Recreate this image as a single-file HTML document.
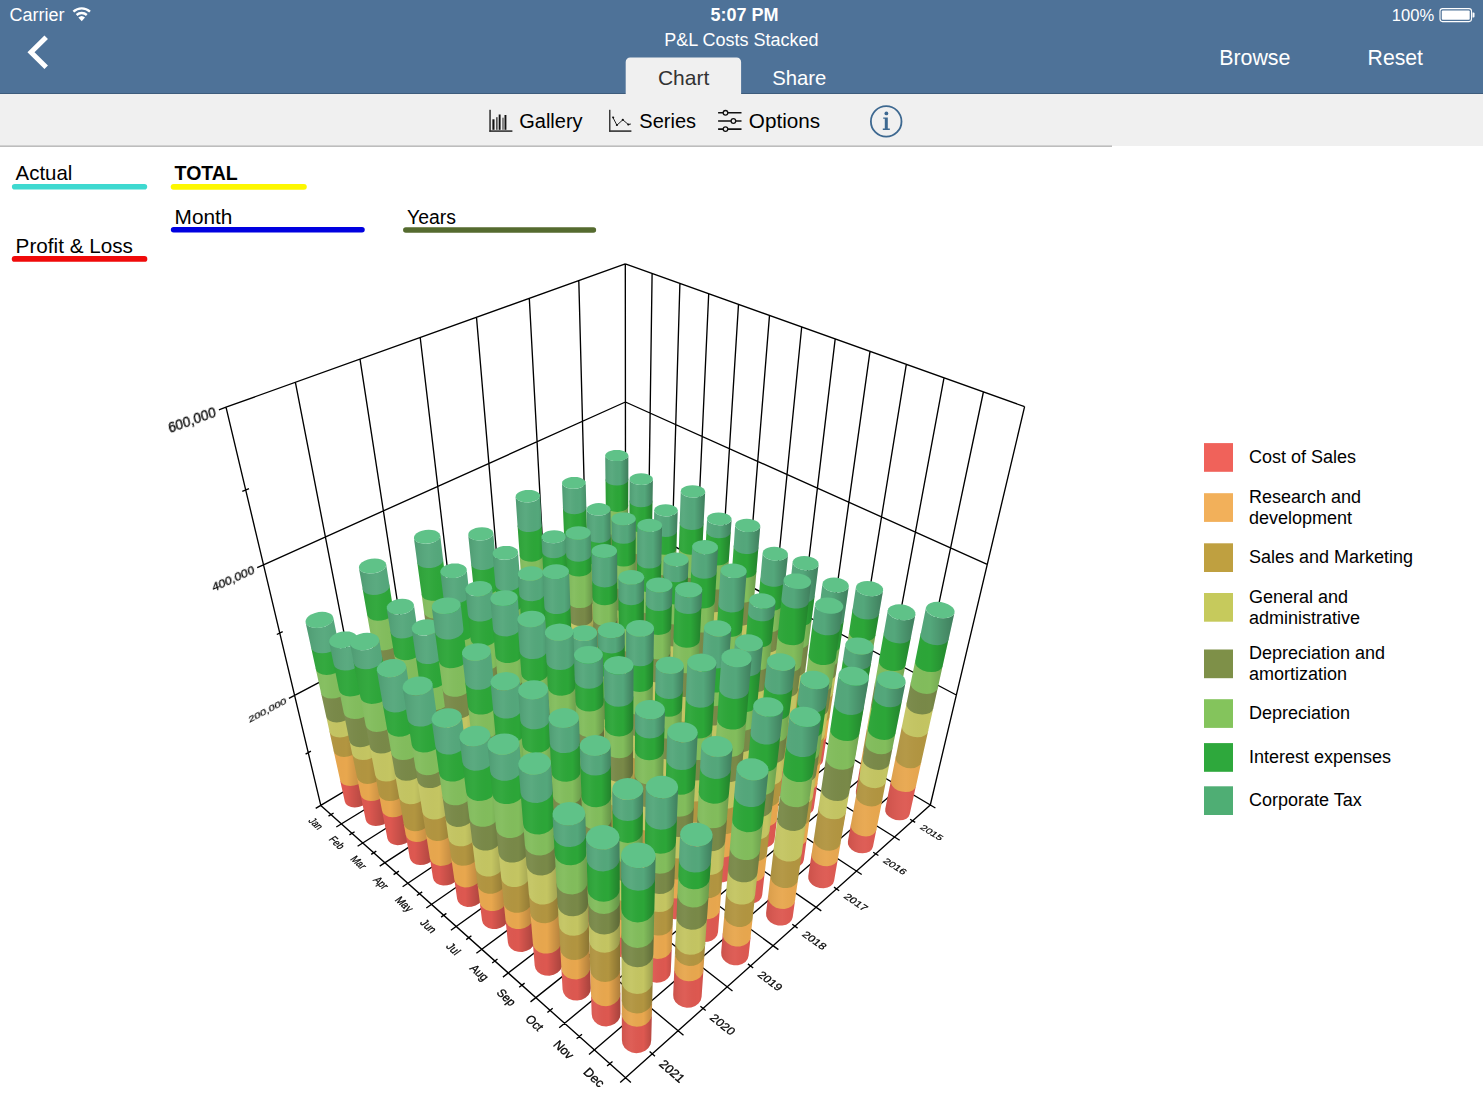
<!DOCTYPE html>
<html><head><meta charset="utf-8"><title>P&amp;L Costs Stacked</title>
<style>html,body{margin:0;padding:0;background:#fff;overflow:hidden}svg{display:block;font-family:"Liberation Sans",sans-serif}</style></head>
<body><svg width="1483" height="1112" viewBox="0 0 1483 1112">
<rect x="0" y="0" width="1483" height="94" fill="#4e7298"/>
<rect x="0" y="94" width="1483" height="52" fill="#f0f0f0"/>
<rect x="0" y="145.6" width="1112" height="1.1" fill="#a2a2a2"/><rect x="0" y="93" width="1483" height="1" fill="#3d5c7c"/>
<path d="M625.7 94V62a4.5 4.5 0 0 1 4.5-4.5h106.4a4.5 4.5 0 0 1 4.5 4.5V94z" fill="#f0f0f0"/>
<text x="9.5" y="20.9" font-size="18" fill="#fff">Carrier</text>
<g fill="none" stroke="#fff" stroke-width="2.4"><path d="M73.4 11.6a12.2 12.2 0 0 1 16.6 0"/><path d="M76.6 15a7.6 7.6 0 0 1 10.2 0"/></g><path d="M81.7 21.3l-3.3-3.7a4.8 4.8 0 0 1 6.6 0z" fill="#fff"/>
<text x="744.4" y="20.9" font-size="18" fill="#fff" text-anchor="middle" font-weight="bold">5:07 PM</text>
<text x="1391.8" y="20.6" font-size="16.6" fill="#fff">100%</text>
<rect x="1440" y="8.6" width="31.5" height="13" rx="2.5" fill="none" stroke="#fff" stroke-width="1.1"/><rect x="1441.8" y="10.4" width="27.9" height="9.4" rx="1" fill="#fff"/><path d="M1472.5 12.6h1a1 1 0 0 1 1 1v3a1 1 0 0 1-1 1h-1z" fill="#fff"/>
<text x="741.4" y="45.9" font-size="18" fill="#fff" text-anchor="middle">P&amp;L Costs Stacked</text>
<path d="M46.2 37.2L31 52.2l15.2 15" fill="none" stroke="#fff" stroke-width="5"/>
<text x="683.6" y="84.8" font-size="21" fill="#333" text-anchor="middle">Chart</text>
<text x="799.3" y="84.8" font-size="20.3" fill="#fff" text-anchor="middle">Share</text>
<text x="1254.8" y="64.5" font-size="21.4" fill="#fff" text-anchor="middle">Browse</text>
<text x="1395.3" y="64.5" font-size="21.2" fill="#fff" text-anchor="middle">Reset</text>
<g fill="#111"><rect x="489.4" y="109.8" width="1.3" height="22"/><rect x="489.4" y="130.3" width="23" height="1.6" fill="#333"/><rect x="492.4" y="119.3" width="2.1" height="10.5"/><rect x="496.1" y="117.2" width="1.5" height="12.6" fill="#444"/><rect x="498.7" y="114.5" width="1.9" height="15.3"/><rect x="502.4" y="117.7" width="1.2" height="12.1" fill="#444"/><rect x="504.5" y="115" width="1.9" height="14.8"/></g>
<text x="550.9" y="127.9" font-size="20" fill="#000" text-anchor="middle">Gallery</text>
<g><rect x="609.2" y="109.8" width="1.2" height="22" fill="#111"/><rect x="609.2" y="130.3" width="22.2" height="1.6" fill="#333"/><path d="M612.6 116.8l4.3 8.4 5.9-5.4 5.5 4.7 2.6-.5" fill="none" stroke="#222" stroke-width="1"/><circle cx="616.9" cy="125" r="1.1" fill="#111"/><circle cx="622.8" cy="119.8" r="1.1" fill="#111"/><circle cx="628.3" cy="124.5" r="1.1" fill="#111"/><circle cx="613.2" cy="117.6" r="1" fill="#111"/></g>
<text x="667.7" y="127.9" font-size="20" fill="#000" text-anchor="middle">Series</text>
<g stroke="#111" stroke-width="1.6" fill="none"><path d="M718.1 112.8h23.4M718.1 121h23.4M718.1 129.1h23.4"/></g><g fill="#f0f0f0" stroke="#111" stroke-width="1.3"><circle cx="725.5" cy="112.8" r="2.3"/><circle cx="733.4" cy="121" r="2.3"/><circle cx="725.5" cy="129.1" r="2.3"/></g>
<text x="784.5" y="127.6" font-size="20.7" fill="#000" text-anchor="middle">Options</text>
<circle cx="886.2" cy="121.4" r="15.3" fill="none" stroke="#3d6890" stroke-width="1.8"/><circle cx="886.4" cy="113.4" r="1.9" fill="#3d6890"/><path d="M883.2 117.4h4.6v11.2h2v1.4h-7v-1.4h2v-9.8h-1.6z" fill="#3d6890"/>
<text x="15.6" y="180" font-size="20.4" fill="#000">Actual</text>
<path d="M14.7 186.7H144.4" stroke="#3ed9d0" stroke-width="5.6" stroke-linecap="round"/>
<text x="174.6" y="180" font-size="19.5" fill="#000" font-weight="bold">TOTAL</text>
<path d="M173.6 186.8H303.9" stroke="#fdf700" stroke-width="5.8" stroke-linecap="round"/>
<text x="174.6" y="223.5" font-size="20.8" fill="#000">Month</text>
<path d="M173.6 229.8H362" stroke="#0000e0" stroke-width="5.5" stroke-linecap="round"/>
<text x="407" y="223.5" font-size="19.4" fill="#000">Years</text>
<path d="M405.8 230.1H593.4" stroke="#556b2f" stroke-width="5.5" stroke-linecap="round"/>
<text x="15.6" y="252.6" font-size="20.7" fill="#000">Profit &amp; Loss</text>
<path d="M14.7 258.9H144.4" stroke="#f00a0a" stroke-width="5.9" stroke-linecap="round"/>
<rect x="1204" y="443.1" width="29" height="28.7" fill="#f0625a"/>
<text x="1249" y="463.4" font-size="18" fill="#000">Cost of Sales</text>
<rect x="1204" y="493.2" width="29" height="28.7" fill="#f2b05a"/>
<text x="1249" y="502.9" font-size="18" fill="#000">Research and</text>
<text x="1249" y="523.7" font-size="18" fill="#000">development</text>
<rect x="1204" y="543.3" width="29" height="28.7" fill="#bfa040"/>
<text x="1249" y="563" font-size="18" fill="#000">Sales and Marketing</text>
<rect x="1204" y="593" width="29" height="28.7" fill="#c6ca5c"/>
<text x="1249" y="603" font-size="18" fill="#000">General and</text>
<text x="1249" y="623.7" font-size="18" fill="#000">administrative</text>
<rect x="1204" y="649.5" width="29" height="28.7" fill="#7e9048"/>
<text x="1249" y="659.4" font-size="18" fill="#000">Depreciation and</text>
<text x="1249" y="680.1" font-size="18" fill="#000">amortization</text>
<rect x="1204" y="699.2" width="29" height="28.7" fill="#84c45c"/>
<text x="1249" y="719.2" font-size="18" fill="#000">Depreciation</text>
<rect x="1204" y="743.1" width="29" height="28.7" fill="#2ea83c"/>
<text x="1249" y="762.6" font-size="18" fill="#000">Interest expenses</text>
<rect x="1204" y="786.3" width="29" height="28.7" fill="#4fae74"/>
<text x="1249" y="806" font-size="18" fill="#000">Corporate Tax</text>
<path d="M625.6 623.7L625.3 263.8M588.4 645.8L578.8 280.6M549.4 669.1L529.3 298.3M508.4 693.5L476.5 317.3M465.2 719.3L420.2 337.5M419.7 746.4L360 359.1M371.6 775.1L295.4 382.3M320.8 805.4L226 407.2M625.5 520.6L294.6 695.4M625.4 402L263.5 564.8M625.3 263.8L226 407.2M625.6 623.7L625.3 263.8M647 636.5L652.1 273.4M669.1 649.6L679.9 283.4M691.8 663.1L708.7 293.7M715.1 677L738.5 304.4M739.2 691.3L769.5 315.4M764 706.1L801.7 327M789.6 721.3L835.2 338.9M816 737L870 351.4M843.2 753.2L906.3 364.4M871.3 769.9L944 377.9M900.3 787.1L983.4 392M930.3 805L1024.6 406.7M625.5 520.6L956.3 695M625.4 402L987.2 564.3M625.3 263.8L1024.6 406.7M625.6 623.7L315.7 808.4M647 636.5L336.3 827M669.1 649.6L357.6 846.2M691.8 663.1L379.7 866.1M715.1 677L402.6 886.7M739.2 691.3L426.3 908M764 706.1L450.9 930.2M789.6 721.3L476.4 953.2M816 737L502.9 977.1M843.2 753.2L530.5 1001.9M871.3 769.9L559.2 1027.7M900.3 787.1L589 1054.6M930.3 805L620.2 1082.6M625.6 623.7L935.4 808M588.4 645.8L899.7 840.3M549.4 669.1L861.7 874.5M508.4 693.5L821.3 910.9M465.2 719.3L778.4 949.6M419.7 746.4L732.5 991M371.6 775.1L683.5 1035.2M320.8 805.4L630.9 1082.6M333.6 813L328.5 816.1M354.6 831.7L349.4 834.9M376.3 851.1L371.2 854.4M398.9 871.1L393.6 874.6M422.2 891.9L416.9 895.5M446.4 913.4L441.1 917.1M471.4 935.8L466.2 939.6M497.5 959L492.2 963M524.6 983.1L519.2 987.3M552.7 1008.2L547.4 1012.5M582 1034.3L576.6 1038.8M612.5 1061.4L607.1 1066.1M910.1 819.2L915.2 822.4M873.2 852.2L878.4 855.5M834 887.1L839.2 890.7M792.3 924.3L797.6 928.1M747.9 963.9L753.2 968M700.4 1006.3L705.7 1010.6M649.6 1051.6L655 1056.2M320.8 805.4L315.7 808.4M294.6 695.4L288.9 698.4M263.5 564.8L257.2 567.7M226 407.2L218.9 409.8M310.9 751.1L305.6 754.2M282.7 631.6L276.8 634.5M249 488.6L242.3 491.3" stroke="#000" stroke-width="1.35" fill="none"/>
<g fill="#000" stroke="#000" stroke-width="0.25" style="opacity:.99">
<text transform="matrix(0.6168 0.5629 -0.9326 0.5638 316.2 823.5)" font-size="10" text-anchor="middle" y="3.6">Jan</text>
<text transform="matrix(0.6383 0.5825 -0.9379 0.5835 337.1 842.5)" font-size="10" text-anchor="middle" y="3.6">Feb</text>
<text transform="matrix(0.6610 0.6032 -0.9430 0.6042 358.8 862.3)" font-size="10" text-anchor="middle" y="3.6">Mar</text>
<text transform="matrix(0.6849 0.6250 -0.9479 0.6261 381.2 882.8)" font-size="10" text-anchor="middle" y="3.6">Apr</text>
<text transform="matrix(0.7102 0.6481 -0.9524 0.6491 404.5 904)" font-size="10" text-anchor="middle" y="3.6">May</text>
<text transform="matrix(0.7368 0.6724 -0.9567 0.6734 428.6 926)" font-size="10" text-anchor="middle" y="3.6">Jun</text>
<text transform="matrix(0.7650 0.6981 -0.9606 0.6992 453.6 948.8)" font-size="10" text-anchor="middle" y="3.6">Jul</text>
<text transform="matrix(0.7949 0.7253 -0.9641 0.7264 479.6 972.5)" font-size="10" text-anchor="middle" y="3.6">Aug</text>
<text transform="matrix(0.8265 0.7542 -0.9672 0.7553 506.6 997.2)" font-size="10" text-anchor="middle" y="3.6">Sep</text>
<text transform="matrix(0.8600 0.7848 -0.9697 0.7859 534.7 1022.8)" font-size="10" text-anchor="middle" y="3.6">Oct</text>
<text transform="matrix(0.8957 0.8173 -0.9716 0.8185 563.9 1049.5)" font-size="10" text-anchor="middle" y="3.6">Nov</text>
<text transform="matrix(0.9336 0.8519 -0.9728 0.8531 594.4 1077.3)" font-size="10" text-anchor="middle" y="3.6">Dec</text>
<text transform="matrix(0.9285 0.5659 -0.6255 0.5668 921.5 826.2)" font-size="10" text-anchor="start" y="3.6">2015</text>
<text transform="matrix(0.9370 0.6005 -0.6638 0.6015 884.7 859.5)" font-size="10" text-anchor="start" y="3.6">2016</text>
<text transform="matrix(0.9449 0.6384 -0.7057 0.6395 845.6 895)" font-size="10" text-anchor="start" y="3.6">2017</text>
<text transform="matrix(0.9518 0.6801 -0.7516 0.6811 804 932.7)" font-size="10" text-anchor="start" y="3.6">2018</text>
<text transform="matrix(0.9576 0.7259 -0.8022 0.7270 759.6 972.9)" font-size="10" text-anchor="start" y="3.6">2019</text>
<text transform="matrix(0.9620 0.7765 -0.8581 0.7776 712.2 1015.8)" font-size="10" text-anchor="start" y="3.6">2020</text>
<text transform="matrix(0.9646 0.8326 -0.9201 0.8338 661.5 1061.8)" font-size="10" text-anchor="start" y="3.6">2021</text>
<text transform="matrix(1.0368 -0.5477 0.2241 0.9143 286.1 699.9)" font-size="10" text-anchor="end" y="3.6">200,000</text>
<text transform="matrix(1.1540 -0.5193 0.2683 1.0946 254 569.1)" font-size="10" text-anchor="end" y="3.6">400,000</text>
<text transform="matrix(1.3001 -0.4668 0.3270 1.3340 215.3 411.1)" font-size="10" text-anchor="end" y="3.6">600,000</text>
</g>
<defs>
<linearGradient id="sh" x1="0" x2="1"><stop offset="0" stop-color="#000" stop-opacity=".08"/><stop offset=".3" stop-color="#fff" stop-opacity=".04"/><stop offset=".65" stop-color="#000" stop-opacity="0"/><stop offset="1" stop-color="#000" stop-opacity=".25"/></linearGradient>
</defs>
<path d="M628.1 641.1L627.6 643L626.2 644.7L623.9 646.1L621.1 647.1L617.9 647.4L614.7 647.1L611.8 646.2L609.6 644.8L608.1 643.1L607.6 641.2L607.3 617.3L607.8 619.2L609.3 621L611.6 622.3L614.5 623.2L617.7 623.5L621 623.2L623.9 622.3L626.2 620.9L627.6 619.1L628.1 617.2Z" fill="#dd5850"/><path d="M628.1 618.4L627.6 620.3L626.2 622.1L623.9 623.5L621 624.4L617.8 624.7L614.5 624.4L611.6 623.5L609.3 622.2L607.8 620.4L607.3 618.5L607 596.4L607.5 598.3L609 600L611.4 601.3L614.3 602.2L617.6 602.5L620.9 602.2L623.9 601.3L626.2 599.9L627.7 598.2L628.1 596.3Z" fill="#e8a74e"/><path d="M628.1 597.5L627.7 599.4L626.2 601.1L623.9 602.5L620.9 603.4L617.6 603.7L614.3 603.4L611.4 602.6L609 601.2L607.5 599.5L607 597.6L606.7 573.6L607.2 575.4L608.8 577.1L611.1 578.5L614.1 579.3L617.5 579.6L620.8 579.3L623.8 578.4L626.2 577L627.7 575.3L628.2 573.5Z" fill="#b29540"/><path d="M628.2 574.7L627.7 576.6L626.2 578.3L623.8 579.7L620.8 580.5L617.5 580.9L614.2 580.6L611.2 579.7L608.8 578.4L607.3 576.7L606.7 574.8L606.4 550.4L606.9 552.3L608.5 553.9L610.9 555.3L614 556.1L617.3 556.4L620.7 556.1L623.8 555.2L626.2 553.8L627.7 552.2L628.2 550.3Z" fill="#c4c562"/><path d="M628.2 551.6L627.7 553.5L626.2 555.2L623.8 556.5L620.7 557.4L617.4 557.7L614 557.4L610.9 556.6L608.5 555.3L607 553.6L606.4 551.7L606.1 528.3L606.7 530.1L608.2 531.8L610.7 533.1L613.8 533.9L617.2 534.2L620.6 533.9L623.7 533L626.2 531.7L627.7 530L628.2 528.2Z" fill="#798948"/><path d="M628.2 529.5L627.7 531.4L626.2 533L623.7 534.3L620.7 535.2L617.2 535.5L613.8 535.2L610.7 534.4L608.2 533.1L606.7 531.5L606.2 529.7L605.8 504.7L606.4 506.5L607.9 508.1L610.4 509.4L613.6 510.2L617.1 510.5L620.6 510.2L623.7 509.3L626.2 508L627.7 506.4L628.2 504.6Z" fill="#82bd5c"/><path d="M628.2 506L627.7 507.8L626.2 509.4L623.7 510.7L620.6 511.6L617.1 511.9L613.6 511.6L610.5 510.8L608 509.5L606.4 507.9L605.8 506.1L605.5 478.4L606 480.1L607.6 481.7L610.2 483L613.4 483.8L616.9 484.1L620.5 483.7L623.6 482.9L626.2 481.6L627.8 480L628.3 478.3Z" fill="#2ca638"/><path d="M628.3 479.7L627.8 481.5L626.2 483.1L623.6 484.4L620.5 485.2L616.9 485.5L613.4 485.2L610.2 484.4L607.7 483.2L606 481.6L605.5 479.8L605.2 455.5L605.7 457.3L607.4 458.8L609.9 460.1L613.2 460.9L616.8 461.1L620.4 460.8L623.6 460L626.2 458.8L627.8 457.2L628.3 455.4Z" fill="#54a77b"/><path d="M628.1 641.1L627.6 643L626.2 644.7L623.9 646.1L621.1 647.1L617.9 647.4L614.7 647.1L611.8 646.2L609.6 644.8L608.1 643.1L607.6 641.2L605.2 455.5L605.7 457.3L607.4 458.8L609.9 460.1L613.2 460.9L616.8 461.1L620.4 460.8L623.6 460L626.2 458.8L627.8 457.2L628.3 455.4Z" fill="url(#sh)"/><path d="M624.9 459.5L622.5 460.4L619.7 460.9L616.7 461.1L613.7 460.9L610.9 460.4L608.5 459.5L606.7 458.3L605.5 456.9L605.2 455.5L605.6 454L606.8 452.7L608.7 451.6L611.1 450.7L613.8 450.1L616.8 449.9L619.8 450.1L622.5 450.7L624.9 451.5L626.8 452.7L627.9 454L628.3 455.5L627.9 456.9L626.8 458.3Z" fill="#5fc288"/>
<path d="M650 654.5L649.5 656.4L648 658.2L645.7 659.6L642.8 660.5L639.5 660.8L636.3 660.5L633.4 659.5L631.1 658.1L629.7 656.3L629.2 654.3L629.3 631.5L629.7 633.5L631.2 635.3L633.5 636.7L636.5 637.7L639.8 638L643 637.7L646 636.8L648.4 635.4L649.9 633.7L650.4 631.7Z" fill="#dd5850"/><path d="M650.4 632.9L649.8 634.9L648.3 636.6L646 638L643 638.9L639.7 639.2L636.5 638.9L633.5 637.9L631.2 636.5L629.7 634.7L629.3 632.7L629.3 611.6L629.8 613.6L631.3 615.3L633.6 616.8L636.6 617.7L639.9 618L643.3 617.8L646.3 616.9L648.7 615.5L650.2 613.7L650.7 611.8Z" fill="#e8a74e"/><path d="M650.7 613L650.2 615L648.6 616.7L646.3 618.1L643.3 619L639.9 619.3L636.6 618.9L633.6 618L631.3 616.6L629.8 614.8L629.3 612.9L629.3 589.9L629.8 591.9L631.3 593.6L633.7 595L636.8 596L640.1 596.3L643.5 596L646.6 595.1L649 593.8L650.5 592L651.1 590.1Z" fill="#b29540"/><path d="M651 591.4L650.5 593.3L649 595.1L646.6 596.4L643.5 597.3L640.1 597.6L636.8 597.2L633.7 596.3L631.3 594.9L629.8 593.2L629.3 591.2L629.4 568L629.9 569.9L631.4 571.6L633.8 573L636.9 573.9L640.3 574.3L643.8 574L646.9 573.1L649.3 571.8L650.9 570.1L651.4 568.2Z" fill="#c4c562"/><path d="M651.4 569.5L650.9 571.4L649.3 573.1L646.8 574.4L643.8 575.3L640.3 575.6L636.9 575.3L633.8 574.3L631.4 572.9L629.9 571.2L629.4 569.3L629.4 547L629.9 548.9L631.5 550.6L633.9 552L637.1 552.9L640.5 553.2L644 552.9L647.1 552.1L649.6 550.7L651.2 549L651.8 547.2Z" fill="#798948"/><path d="M651.7 548.5L651.2 550.4L649.6 552.1L647.1 553.4L644 554.3L640.5 554.6L637 554.2L633.9 553.3L631.5 551.9L629.9 550.2L629.4 548.3L629.5 524.7L630 526.5L631.6 528.2L634 529.6L637.2 530.5L640.7 530.8L644.3 530.5L647.4 529.7L650 528.4L651.6 526.7L652.1 524.8Z" fill="#82bd5c"/><path d="M652.1 526.2L651.6 528.1L649.9 529.8L647.4 531.1L644.3 531.9L640.7 532.2L637.2 531.9L634 531L631.6 529.6L630 527.9L629.5 526.1L629.5 499.8L630 501.6L631.6 503.3L634.2 504.6L637.4 505.5L641 505.8L644.6 505.6L647.8 504.7L650.3 503.4L652 501.8L652.5 499.9Z" fill="#2ca638"/><path d="M652.5 501.4L652 503.2L650.3 504.9L647.8 506.2L644.5 507L641 507.3L637.4 506.9L634.2 506.1L631.6 504.7L630 503L629.5 501.2L629.6 479L630.1 480.8L631.7 482.5L634.3 483.8L637.5 484.7L641.2 485L644.8 484.7L648.1 483.9L650.7 482.6L652.3 481L652.9 479.2Z" fill="#54a77b"/><path d="M650 654.5L649.5 656.4L648 658.2L645.7 659.6L642.8 660.5L639.5 660.8L636.3 660.5L633.4 659.5L631.1 658.1L629.7 656.3L629.2 654.3L629.6 479L630.1 480.8L631.7 482.5L634.3 483.8L637.5 484.7L641.2 485L644.8 484.7L648.1 483.9L650.7 482.6L652.3 481L652.9 479.2Z" fill="url(#sh)"/><path d="M649.6 483.2L647.2 484.2L644.4 484.8L641.3 485L638.3 484.8L635.4 484.2L633 483.3L631.1 482L630 480.6L629.6 479.1L629.9 477.6L631.1 476.2L632.9 475L635.3 474.1L638.1 473.5L641.1 473.3L644.1 473.5L646.9 474.1L649.3 475L651.2 476.2L652.4 477.6L652.9 479.1L652.5 480.6L651.4 482Z" fill="#5fc288"/>
<path d="M590.3 663.8L589.9 665.8L588.4 667.7L586.2 669.2L583.3 670.3L580 670.7L576.7 670.5L573.7 669.6L571.4 668.3L569.8 666.5L569.3 664.5L568.3 641.3L568.9 643.3L570.5 645.1L572.9 646.5L575.9 647.3L579.2 647.5L582.5 647.1L585.5 646.1L587.8 644.5L589.3 642.7L589.7 640.7Z" fill="#dd5850"/><path d="M589.7 641.9L589.3 643.9L587.8 645.8L585.5 647.3L582.6 648.3L579.3 648.7L575.9 648.5L572.9 647.7L570.5 646.3L569 644.5L568.4 642.5L567.5 621L568.1 623L569.7 624.8L572.1 626.1L575.2 627L578.6 627.2L581.9 626.7L584.9 625.7L587.3 624.2L588.7 622.4L589.2 620.4Z" fill="#e8a74e"/><path d="M589.2 621.6L588.8 623.6L587.3 625.5L585 627L582 628L578.6 628.4L575.2 628.2L572.2 627.4L569.7 626L568.2 624.3L567.6 622.3L566.6 599L567.2 600.9L568.8 602.6L571.3 604L574.4 604.8L577.8 605L581.2 604.6L584.3 603.6L586.7 602.1L588.2 600.3L588.6 598.3Z" fill="#b29540"/><path d="M588.6 599.6L588.2 601.6L586.7 603.4L584.3 604.9L581.3 605.9L577.9 606.3L574.5 606.1L571.4 605.3L568.9 603.9L567.3 602.2L566.7 600.2L565.7 576.6L566.3 578.5L568 580.2L570.5 581.5L573.6 582.4L577.1 582.6L580.6 582.2L583.7 581.2L586.1 579.7L587.6 577.9L588 575.9Z" fill="#c4c562"/><path d="M588.1 577.2L587.6 579.2L586.1 581L583.7 582.5L580.6 583.5L577.1 583.9L573.7 583.7L570.5 582.9L568 581.5L566.4 579.8L565.8 577.9L564.9 555.2L565.5 557.1L567.1 558.8L569.7 560.1L572.9 560.9L576.4 561.1L579.9 560.7L583 559.7L585.5 558.2L587 556.5L587.5 554.5Z" fill="#798948"/><path d="M587.5 555.9L587.1 557.8L585.5 559.6L583.1 561.1L580 562L576.4 562.5L572.9 562.3L569.7 561.4L567.2 560.1L565.5 558.4L564.9 556.5L564 532.4L564.6 534.2L566.2 535.9L568.8 537.2L572.1 538L575.7 538.2L579.2 537.8L582.4 536.9L584.9 535.4L586.5 533.6L586.9 531.7Z" fill="#82bd5c"/><path d="M587 533.1L586.5 535L584.9 536.8L582.4 538.3L579.3 539.2L575.7 539.6L572.1 539.4L568.9 538.6L566.3 537.3L564.6 535.7L564 533.8L562.9 506.9L563.6 508.8L565.3 510.4L567.9 511.7L571.2 512.5L574.8 512.7L578.4 512.3L581.7 511.3L584.2 509.9L585.8 508.2L586.3 506.3Z" fill="#2ca638"/><path d="M586.3 507.8L585.8 509.6L584.2 511.4L581.7 512.8L578.5 513.8L574.9 514.2L571.2 514L567.9 513.2L565.3 511.9L563.6 510.2L563 508.4L562 483.2L562.6 485L564.3 486.6L567 487.9L570.3 488.6L574 488.8L577.7 488.4L581 487.5L583.6 486.1L585.2 484.4L585.7 482.5Z" fill="#54a77b"/><path d="M590.3 663.8L589.9 665.8L588.4 667.7L586.2 669.2L583.3 670.3L580 670.7L576.7 670.5L573.7 669.6L571.4 668.3L569.8 666.5L569.3 664.5L562 483.2L562.6 485L564.3 486.6L567 487.9L570.3 488.6L574 488.8L577.7 488.4L581 487.5L583.6 486.1L585.2 484.4L585.7 482.5Z" fill="url(#sh)"/><path d="M582 487.1L579.4 488L576.5 488.6L573.4 488.8L570.4 488.6L567.5 488L565.1 487.1L563.3 485.8L562.3 484.4L562 482.9L562.5 481.3L563.8 479.9L565.8 478.7L568.3 477.7L571.2 477.1L574.2 476.9L577.3 477.1L580.1 477.7L582.4 478.7L584.2 479.9L585.4 481.3L585.7 482.8L585.2 484.4L583.9 485.8Z" fill="#5fc288"/>
<path d="M672.5 668.3L672 670.3L670.5 672.1L668.1 673.5L665.1 674.4L661.8 674.7L658.6 674.2L655.6 673.2L653.3 671.7L651.9 669.8L651.5 667.8L651.8 646.4L652.3 648.4L653.7 650.3L656.1 651.8L659 652.8L662.4 653.2L665.7 653L668.7 652.1L671.1 650.7L672.7 648.9L673.2 646.9Z" fill="#dd5850"/><path d="M673.2 648.1L672.6 650.1L671.1 651.9L668.7 653.3L665.7 654.2L662.3 654.4L659 654L656 653L653.7 651.5L652.3 649.6L651.8 647.6L652.2 627.8L652.6 629.8L654.1 631.6L656.5 633.1L659.5 634.1L662.8 634.5L666.2 634.3L669.3 633.4L671.7 632.1L673.3 630.3L673.8 628.3Z" fill="#e8a74e"/><path d="M673.8 629.5L673.2 631.5L671.7 633.3L669.2 634.7L666.2 635.5L662.8 635.8L659.4 635.4L656.4 634.4L654.1 632.9L652.6 631L652.1 629L652.5 607.6L653 609.6L654.5 611.4L656.9 612.9L659.9 613.9L663.3 614.3L666.8 614L669.9 613.2L672.3 611.8L673.9 610L674.5 608Z" fill="#b29540"/><path d="M674.5 609.3L673.9 611.3L672.3 613.1L669.8 614.5L666.7 615.3L663.3 615.6L659.9 615.2L656.8 614.2L654.5 612.7L653 610.8L652.5 608.8L652.9 587.1L653.3 589.1L654.9 590.9L657.3 592.4L660.4 593.4L663.9 593.7L667.3 593.5L670.5 592.7L673 591.3L674.6 589.5L675.2 587.6Z" fill="#c4c562"/><path d="M675.1 588.9L674.6 590.9L672.9 592.6L670.4 594L667.3 594.8L663.8 595.1L660.4 594.7L657.3 593.7L654.8 592.2L653.3 590.4L652.9 588.4L653.2 567.6L653.7 569.5L655.2 571.3L657.7 572.8L660.8 573.8L664.3 574.2L667.9 573.9L671.1 573.1L673.6 571.7L675.2 570L675.8 568.1Z" fill="#798948"/><path d="M675.8 569.4L675.2 571.4L673.5 573.1L671 574.4L667.8 575.3L664.3 575.5L660.8 575.1L657.7 574.2L655.2 572.7L653.7 570.9L653.2 568.9L653.6 546.9L654.1 548.8L655.6 550.6L658.1 552L661.3 553L664.9 553.4L668.4 553.1L671.7 552.3L674.2 551L675.9 549.3L676.5 547.3Z" fill="#82bd5c"/><path d="M676.4 548.7L675.8 550.6L674.2 552.4L671.6 553.7L668.4 554.5L664.8 554.8L661.3 554.4L658.1 553.4L655.6 552L654 550.2L653.6 548.2L653.9 529.1L654.4 531L656 532.8L658.5 534.2L661.7 535.1L665.3 535.5L668.9 535.3L672.2 534.5L674.8 533.2L676.5 531.5L677 529.6Z" fill="#2ca638"/><path d="M677 531L676.4 532.9L674.7 534.6L672.1 535.9L668.9 536.7L665.3 536.9L661.7 536.6L658.5 535.6L655.9 534.2L654.4 532.4L653.9 530.5L654.2 510L654.7 511.9L656.3 513.7L658.9 515.1L662.1 516L665.8 516.4L669.4 516.2L672.7 515.4L675.4 514.1L677.1 512.4L677.7 510.5Z" fill="#54a77b"/><path d="M672.5 668.3L672 670.3L670.5 672.1L668.1 673.5L665.1 674.4L661.8 674.7L658.6 674.2L655.6 673.2L653.3 671.7L651.9 669.8L651.5 667.8L654.2 510L654.7 511.9L656.3 513.7L658.9 515.1L662.1 516L665.8 516.4L669.4 516.2L672.7 515.4L675.4 514.1L677.1 512.4L677.7 510.5Z" fill="url(#sh)"/><path d="M674.5 514.6L672.1 515.6L669.3 516.2L666.3 516.4L663.2 516.2L660.3 515.6L657.8 514.6L655.9 513.4L654.7 511.9L654.2 510.3L654.6 508.7L655.7 507.3L657.5 506L659.9 505L662.6 504.4L665.6 504.2L668.7 504.4L671.5 505L674 506L675.9 507.2L677.2 508.7L677.7 510.3L677.4 511.9L676.3 513.3Z" fill="#5fc288"/>
<path d="M612.2 677.9L611.7 680L610.2 681.9L607.9 683.4L605 684.5L601.6 684.8L598.3 684.6L595.3 683.7L592.9 682.2L591.4 680.3L590.9 678.3L590.3 657L590.9 659.1L592.4 660.9L594.8 662.4L597.9 663.3L601.3 663.5L604.6 663.2L607.6 662.1L610 660.6L611.5 658.7L612 656.6Z" fill="#dd5850"/><path d="M612 657.8L611.5 659.9L610 661.8L607.7 663.4L604.6 664.4L601.3 664.8L597.9 664.5L594.9 663.6L592.5 662.1L590.9 660.3L590.4 658.2L589.9 638.5L590.4 640.6L592 642.4L594.4 643.8L597.5 644.7L600.9 645L604.3 644.6L607.4 643.6L609.8 642.1L611.3 640.2L611.8 638.1Z" fill="#e8a74e"/><path d="M611.8 639.4L611.3 641.4L609.8 643.3L607.4 644.9L604.4 645.9L601 646.2L597.5 646L594.5 645.1L592 643.6L590.4 641.8L589.9 639.8L589.4 618.4L589.9 620.5L591.5 622.3L594 623.7L597.1 624.6L600.6 624.9L604 624.5L607.1 623.5L609.6 622L611.1 620.1L611.6 618.1Z" fill="#b29540"/><path d="M611.6 619.3L611.1 621.4L609.6 623.3L607.1 624.8L604.1 625.8L600.6 626.2L597.1 625.9L594 625L591.5 623.6L589.9 621.7L589.4 619.7L588.8 598.1L589.4 600.1L591 601.9L593.5 603.4L596.7 604.2L600.2 604.5L603.7 604.1L606.9 603.1L609.3 601.6L610.9 599.8L611.4 597.8Z" fill="#c4c562"/><path d="M611.4 599.1L610.9 601.1L609.3 603L606.9 604.5L603.7 605.4L600.2 605.8L596.7 605.6L593.6 604.7L591.1 603.3L589.4 601.5L588.9 599.4L588.4 578.7L588.9 580.7L590.6 582.5L593.1 583.9L596.3 584.8L599.9 585.1L603.4 584.7L606.6 583.7L609.1 582.2L610.7 580.4L611.2 578.4Z" fill="#798948"/><path d="M611.2 579.7L610.7 581.7L609.1 583.6L606.6 585.1L603.4 586L599.9 586.4L596.3 586.2L593.1 585.3L590.6 583.9L589 582.1L588.4 580.1L587.8 558.2L588.4 560.1L590.1 561.9L592.7 563.3L595.9 564.1L599.5 564.4L603.1 564L606.3 563.1L608.9 561.6L610.5 559.8L611 557.8Z" fill="#82bd5c"/><path d="M611 559.2L610.5 561.2L608.9 563L606.3 564.5L603.1 565.4L599.5 565.8L595.9 565.5L592.7 564.7L590.1 563.3L588.4 561.5L587.9 559.5L587.3 535.2L587.8 537.2L589.5 538.9L592.1 540.3L595.4 541.2L599.1 541.4L602.8 541L606 540.1L608.6 538.6L610.2 536.9L610.7 534.9Z" fill="#2ca638"/><path d="M610.7 536.3L610.2 538.3L608.6 540.1L606 541.5L602.8 542.5L599.1 542.9L595.5 542.6L592.2 541.7L589.6 540.4L587.9 538.6L587.3 536.7L586.6 509.5L587.2 511.4L588.9 513.1L591.6 514.4L594.9 515.3L598.6 515.5L602.4 515.2L605.7 514.2L608.3 512.8L609.9 511L610.5 509.1Z" fill="#54a77b"/><path d="M612.2 677.9L611.7 680L610.2 681.9L607.9 683.4L605 684.5L601.6 684.8L598.3 684.6L595.3 683.7L592.9 682.2L591.4 680.3L590.9 678.3L586.6 509.5L587.2 511.4L588.9 513.1L591.6 514.4L594.9 515.3L598.6 515.5L602.4 515.2L605.7 514.2L608.3 512.8L609.9 511L610.5 509.1Z" fill="url(#sh)"/><path d="M606.9 513.7L604.4 514.7L601.4 515.3L598.3 515.5L595.2 515.3L592.3 514.7L589.9 513.7L588.1 512.4L586.9 510.9L586.6 509.3L587.1 507.7L588.4 506.2L590.3 504.9L592.8 504L595.7 503.3L598.8 503.1L601.8 503.3L604.6 503.9L607.1 504.9L608.9 506.2L610.1 507.7L610.5 509.3L610 510.9L608.8 512.4Z" fill="#5fc288"/>
<path d="M695.8 682.5L695.2 684.6L693.6 686.4L691.2 687.8L688.1 688.7L684.8 688.9L681.5 688.4L678.5 687.3L676.2 685.7L674.8 683.8L674.4 681.6L675.2 658L675.6 660.1L677 662.1L679.4 663.7L682.4 664.7L685.8 665.2L689.2 665L692.2 664.2L694.7 662.8L696.3 660.9L696.9 658.9Z" fill="#dd5850"/><path d="M696.9 660.1L696.3 662.2L694.7 664L692.2 665.4L689.1 666.2L685.7 666.4L682.3 666L679.3 664.9L677 663.3L675.5 661.3L675.1 659.2L675.9 637.3L676.3 639.4L677.8 641.3L680.1 642.9L683.2 644L686.6 644.4L690.1 644.2L693.2 643.4L695.7 642L697.3 640.2L698 638.2Z" fill="#e8a74e"/><path d="M697.9 639.4L697.3 641.5L695.7 643.3L693.1 644.7L690 645.5L686.6 645.7L683.2 645.2L680.1 644.2L677.7 642.6L676.3 640.6L675.8 638.6L676.6 614.7L677.1 616.8L678.6 618.7L681 620.3L684.1 621.3L687.6 621.8L691.1 621.6L694.3 620.8L696.8 619.4L698.5 617.6L699.1 615.6Z" fill="#b29540"/><path d="M699 616.9L698.4 618.9L696.7 620.7L694.2 622.1L691 622.9L687.5 623.1L684 622.6L680.9 621.5L678.5 620L677 618.1L676.6 616L677.4 591.8L677.9 593.8L679.4 595.7L681.8 597.3L685 598.3L688.5 598.8L692.1 598.6L695.3 597.8L697.9 596.4L699.6 594.6L700.2 592.6Z" fill="#c4c562"/><path d="M700.1 594L699.5 596L697.8 597.7L695.3 599.1L692 599.9L688.5 600.1L684.9 599.7L681.8 598.6L679.3 597L677.8 595.2L677.4 593.1L678.2 569.8L678.6 571.9L680.2 573.7L682.7 575.3L685.9 576.3L689.4 576.8L693.1 576.6L696.3 575.8L698.9 574.4L700.7 572.7L701.3 570.7Z" fill="#798948"/><path d="M701.2 572L700.6 574L698.9 575.8L696.3 577.1L693 577.9L689.4 578.1L685.8 577.7L682.6 576.6L680.1 575.1L678.6 573.2L678.1 571.2L679 546.5L679.4 548.5L681 550.3L683.5 551.8L686.8 552.9L690.4 553.3L694.1 553.1L697.4 552.3L700.1 551L701.8 549.2L702.4 547.3Z" fill="#82bd5c"/><path d="M702.4 548.7L701.7 550.7L700 552.4L697.3 553.7L694 554.5L690.4 554.7L686.7 554.3L683.5 553.2L680.9 551.7L679.4 549.9L678.9 547.9L679.8 521.8L680.3 523.7L681.9 525.6L684.4 527.1L687.7 528.1L691.4 528.5L695.2 528.3L698.6 527.5L701.3 526.2L703 524.5L703.6 522.6Z" fill="#2ca638"/><path d="M703.6 524.1L702.9 526L701.2 527.7L698.5 529L695.1 529.8L691.4 530L687.7 529.5L684.4 528.5L681.8 527L680.2 525.2L679.7 523.2L680.8 491L681.3 492.9L683 494.7L685.6 496.2L689 497.2L692.7 497.6L696.5 497.4L700 496.6L702.7 495.3L704.5 493.7L705.2 491.8Z" fill="#54a77b"/><path d="M695.8 682.5L695.2 684.6L693.6 686.4L691.2 687.8L688.1 688.7L684.8 688.9L681.5 688.4L678.5 687.3L676.2 685.7L674.8 683.8L674.4 681.6L680.8 491L681.3 492.9L683 494.7L685.6 496.2L689 497.2L692.7 497.6L696.5 497.4L700 496.6L702.7 495.3L704.5 493.7L705.2 491.8Z" fill="url(#sh)"/><path d="M702 495.8L699.6 496.8L696.7 497.4L693.5 497.6L690.4 497.4L687.4 496.8L684.7 495.8L682.7 494.5L681.4 493L680.8 491.4L681.1 489.8L682.2 488.3L684.1 487L686.5 486.1L689.4 485.5L692.5 485.2L695.6 485.4L698.6 486.1L701.2 487L703.2 488.3L704.6 489.8L705.1 491.4L704.9 493L703.8 494.5Z" fill="#5fc288"/>
<path d="M550.5 687.7L550.2 689.8L548.8 691.8L546.5 693.5L543.5 694.7L540.2 695.2L536.8 695.1L533.7 694.3L531.3 692.9L529.6 691.1L529 689L527.3 665.5L528 667.5L529.6 669.3L532.2 670.7L535.3 671.5L538.7 671.6L542.1 671.1L545.1 669.9L547.5 668.3L548.9 666.3L549.3 664.1Z" fill="#dd5850"/><path d="M549.3 665.4L548.9 667.5L547.5 669.5L545.2 671.2L542.2 672.3L538.8 672.9L535.4 672.7L532.2 671.9L529.7 670.6L528.1 668.8L527.4 666.7L525.9 644.8L526.6 646.9L528.2 648.7L530.8 650L534 650.8L537.4 651L540.9 650.4L543.9 649.3L546.3 647.6L547.7 645.6L548.1 643.5Z" fill="#e8a74e"/><path d="M548.2 644.8L547.8 646.9L546.4 648.9L544 650.5L541 651.7L537.5 652.2L534 652.1L530.9 651.3L528.3 649.9L526.6 648.1L526 646.1L524.3 622.3L525 624.4L526.7 626.2L529.3 627.5L532.5 628.3L536 628.4L539.5 627.9L542.6 626.7L545 625.1L546.5 623.1L546.9 621Z" fill="#b29540"/><path d="M547 622.3L546.6 624.4L545.1 626.4L542.7 628L539.6 629.2L536.1 629.7L532.6 629.6L529.4 628.8L526.8 627.5L525.1 625.7L524.4 623.6L522.7 599.5L523.4 601.5L525.1 603.3L527.8 604.6L531 605.4L534.6 605.5L538.2 605L541.3 603.9L543.8 602.2L545.3 600.3L545.7 598.2Z" fill="#c4c562"/><path d="M545.8 599.6L545.3 601.6L543.9 603.6L541.4 605.2L538.3 606.3L534.7 606.9L531.1 606.7L527.9 606L525.2 604.6L523.5 602.9L522.8 600.9L521.2 577.7L521.9 579.7L523.6 581.4L526.3 582.7L529.6 583.5L533.3 583.6L536.9 583.1L540.1 582L542.6 580.4L544.1 578.4L544.5 576.4Z" fill="#798948"/><path d="M544.6 577.8L544.2 579.8L542.6 581.7L540.2 583.3L537 584.5L533.4 585L529.7 584.9L526.4 584.1L523.7 582.8L522 581L521.3 579L519.6 554.4L520.3 556.3L522.1 558.1L524.8 559.4L528.1 560.1L531.8 560.2L535.5 559.7L538.7 558.6L541.3 557L542.8 555.1L543.2 553.1Z" fill="#82bd5c"/><path d="M543.3 554.5L542.9 556.6L541.3 558.5L538.8 560.1L535.6 561.2L531.9 561.7L528.2 561.6L524.9 560.8L522.1 559.5L520.4 557.8L519.7 555.8L517.5 524.8L518.2 526.7L520 528.4L522.8 529.7L526.2 530.4L530 530.5L533.7 530L537 528.9L539.6 527.4L541.2 525.5L541.6 523.5Z" fill="#2ca638"/><path d="M541.7 525L541.3 527L539.7 528.9L537.1 530.4L533.8 531.5L530.1 532L526.3 531.9L522.9 531.2L520.1 529.9L518.3 528.2L517.6 526.2L515.6 496.7L516.3 498.6L518.1 500.3L520.9 501.6L524.4 502.3L528.2 502.4L532 501.9L535.4 500.9L538 499.3L539.7 497.5L540.1 495.5Z" fill="#54a77b"/><path d="M550.5 687.7L550.2 689.8L548.8 691.8L546.5 693.5L543.5 694.7L540.2 695.2L536.8 695.1L533.7 694.3L531.3 692.9L529.6 691.1L529 689L515.6 496.7L516.3 498.6L518.1 500.3L520.9 501.6L524.4 502.3L528.2 502.4L532 501.9L535.4 500.9L538 499.3L539.7 497.5L540.1 495.5Z" fill="url(#sh)"/><path d="M536 500.6L533.3 501.6L530.3 502.2L527.1 502.5L523.9 502.2L521 501.6L518.6 500.6L516.8 499.3L515.8 497.8L515.6 496.1L516.3 494.5L517.7 493L519.8 491.7L522.5 490.8L525.5 490.1L528.6 489.9L531.8 490.1L534.6 490.7L537 491.7L538.8 493L539.9 494.5L540.1 496.1L539.5 497.8L538.1 499.3Z" fill="#5fc288"/>
<path d="M634.7 692.4L634.2 694.6L632.7 696.5L630.3 698.1L627.3 699.1L623.9 699.4L620.6 699.1L617.5 698.1L615.1 696.5L613.6 694.6L613.1 692.4L612.9 669L613.4 671.2L615 673.1L617.4 674.6L620.5 675.6L623.9 675.9L627.3 675.6L630.4 674.6L632.8 673.1L634.4 671.1L634.9 669Z" fill="#dd5850"/><path d="M634.9 670.2L634.4 672.4L632.8 674.3L630.4 675.8L627.3 676.8L623.9 677.2L620.5 676.8L617.4 675.9L615 674.3L613.4 672.4L612.9 670.3L612.7 648.5L613.2 650.6L614.8 652.6L617.3 654.1L620.4 655.1L623.9 655.4L627.3 655L630.4 654.1L632.9 652.5L634.5 650.6L635 648.5Z" fill="#e8a74e"/><path d="M635 649.8L634.5 651.9L632.9 653.8L630.4 655.3L627.3 656.3L623.9 656.7L620.4 656.3L617.3 655.3L614.8 653.8L613.2 651.9L612.7 649.8L612.5 626.2L613 628.3L614.6 630.1L617.1 631.7L620.3 632.6L623.8 633L627.3 632.6L630.5 631.6L633 630.1L634.6 628.2L635.1 626.1Z" fill="#b29540"/><path d="M635.1 627.4L634.6 629.5L633 631.4L630.5 632.9L627.3 633.9L623.8 634.3L620.3 633.9L617.1 633L614.6 631.4L613 629.6L612.5 627.5L612.3 603.4L612.8 605.5L614.4 607.4L617 608.9L620.2 609.8L623.8 610.2L627.3 609.8L630.6 608.9L633.1 607.4L634.7 605.5L635.3 603.4Z" fill="#c4c562"/><path d="M635.3 604.7L634.7 606.8L633.1 608.7L630.6 610.2L627.3 611.2L623.8 611.5L620.2 611.2L617 610.2L614.4 608.7L612.8 606.9L612.3 604.8L612 581.7L612.6 583.8L614.2 585.6L616.8 587.1L620.1 588L623.7 588.4L627.4 588L630.6 587.1L633.2 585.6L634.8 583.7L635.4 581.7Z" fill="#798948"/><path d="M635.4 583L634.8 585.1L633.2 587L630.6 588.5L627.4 589.4L623.7 589.8L620.1 589.4L616.8 588.5L614.3 587L612.6 585.1L612.1 583.1L611.8 558.6L612.4 560.6L614.1 562.4L616.7 563.9L620 564.8L623.7 565.2L627.4 564.8L630.7 563.9L633.3 562.4L635 560.6L635.5 558.5Z" fill="#82bd5c"/><path d="M635.5 560L635 562L633.3 563.8L630.7 565.3L627.4 566.3L623.7 566.6L620 566.3L616.7 565.3L614.1 563.9L612.4 562L611.8 560L611.6 535.9L612.2 537.9L613.9 539.7L616.5 541.1L619.9 542.1L623.6 542.4L627.4 542L630.8 541.1L633.4 539.7L635.1 537.8L635.7 535.8Z" fill="#2ca638"/><path d="M635.7 537.3L635.1 539.3L633.4 541.1L630.8 542.6L627.4 543.5L623.6 543.8L619.9 543.5L616.5 542.6L613.9 541.2L612.2 539.3L611.6 537.3L611.4 518.8L612 520.8L613.7 522.6L616.4 524L619.8 524.9L623.6 525.2L627.4 524.9L630.8 524L633.5 522.5L635.2 520.7L635.8 518.8Z" fill="#54a77b"/><path d="M634.7 692.4L634.2 694.6L632.7 696.5L630.3 698.1L627.3 699.1L623.9 699.4L620.6 699.1L617.5 698.1L615.1 696.5L613.6 694.6L613.1 692.4L611.4 518.8L612 520.8L613.7 522.6L616.4 524L619.8 524.9L623.6 525.2L627.4 524.9L630.8 524L633.5 522.5L635.2 520.7L635.8 518.8Z" fill="url(#sh)"/><path d="M632.2 523.3L629.7 524.3L626.8 525L623.6 525.2L620.4 525L617.5 524.4L614.9 523.3L613 522L611.8 520.4L611.4 518.8L611.9 517.1L613.1 515.6L615.1 514.3L617.6 513.3L620.5 512.6L623.6 512.4L626.7 512.6L629.7 513.3L632.2 514.3L634.1 515.6L635.3 517.1L635.8 518.8L635.4 520.4L634.2 522Z" fill="#5fc288"/>
<path d="M719.7 697.2L719 699.3L717.4 701.2L714.9 702.6L711.8 703.4L708.4 703.6L705 703L702 701.8L699.7 700.1L698.3 698.1L697.9 695.9L699.2 671.7L699.6 673.8L701 675.9L703.4 677.6L706.4 678.7L709.8 679.3L713.3 679.1L716.4 678.3L719 676.9L720.7 675.1L721.3 673Z" fill="#dd5850"/><path d="M721.2 674.2L720.6 676.3L718.9 678.1L716.4 679.5L713.2 680.4L709.8 680.5L706.3 680L703.3 678.8L701 677.1L699.5 675.1L699.1 672.9L700.3 650.4L700.7 652.5L702.1 654.5L704.5 656.2L707.6 657.4L711.1 657.9L714.6 657.8L717.8 656.9L720.4 655.6L722.1 653.7L722.7 651.6Z" fill="#e8a74e"/><path d="M722.7 652.9L722 655L720.3 656.8L717.7 658.2L714.5 659L711 659.2L707.5 658.6L704.5 657.5L702.1 655.8L700.6 653.8L700.2 651.6L701.5 627.1L701.9 629.3L703.4 631.2L705.8 632.9L708.9 634.1L712.5 634.6L716 634.4L719.3 633.6L721.9 632.3L723.6 630.5L724.3 628.4Z" fill="#b29540"/><path d="M724.2 629.7L723.5 631.8L721.8 633.6L719.2 635L716 635.8L712.4 635.9L708.9 635.4L705.7 634.2L703.3 632.6L701.8 630.6L701.4 628.4L702.7 603.5L703.1 605.6L704.6 607.6L707.1 609.2L710.3 610.4L713.9 610.9L717.5 610.7L720.8 610L723.5 608.6L725.2 606.8L725.9 604.7Z" fill="#c4c562"/><path d="M725.8 606.1L725.1 608.1L723.4 609.9L720.7 611.3L717.4 612.1L713.8 612.2L710.2 611.7L707 610.6L704.5 608.9L703 607L702.6 604.8L703.8 580.9L704.3 582.9L705.8 584.9L708.3 586.5L711.6 587.6L715.2 588.2L718.9 588L722.3 587.2L725 585.9L726.7 584.1L727.4 582.1Z" fill="#798948"/><path d="M727.3 583.5L726.6 585.5L724.9 587.3L722.2 588.6L718.8 589.4L715.1 589.6L711.5 589L708.3 587.9L705.7 586.3L704.2 584.3L703.8 582.3L705.1 556.7L705.5 558.8L707.1 560.7L709.7 562.3L712.9 563.4L716.6 563.9L720.4 563.8L723.8 563L726.5 561.7L728.3 559.9L729 557.9Z" fill="#82bd5c"/><path d="M728.9 559.3L728.2 561.4L726.4 563.1L723.7 564.4L720.3 565.2L716.6 565.4L712.9 564.8L709.6 563.7L707 562.1L705.5 560.2L705 558.1L706.5 529.7L706.9 531.7L708.5 533.6L711.1 535.2L714.5 536.3L718.3 536.8L722.1 536.7L725.5 535.9L728.3 534.6L730.1 532.8L730.8 530.9Z" fill="#2ca638"/><path d="M730.7 532.4L730 534.3L728.2 536.1L725.4 537.4L722 538.1L718.2 538.3L714.4 537.8L711 536.7L708.4 535.1L706.8 533.2L706.4 531.2L707.1 518.3L707.5 520.3L709.1 522.2L711.8 523.7L715.1 524.8L718.9 525.3L722.8 525.2L726.3 524.4L729.1 523.1L730.9 521.4L731.6 519.4Z" fill="#54a77b"/><path d="M719.7 697.2L719 699.3L717.4 701.2L714.9 702.6L711.8 703.4L708.4 703.6L705 703L702 701.8L699.7 700.1L698.3 698.1L697.9 695.9L707.1 518.3L707.5 520.3L709.1 522.2L711.8 523.7L715.1 524.8L718.9 525.3L722.8 525.2L726.3 524.4L729.1 523.1L730.9 521.4L731.6 519.4Z" fill="url(#sh)"/><path d="M728.6 523.4L726.1 524.5L723.2 525.1L720.1 525.3L716.9 525.1L713.8 524.5L711.1 523.4L709 522.1L707.7 520.5L707.1 518.9L707.3 517.2L708.4 515.6L710.2 514.3L712.6 513.3L715.4 512.7L718.6 512.5L721.7 512.7L724.7 513.3L727.4 514.3L729.5 515.6L730.9 517.2L731.6 518.8L731.4 520.5L730.3 522.1Z" fill="#5fc288"/>
<path d="M572.4 702.5L572 704.7L570.5 706.7L568.2 708.4L565.2 709.6L561.8 710.1L558.4 709.9L555.3 709L552.8 707.6L551.1 705.7L550.5 703.5L548.9 674.5L549.6 676.6L551.2 678.5L553.8 680L556.9 680.8L560.4 681L563.9 680.5L567 679.4L569.4 677.7L570.8 675.7L571.3 673.5Z" fill="#dd5850"/><path d="M571.3 674.7L570.9 676.9L569.4 678.9L567 680.6L563.9 681.8L560.5 682.3L557 682.1L553.8 681.2L551.3 679.8L549.6 677.9L549 675.7L548 657L548.6 659.2L550.3 661.1L552.9 662.5L556.1 663.4L559.6 663.5L563.1 663L566.2 661.9L568.7 660.2L570.2 658.2L570.6 656Z" fill="#e8a74e"/><path d="M570.6 657.3L570.2 659.5L568.7 661.5L566.3 663.2L563.2 664.3L559.7 664.8L556.1 664.6L552.9 663.8L550.4 662.3L548.7 660.4L548 658.3L546.8 636L547.5 638.1L549.2 640L551.8 641.4L555 642.3L558.6 642.4L562.2 641.9L565.3 640.8L567.8 639.1L569.3 637.1L569.8 635Z" fill="#b29540"/><path d="M569.8 636.3L569.4 638.4L567.9 640.5L565.4 642.1L562.2 643.2L558.7 643.7L555.1 643.6L551.8 642.7L549.2 641.3L547.5 639.4L546.9 637.3L545.6 613L546.2 615.1L547.9 617L550.6 618.4L553.9 619.2L557.5 619.4L561.2 618.9L564.4 617.8L566.9 616.2L568.4 614.2L568.9 612Z" fill="#c4c562"/><path d="M568.9 613.4L568.5 615.5L566.9 617.5L564.4 619.2L561.2 620.3L557.6 620.8L554 620.6L550.7 619.8L548 618.3L546.3 616.5L545.6 614.4L544.6 596L545.3 598.1L547 599.9L549.7 601.3L553.1 602.1L556.7 602.3L560.4 601.8L563.6 600.7L566.2 599.1L567.8 597.1L568.2 595Z" fill="#798948"/><path d="M568.3 596.4L567.8 598.5L566.2 600.5L563.7 602.1L560.5 603.2L556.8 603.7L553.1 603.5L549.8 602.7L547.1 601.3L545.4 599.5L544.7 597.4L543.4 574.5L544.1 576.6L545.9 578.4L548.6 579.8L552 580.6L555.7 580.8L559.4 580.3L562.7 579.2L565.3 577.6L566.9 575.6L567.4 573.5Z" fill="#82bd5c"/><path d="M567.4 574.9L567 577L565.4 579L562.8 580.6L559.5 581.7L555.8 582.2L552.1 582L548.7 581.2L546 579.8L544.2 578L543.5 575.9L542.1 550.5L542.8 552.6L544.6 554.4L547.4 555.7L550.8 556.5L554.6 556.7L558.4 556.2L561.7 555.2L564.3 553.6L566 551.6L566.4 549.6Z" fill="#2ca638"/><path d="M566.5 551L566 553.1L564.4 555L561.8 556.6L558.4 557.7L554.7 558.2L550.9 558L547.4 557.2L544.7 555.8L542.9 554L542.2 552L541.4 537.2L542.1 539.2L543.9 541L546.7 542.3L550.1 543.1L554 543.3L557.8 542.8L561.2 541.8L563.8 540.2L565.4 538.3L565.9 536.2Z" fill="#54a77b"/><path d="M572.4 702.5L572 704.7L570.5 706.7L568.2 708.4L565.2 709.6L561.8 710.1L558.4 709.9L555.3 709L552.8 707.6L551.1 705.7L550.5 703.5L541.4 537.2L542.1 539.2L543.9 541L546.7 542.3L550.1 543.1L554 543.3L557.8 542.8L561.2 541.8L563.8 540.2L565.4 538.3L565.9 536.2Z" fill="url(#sh)"/><path d="M562 541.4L559.3 542.4L556.3 543.1L553.1 543.3L549.9 543.1L547 542.4L544.5 541.4L542.7 540L541.7 538.4L541.4 536.7L542 535L543.4 533.4L545.5 532.1L548.1 531L551.1 530.4L554.2 530.2L557.4 530.4L560.2 531L562.7 532.1L564.5 533.4L565.6 535L565.9 536.7L565.4 538.4L564 540Z" fill="#5fc288"/>
<path d="M658 707.4L657.4 709.6L655.9 711.6L653.4 713.1L650.3 714.1L646.9 714.4L643.5 714L640.4 712.9L638 711.3L636.5 709.3L636 707.1L636.2 685.3L636.7 687.5L638.2 689.5L640.6 691.2L643.8 692.2L647.2 692.6L650.7 692.3L653.8 691.4L656.3 689.8L657.9 687.8L658.5 685.6Z" fill="#dd5850"/><path d="M658.4 686.9L657.9 689.1L656.3 691L653.8 692.6L650.7 693.6L647.2 693.9L643.7 693.5L640.6 692.4L638.2 690.8L636.7 688.8L636.2 686.5L636.3 666.4L636.8 668.6L638.4 670.6L640.8 672.2L644 673.2L647.5 673.6L651 673.3L654.2 672.4L656.7 670.8L658.3 668.9L658.9 666.7Z" fill="#e8a74e"/><path d="M658.9 668L658.3 670.1L656.7 672.1L654.2 673.6L651 674.6L647.5 674.9L644 674.5L640.8 673.4L638.3 671.8L636.8 669.8L636.3 667.6L636.4 645.8L636.9 647.9L638.5 649.9L641 651.5L644.2 652.6L647.8 653L651.4 652.7L654.6 651.7L657.2 650.2L658.8 648.2L659.4 646.1Z" fill="#b29540"/><path d="M659.3 647.4L658.8 649.5L657.1 651.5L654.6 653L651.4 654L647.8 654.3L644.2 653.9L641 652.8L638.5 651.2L636.9 649.2L636.4 647.1L636.6 624.9L637.1 627L638.7 629L641.3 630.6L644.5 631.6L648.1 632L651.7 631.7L655 630.8L657.6 629.3L659.3 627.3L659.9 625.2Z" fill="#c4c562"/><path d="M659.8 626.5L659.2 628.7L657.6 630.6L655 632.1L651.7 633.1L648.1 633.4L644.5 633L641.2 631.9L638.7 630.4L637.1 628.4L636.6 626.2L636.7 605L637.2 607.1L638.9 609.1L641.5 610.6L644.7 611.7L648.4 612.1L652.1 611.8L655.4 610.8L658 609.3L659.7 607.4L660.3 605.3Z" fill="#798948"/><path d="M660.3 606.7L659.7 608.8L658 610.7L655.4 612.2L652.1 613.2L648.4 613.4L644.7 613.1L641.4 612L638.9 610.4L637.2 608.5L636.7 606.4L636.9 583.8L637.4 585.9L639.1 587.8L641.7 589.4L645 590.4L648.7 590.8L652.5 590.5L655.8 589.6L658.5 588.1L660.2 586.2L660.8 584.1Z" fill="#82bd5c"/><path d="M660.8 585.5L660.2 587.6L658.5 589.5L655.8 591L652.4 591.9L648.7 592.2L645 591.8L641.7 590.8L639 589.2L637.4 587.3L636.9 585.2L637 560.2L637.6 562.2L639.2 564.2L641.9 565.7L645.3 566.7L649.1 567.1L652.9 566.8L656.3 565.9L659 564.4L660.7 562.5L661.3 560.5Z" fill="#2ca638"/><path d="M661.3 561.9L660.7 564L659 565.9L656.3 567.3L652.8 568.3L649.1 568.5L645.3 568.2L641.9 567.2L639.2 565.6L637.6 563.7L637 561.6L637.3 525.2L637.8 527.3L639.5 529.1L642.3 530.6L645.7 531.6L649.6 532L653.5 531.7L657 530.8L659.7 529.4L661.5 527.5L662.1 525.5Z" fill="#54a77b"/><path d="M658 707.4L657.4 709.6L655.9 711.6L653.4 713.1L650.3 714.1L646.9 714.4L643.5 714L640.4 712.9L638 711.3L636.5 709.3L636 707.1L637.3 525.2L637.8 527.3L639.5 529.1L642.3 530.6L645.7 531.6L649.6 532L653.5 531.7L657 530.8L659.7 529.4L661.5 527.5L662.1 525.5Z" fill="url(#sh)"/><path d="M658.7 530L656.1 531.1L653.1 531.8L649.9 532L646.7 531.8L643.6 531.1L641 530.1L639 528.7L637.7 527.1L637.3 525.4L637.7 523.7L638.9 522.1L640.8 520.7L643.4 519.7L646.3 519L649.5 518.8L652.7 519L655.7 519.7L658.3 520.7L660.3 522.1L661.6 523.6L662.1 525.4L661.8 527.1L660.6 528.7Z" fill="#5fc288"/>
<path d="M744.3 712.3L743.6 714.5L741.9 716.4L739.4 717.8L736.2 718.6L732.7 718.7L729.3 718.1L726.3 716.8L724 715L722.6 712.9L722.3 710.6L724 686L724.3 688.2L725.7 690.3L728.1 692.1L731.2 693.4L734.6 694L738.2 693.9L741.4 693.1L744 691.7L745.7 689.9L746.4 687.7Z" fill="#dd5850"/><path d="M746.3 688.9L745.6 691.1L743.9 693L741.3 694.4L738.1 695.1L734.5 695.2L731.1 694.6L728 693.3L725.7 691.6L724.2 689.5L723.9 687.2L725.5 664.3L725.8 666.5L727.3 668.6L729.7 670.4L732.8 671.6L736.3 672.3L739.9 672.2L743.2 671.4L745.8 670L747.6 668.1L748.3 666Z" fill="#e8a74e"/><path d="M748.2 667.3L747.5 669.4L745.7 671.3L743.1 672.7L739.8 673.4L736.2 673.5L732.7 672.9L729.6 671.7L727.2 669.9L725.7 667.8L725.4 665.6L727.1 640.6L727.5 642.8L729 644.9L731.4 646.6L734.6 647.9L738.2 648.5L741.8 648.4L745.1 647.6L747.8 646.3L749.6 644.4L750.3 642.3Z" fill="#b29540"/><path d="M750.2 643.6L749.5 645.7L747.7 647.6L745 649L741.7 649.7L738.1 649.8L734.5 649.2L731.3 648L728.9 646.2L727.4 644.1L727 641.9L728.8 616.5L729.2 618.7L730.7 620.7L733.2 622.5L736.4 623.7L740 624.3L743.7 624.2L747.1 623.5L749.9 622.1L751.7 620.3L752.4 618.2Z" fill="#c4c562"/><path d="M752.3 619.5L751.6 621.6L749.8 623.5L747 624.8L743.6 625.6L739.9 625.7L736.3 625.1L733.1 623.8L730.6 622.1L729.1 620L728.7 617.9L730.4 593.4L730.8 595.6L732.3 597.6L734.9 599.3L738.1 600.5L741.8 601.1L745.6 601L749 600.3L751.8 598.9L753.7 597.1L754.4 595.1Z" fill="#798948"/><path d="M754.3 596.5L753.5 598.5L751.7 600.4L748.9 601.7L745.5 602.5L741.7 602.5L738 601.9L734.8 600.7L732.2 599L730.7 597L730.3 594.8L732.1 568.7L732.5 570.9L734.1 572.9L736.7 574.6L740 575.8L743.8 576.4L747.6 576.3L751.1 575.5L753.9 574.2L755.8 572.4L756.5 570.4Z" fill="#82bd5c"/><path d="M756.4 571.8L755.6 573.9L753.8 575.7L751 577L747.5 577.7L743.6 577.8L739.9 577.2L736.5 576L734 574.3L732.4 572.3L732 570.2L733.8 545L734.2 547.1L735.8 549.1L738.4 550.8L741.8 552L745.6 552.6L749.5 552.5L753 551.7L755.9 550.4L757.8 548.7L758.5 546.6Z" fill="#2ca638"/><path d="M758.4 548.1L757.7 550.2L755.8 551.9L752.9 553.2L749.4 554L745.5 554.1L741.7 553.5L738.3 552.3L735.7 550.6L734.1 548.6L733.7 546.5L735.2 524.6L735.6 526.7L737.2 528.7L739.9 530.3L743.3 531.5L747.2 532.1L751.1 532L754.7 531.3L757.6 530L759.5 528.2L760.3 526.2Z" fill="#54a77b"/><path d="M744.3 712.3L743.6 714.5L741.9 716.4L739.4 717.8L736.2 718.6L732.7 718.7L729.3 718.1L726.3 716.8L724 715L722.6 712.9L722.3 710.6L735.2 524.6L735.6 526.7L737.2 528.7L739.9 530.3L743.3 531.5L747.2 532.1L751.1 532L754.7 531.3L757.6 530L759.5 528.2L760.3 526.2Z" fill="url(#sh)"/><path d="M757.3 530.1L754.9 531.2L752 531.9L748.7 532.1L745.4 531.9L742.3 531.2L739.5 530.1L737.3 528.8L735.9 527.1L735.2 525.4L735.4 523.7L736.4 522.1L738.2 520.7L740.6 519.7L743.5 519L746.7 518.8L750 519L753.1 519.7L755.8 520.7L758 522.1L759.5 523.7L760.2 525.4L760.1 527.1L759.1 528.7Z" fill="#5fc288"/>
<path d="M508.7 712.7L508.4 715L507 717.2L504.7 719L501.7 720.3L498.3 721L494.8 721L491.6 720.2L489 718.9L487.3 717L486.6 714.8L484.3 692.4L485 694.6L486.8 696.5L489.4 697.8L492.7 698.5L496.2 698.6L499.7 697.9L502.7 696.6L505.1 694.8L506.5 692.6L506.8 690.4Z" fill="#dd5850"/><path d="M506.9 691.6L506.6 693.8L505.2 696L502.8 697.8L499.8 699.1L496.3 699.8L492.8 699.8L489.5 699L486.9 697.7L485.1 695.8L484.4 693.7L482.3 672.9L483 675L484.8 676.8L487.5 678.2L490.8 678.9L494.4 678.9L497.9 678.3L501 677L503.4 675.2L504.8 673L505.1 670.8Z" fill="#e8a74e"/><path d="M505.2 672.1L504.9 674.3L503.5 676.4L501.1 678.2L498 679.5L494.5 680.2L490.9 680.2L487.6 679.5L484.9 678.1L483.2 676.3L482.4 674.1L480.1 651.6L480.9 653.7L482.7 655.5L485.4 656.8L488.7 657.6L492.4 657.6L495.9 656.9L499.1 655.6L501.5 653.8L502.9 651.7L503.3 649.5Z" fill="#b29540"/><path d="M503.4 650.8L503.1 653L501.6 655.1L499.2 656.9L496.1 658.2L492.5 658.9L488.9 658.9L485.5 658.1L482.8 656.8L481 655L480.2 652.9L477.9 629.9L478.7 632L480.5 633.8L483.3 635.2L486.6 635.9L490.3 635.9L494 635.2L497.2 634L499.6 632.2L501.1 630.1L501.4 627.9Z" fill="#c4c562"/><path d="M501.6 629.2L501.2 631.4L499.7 633.5L497.3 635.3L494.1 636.6L490.5 637.3L486.8 637.2L483.4 636.5L480.6 635.2L478.8 633.4L478 631.3L475.8 609.3L476.6 611.3L478.4 613.1L481.2 614.5L484.7 615.2L488.4 615.2L492.1 614.5L495.3 613.3L497.8 611.5L499.3 609.4L499.7 607.2Z" fill="#798948"/><path d="M499.8 608.6L499.4 610.8L497.9 612.9L495.4 614.6L492.2 615.9L488.5 616.6L484.8 616.6L481.4 615.8L478.6 614.5L476.7 612.7L475.9 610.6L473.6 587.3L474.3 589.3L476.2 591.1L479 592.4L482.5 593.1L486.3 593.1L490.1 592.5L493.4 591.2L495.9 589.5L497.4 587.4L497.8 585.3Z" fill="#82bd5c"/><path d="M497.9 586.7L497.5 588.8L496 590.9L493.5 592.6L490.2 593.9L486.5 594.6L482.7 594.5L479.2 593.8L476.4 592.5L474.5 590.7L473.7 588.7L471.1 562.7L471.8 564.8L473.7 566.5L476.6 567.8L480.2 568.5L484 568.5L487.8 567.9L491.2 566.6L493.8 564.9L495.3 562.9L495.7 560.7Z" fill="#2ca638"/><path d="M495.8 562.2L495.4 564.3L493.9 566.4L491.3 568.1L488 569.3L484.2 570L480.3 570L476.8 569.3L473.9 568L472 566.2L471.2 564.2L468.2 534.8L469 536.9L470.9 538.6L473.9 539.8L477.5 540.5L481.4 540.6L485.3 539.9L488.7 538.7L491.3 537L492.9 535L493.3 532.9Z" fill="#54a77b"/><path d="M508.7 712.7L508.4 715L507 717.2L504.7 719L501.7 720.3L498.3 721L494.8 721L491.6 720.2L489 718.9L487.3 717L486.6 714.8L468.2 534.8L469 536.9L470.9 538.6L473.9 539.8L477.5 540.5L481.4 540.6L485.3 539.9L488.7 538.7L491.3 537L492.9 535L493.3 532.9Z" fill="url(#sh)"/><path d="M488.8 538.6L486 539.7L482.9 540.4L479.6 540.6L476.4 540.4L473.4 539.7L471 538.6L469.3 537.2L468.4 535.6L468.3 533.9L469 532.1L470.6 530.5L472.8 529.2L475.6 528.1L478.7 527.4L482 527.2L485.1 527.4L488 528.1L490.4 529.2L492.2 530.5L493.1 532.1L493.3 533.9L492.6 535.6L491 537.2Z" fill="#5fc288"/>
<path d="M594.9 717.8L594.5 720L593 722.1L590.6 723.8L587.5 725L584.1 725.5L580.6 725.2L577.5 724.3L574.9 722.7L573.3 720.7L572.7 718.5L571.7 692.3L572.3 694.5L574 696.5L576.5 698L579.7 699L583.2 699.2L586.8 698.7L589.9 697.6L592.3 695.9L593.9 693.8L594.3 691.6Z" fill="#dd5850"/><path d="M594.4 692.8L593.9 695.1L592.4 697.1L589.9 698.8L586.8 700L583.3 700.4L579.8 700.2L576.6 699.3L574 697.7L572.4 695.7L571.8 693.5L570.8 669.1L571.4 671.3L573.1 673.2L575.7 674.8L578.9 675.7L582.5 676L586.1 675.5L589.3 674.4L591.8 672.7L593.3 670.6L593.8 668.4Z" fill="#e8a74e"/><path d="M593.8 669.7L593.4 671.9L591.8 674L589.3 675.6L586.1 676.8L582.6 677.2L579 677L575.7 676.1L573.1 674.5L571.4 672.6L570.8 670.4L569.8 643.7L570.4 645.9L572.1 647.8L574.8 649.3L578.1 650.3L581.7 650.5L585.4 650.1L588.6 648.9L591.2 647.3L592.7 645.2L593.2 643Z" fill="#b29540"/><path d="M593.2 644.3L592.8 646.6L591.2 648.6L588.6 650.3L585.4 651.4L581.8 651.8L578.1 651.6L574.8 650.7L572.2 649.2L570.5 647.2L569.9 645L568.8 617.8L569.4 620L571.1 621.9L573.8 623.4L577.2 624.3L580.9 624.6L584.6 624.1L587.9 623L590.5 621.3L592.1 619.3L592.6 617.1Z" fill="#c4c562"/><path d="M592.6 618.5L592.2 620.7L590.5 622.7L588 624.4L584.7 625.5L581 625.9L577.2 625.7L573.9 624.8L571.2 623.3L569.5 621.4L568.8 619.2L568.1 600L568.7 602.2L570.5 604.1L573.2 605.6L576.6 606.5L580.4 606.7L584.1 606.3L587.5 605.2L590.1 603.5L591.7 601.5L592.2 599.3Z" fill="#798948"/><path d="M592.2 600.7L591.7 602.9L590.1 604.9L587.5 606.6L584.2 607.7L580.4 608.1L576.6 607.9L573.2 607L570.5 605.5L568.8 603.6L568.1 601.4L566.8 568.4L567.5 570.5L569.3 572.4L572 573.9L575.5 574.8L579.4 575L583.2 574.6L586.6 573.5L589.3 571.9L591 569.9L591.5 567.8Z" fill="#82bd5c"/><path d="M591.5 569.2L591 571.4L589.3 573.3L586.7 575L583.2 576L579.4 576.5L575.6 576.3L572.1 575.4L569.3 573.9L567.5 572L566.9 569.9L566.3 553.6L566.9 555.7L568.7 557.6L571.5 559L575 559.9L578.9 560.2L582.8 559.7L586.2 558.6L588.9 557L590.6 555.1L591.1 553Z" fill="#2ca638"/><path d="M591.2 554.5L590.7 556.6L589 558.5L586.3 560.1L582.8 561.2L579 561.7L575.1 561.4L571.6 560.5L568.8 559.1L567 557.2L566.3 555.1L565.5 533.2L566.1 535.3L567.9 537.2L570.8 538.6L574.3 539.5L578.3 539.7L582.2 539.3L585.7 538.2L588.4 536.6L590.1 534.7L590.7 532.6Z" fill="#54a77b"/><path d="M594.9 717.8L594.5 720L593 722.1L590.6 723.8L587.5 725L584.1 725.5L580.6 725.2L577.5 724.3L574.9 722.7L573.3 720.7L572.7 718.5L565.5 533.2L566.1 535.3L567.9 537.2L570.8 538.6L574.3 539.5L578.3 539.7L582.2 539.3L585.7 538.2L588.4 536.6L590.1 534.7L590.7 532.6Z" fill="url(#sh)"/><path d="M586.8 537.7L584.1 538.8L581 539.5L577.7 539.7L574.4 539.5L571.4 538.8L568.8 537.7L566.9 536.3L565.8 534.7L565.5 532.9L566 531.2L567.4 529.6L569.5 528.2L572.2 527.1L575.2 526.4L578.5 526.2L581.7 526.4L584.7 527.1L587.2 528.2L589.1 529.5L590.3 531.2L590.7 532.9L590.2 534.7L588.8 536.3Z" fill="#5fc288"/>
<path d="M681.9 722.8L681.4 725.1L679.7 727.1L677.2 728.7L674 729.6L670.5 729.9L667.1 729.4L664 728.2L661.6 726.5L660.1 724.4L659.6 722.1L660.3 696.4L660.7 698.7L662.3 700.8L664.7 702.5L667.9 703.7L671.4 704.2L674.9 703.9L678.1 703L680.7 701.4L682.4 699.4L683 697.2Z" fill="#dd5850"/><path d="M682.9 698.4L682.3 700.7L680.7 702.7L678.1 704.2L674.9 705.2L671.3 705.4L667.8 704.9L664.7 703.8L662.2 702.1L660.7 699.9L660.2 697.7L660.8 675.3L661.2 677.6L662.8 679.7L665.3 681.4L668.5 682.5L672.1 683L675.7 682.8L678.9 681.8L681.5 680.3L683.2 678.3L683.8 676.1Z" fill="#e8a74e"/><path d="M683.8 677.4L683.2 679.6L681.5 681.6L678.9 683.1L675.6 684.1L672 684.3L668.5 683.8L665.3 682.7L662.8 681L661.2 678.9L660.7 676.6L661.2 657.4L661.7 659.7L663.3 661.8L665.8 663.4L669 664.6L672.7 665.1L676.3 664.8L679.6 663.9L682.2 662.3L684 660.4L684.6 658.2Z" fill="#b29540"/><path d="M684.5 659.5L683.9 661.7L682.2 663.7L679.6 665.2L676.3 666.1L672.6 666.4L669 665.9L665.8 664.8L663.2 663.1L661.7 661L661.2 658.7L661.7 637.5L662.2 639.7L663.8 641.7L666.3 643.4L669.6 644.5L673.3 645L677 644.8L680.4 643.8L683 642.3L684.8 640.4L685.4 638.2Z" fill="#c4c562"/><path d="M685.3 639.5L684.7 641.7L683 643.7L680.3 645.2L677 646.1L673.3 646.4L669.6 645.9L666.3 644.8L663.7 643.1L662.1 641L661.7 638.8L662.2 615.7L662.7 617.9L664.3 619.9L666.9 621.6L670.3 622.7L674 623.2L677.8 622.9L681.2 622L683.9 620.5L685.6 618.6L686.3 616.4Z" fill="#798948"/><path d="M686.2 617.8L685.6 620L683.8 621.9L681.1 623.4L677.7 624.3L674 624.6L670.2 624.1L666.9 623L664.3 621.3L662.7 619.3L662.2 617.1L662.7 595.7L663.2 597.9L664.9 599.9L667.5 601.6L670.9 602.7L674.7 603.2L678.5 602.9L681.9 602L684.7 600.5L686.4 598.6L687.1 596.4Z" fill="#82bd5c"/><path d="M687 597.9L686.4 600L684.6 602L681.9 603.4L678.4 604.4L674.6 604.6L670.8 604.1L667.5 603L664.8 601.4L663.2 599.4L662.7 597.2L663.3 573.4L663.8 575.6L665.4 577.6L668.1 579.2L671.5 580.3L675.4 580.8L679.2 580.6L682.7 579.7L685.5 578.2L687.3 576.3L688 574.1Z" fill="#2ca638"/><path d="M687.9 575.6L687.3 577.7L685.5 579.7L682.7 581.1L679.2 582L675.3 582.3L671.5 581.8L668.1 580.7L665.4 579.1L663.7 577.1L663.2 574.9L663.6 559.1L664.1 561.2L665.8 563.2L668.5 564.8L672 565.9L675.9 566.4L679.8 566.1L683.3 565.2L686.1 563.8L687.9 561.9L688.6 559.8Z" fill="#54a77b"/><path d="M681.9 722.8L681.4 725.1L679.7 727.1L677.2 728.7L674 729.6L670.5 729.9L667.1 729.4L664 728.2L661.6 726.5L660.1 724.4L659.6 722.1L663.6 559.1L664.1 561.2L665.8 563.2L668.5 564.8L672 565.9L675.9 566.4L679.8 566.1L683.3 565.2L686.1 563.8L687.9 561.9L688.6 559.8Z" fill="url(#sh)"/><path d="M685.3 564.3L682.7 565.4L679.7 566.1L676.5 566.4L673.2 566.1L670.2 565.4L667.5 564.3L665.4 562.9L664.1 561.2L663.6 559.4L663.9 557.6L665.1 556L667 554.6L669.5 553.5L672.5 552.8L675.7 552.6L678.9 552.8L681.9 553.5L684.6 554.6L686.6 556L688 557.6L688.6 559.4L688.3 561.2L687.1 562.9Z" fill="#5fc288"/>
<path d="M769.8 728L769 730.2L767.2 732.1L764.6 733.5L761.3 734.2L757.8 734.3L754.3 733.5L751.3 732.2L749 730.3L747.6 728.1L747.3 725.7L749.3 703.8L749.6 706.1L751 708.3L753.3 710.2L756.4 711.5L759.9 712.3L763.5 712.2L766.8 711.5L769.5 710.1L771.3 708.2L772.1 706Z" fill="#dd5850"/><path d="M771.9 707.2L771.2 709.5L769.4 711.4L766.7 712.7L763.4 713.5L759.8 713.5L756.3 712.8L753.2 711.4L750.9 709.5L749.5 707.3L749.2 705L751 684.7L751.3 687L752.7 689.2L755.1 691L758.2 692.4L761.8 693.1L765.4 693.1L768.8 692.3L771.5 690.9L773.3 689.1L774.1 686.9Z" fill="#e8a74e"/><path d="M773.9 688.1L773.2 690.3L771.4 692.2L768.6 693.6L765.3 694.3L761.7 694.3L758.1 693.6L755 692.3L752.6 690.4L751.2 688.2L750.8 685.9L752.8 663.9L753.1 666.1L754.6 668.3L757 670.2L760.2 671.5L763.8 672.2L767.5 672.2L770.9 671.5L773.7 670.1L775.5 668.2L776.3 666Z" fill="#b29540"/><path d="M776.1 667.3L775.4 669.5L773.5 671.4L770.8 672.8L767.4 673.5L763.7 673.5L760.1 672.8L756.9 671.5L754.5 669.6L753 667.4L752.7 665.2L754.7 642.8L755 645L756.5 647.2L759 649L762.2 650.4L765.9 651L769.6 651L773.1 650.3L775.8 648.9L777.7 647.1L778.5 644.9Z" fill="#c4c562"/><path d="M778.4 646.3L777.6 648.4L775.7 650.3L772.9 651.7L769.5 652.4L765.7 652.4L762.1 651.7L758.8 650.4L756.4 648.5L754.9 646.4L754.6 644.1L756.5 622.6L756.8 624.8L758.3 627L760.8 628.8L764.1 630.1L767.8 630.8L771.6 630.8L775.1 630.1L777.9 628.7L779.8 626.9L780.6 624.7Z" fill="#798948"/><path d="M780.5 626.1L779.7 628.3L777.8 630.1L775 631.5L771.5 632.2L767.7 632.2L764 631.5L760.7 630.2L758.2 628.4L756.7 626.2L756.3 624L758.4 601.1L758.7 603.3L760.3 605.5L762.8 607.3L766.1 608.6L769.9 609.3L773.8 609.3L777.3 608.5L780.2 607.2L782.1 605.4L782.9 603.2Z" fill="#82bd5c"/><path d="M782.7 604.7L781.9 606.8L780 608.6L777.2 610L773.6 610.7L769.8 610.7L766 610L762.7 608.7L760.1 606.9L758.6 604.8L758.2 602.5L760.5 577.2L760.9 579.4L762.4 581.5L765 583.3L768.4 584.6L772.2 585.2L776.2 585.2L779.8 584.5L782.7 583.2L784.6 581.4L785.4 579.3Z" fill="#2ca638"/><path d="M785.3 580.8L784.5 582.9L782.5 584.7L779.6 586L776 586.7L772.1 586.7L768.3 586L764.9 584.7L762.3 583L760.7 580.9L760.4 578.7L762.7 552.7L763 554.8L764.6 556.9L767.3 558.7L770.7 559.9L774.6 560.6L778.6 560.6L782.3 559.9L785.2 558.6L787.2 556.8L788 554.7Z" fill="#54a77b"/><path d="M769.8 728L769 730.2L767.2 732.1L764.6 733.5L761.3 734.2L757.8 734.3L754.3 733.5L751.3 732.2L749 730.3L747.6 728.1L747.3 725.7L762.7 552.7L763 554.8L764.6 556.9L767.3 558.7L770.7 559.9L774.6 560.6L778.6 560.6L782.3 559.9L785.2 558.6L787.2 556.8L788 554.7Z" fill="url(#sh)"/><path d="M785.2 558.6L782.8 559.7L779.8 560.5L776.6 560.7L773.2 560.5L770 559.8L767.2 558.6L765 557.2L763.4 555.5L762.7 553.7L762.8 551.9L763.8 550.3L765.6 548.8L768 547.7L770.9 547.1L774.1 546.8L777.4 547.1L780.5 547.7L783.3 548.8L785.6 550.2L787.2 551.9L787.9 553.7L787.9 555.5L786.9 557.2Z" fill="#5fc288"/>
<path d="M530.5 728.3L530.1 730.7L528.7 732.9L526.4 734.7L523.3 736.1L519.9 736.7L516.3 736.6L513.1 735.8L510.5 734.4L508.7 732.4L508 730.2L506 706.7L506.7 708.9L508.5 710.8L511.1 712.3L514.4 713.1L518 713.2L521.5 712.5L524.6 711.2L527 709.3L528.5 707.2L528.8 704.8Z" fill="#dd5850"/><path d="M528.9 706.1L528.6 708.4L527.1 710.6L524.7 712.4L521.6 713.8L518.1 714.4L514.5 714.3L511.2 713.5L508.6 712.1L506.8 710.1L506.1 707.9L504.3 687.6L505 689.9L506.8 691.8L509.5 693.2L512.9 694L516.5 694.1L520.1 693.5L523.2 692.2L525.7 690.3L527.1 688.1L527.5 685.8Z" fill="#e8a74e"/><path d="M527.6 687.1L527.2 689.4L525.8 691.6L523.3 693.4L520.2 694.7L516.6 695.4L513 695.3L509.6 694.5L506.9 693.1L505.1 691.1L504.4 688.9L502.5 666.3L503.2 668.6L505 670.5L507.7 671.9L511.1 672.7L514.8 672.8L518.4 672.1L521.7 670.8L524.1 669L525.6 666.8L526 664.6Z" fill="#b29540"/><path d="M526.1 665.9L525.7 668.2L524.2 670.3L521.8 672.1L518.5 673.4L514.9 674.1L511.2 674L507.8 673.2L505.1 671.8L503.3 669.9L502.6 667.7L501.2 652.2L502 654.4L503.8 656.3L506.5 657.7L510 658.5L513.7 658.6L517.4 657.9L520.6 656.7L523.1 654.8L524.6 652.7L525 650.4Z" fill="#c4c562"/><path d="M525.1 651.7L524.7 654L523.2 656.2L520.7 658L517.5 659.3L513.8 659.9L510.1 659.8L506.7 659.1L503.9 657.6L502.1 655.7L501.3 653.5L499 626.3L499.7 628.5L501.6 630.4L504.4 631.8L507.8 632.6L511.6 632.6L515.4 632L518.7 630.7L521.2 628.9L522.8 626.8L523.2 624.5Z" fill="#798948"/><path d="M523.3 625.9L522.9 628.2L521.3 630.3L518.8 632.1L515.5 633.4L511.8 634L508 634L504.5 633.2L501.7 631.8L499.8 629.9L499.1 627.7L497.1 604.9L497.8 607L499.7 608.9L502.6 610.3L506.1 611.1L510 611.2L513.7 610.5L517.1 609.3L519.7 607.5L521.3 605.4L521.7 603.1Z" fill="#82bd5c"/><path d="M521.8 604.6L521.4 606.8L519.8 608.9L517.2 610.7L513.9 612L510.1 612.6L506.2 612.5L502.7 611.7L499.9 610.3L498 608.5L497.2 606.3L495.2 583.5L496 585.7L497.9 587.5L500.8 588.9L504.4 589.7L508.3 589.7L512.1 589.1L515.5 587.9L518.1 586.1L519.7 584L520.2 581.8Z" fill="#2ca638"/><path d="M520.3 583.3L519.8 585.5L518.3 587.6L515.6 589.3L512.2 590.6L508.4 591.2L504.5 591.1L500.9 590.4L498 589L496.1 587.1L495.4 585L492.6 553.7L493.4 555.8L495.3 557.6L498.3 558.9L501.9 559.7L505.9 559.8L509.8 559.2L513.3 557.9L516 556.2L517.6 554.1L518 552Z" fill="#54a77b"/><path d="M530.5 728.3L530.1 730.7L528.7 732.9L526.4 734.7L523.3 736.1L519.9 736.7L516.3 736.6L513.1 735.8L510.5 734.4L508.7 732.4L508 730.2L492.6 553.7L493.4 555.8L495.3 557.6L498.3 558.9L501.9 559.7L505.9 559.8L509.8 559.2L513.3 557.9L516 556.2L517.6 554.1L518 552Z" fill="url(#sh)"/><path d="M513.7 557.7L510.9 558.9L507.7 559.6L504.3 559.8L501.1 559.6L498.1 558.9L495.6 557.8L493.8 556.3L492.8 554.6L492.7 552.8L493.4 551L494.9 549.3L497.1 547.9L499.9 546.8L503.1 546.1L506.3 545.9L509.6 546.1L512.5 546.8L515 547.9L516.8 549.3L517.8 551L518 552.8L517.4 554.6L515.9 556.3Z" fill="#5fc288"/>
<path d="M618.2 733.5L617.7 735.9L616.1 738L613.7 739.7L610.5 740.9L607 741.3L603.5 741L600.3 739.9L597.8 738.3L596.2 736.2L595.6 733.9L595.1 709.4L595.6 711.7L597.3 713.8L599.9 715.4L603.1 716.4L606.7 716.8L610.2 716.3L613.4 715.2L615.9 713.5L617.5 711.4L618 709.1Z" fill="#dd5850"/><path d="M618 710.3L617.5 712.6L615.9 714.7L613.4 716.5L610.2 717.6L606.7 718L603.1 717.7L599.9 716.7L597.3 715L595.7 712.9L595.1 710.6L594.6 687.8L595.2 690.1L596.8 692.2L599.4 693.8L602.7 694.9L606.3 695.2L610 694.7L613.2 693.6L615.8 691.9L617.4 689.8L617.9 687.5Z" fill="#e8a74e"/><path d="M617.9 688.8L617.4 691.1L615.8 693.2L613.2 694.9L610 696L606.4 696.5L602.7 696.1L599.5 695.1L596.9 693.5L595.2 691.4L594.6 689.1L594 664.3L594.6 666.6L596.3 668.6L599 670.3L602.3 671.3L606 671.6L609.7 671.2L613 670.1L615.6 668.4L617.2 666.3L617.8 664Z" fill="#b29540"/><path d="M617.8 665.3L617.2 667.6L615.6 669.7L613 671.4L609.7 672.5L606 672.9L602.3 672.6L599 671.6L596.4 670L594.7 667.9L594.1 665.6L593.5 640.4L594.1 642.6L595.8 644.7L598.5 646.3L601.9 647.3L605.7 647.6L609.4 647.2L612.8 646.1L615.4 644.4L617.1 642.3L617.6 640Z" fill="#c4c562"/><path d="M617.6 641.4L617.1 643.7L615.4 645.8L612.8 647.4L609.4 648.5L605.7 648.9L601.9 648.6L598.5 647.6L595.8 646L594.1 644L593.5 641.7L593 617.4L593.6 619.6L595.3 621.7L598.1 623.2L601.5 624.2L605.3 624.5L609.1 624.1L612.5 623L615.2 621.4L616.9 619.3L617.5 617.1Z" fill="#798948"/><path d="M617.5 618.5L616.9 620.7L615.2 622.8L612.6 624.5L609.1 625.5L605.3 626L601.5 625.6L598.1 624.7L595.4 623.1L593.6 621.1L593 618.8L592.5 596.7L593.1 598.9L594.9 600.9L597.7 602.4L601.2 603.4L605 603.7L608.9 603.3L612.3 602.2L615.1 600.6L616.8 598.6L617.3 596.3Z" fill="#82bd5c"/><path d="M617.3 597.8L616.8 600L615.1 602L612.4 603.7L608.9 604.8L605 605.2L601.2 604.9L597.7 603.9L594.9 602.3L593.1 600.3L592.5 598.1L592.1 578.9L592.7 581.1L594.5 583.1L597.3 584.6L600.8 585.6L604.8 585.9L608.7 585.5L612.2 584.4L614.9 582.8L616.7 580.8L617.2 578.6Z" fill="#2ca638"/><path d="M617.2 580.1L616.7 582.3L614.9 584.3L612.2 585.9L608.7 587L604.8 587.4L600.9 587.1L597.3 586.1L594.5 584.5L592.8 582.6L592.1 580.4L591.5 551.1L592.1 553.2L593.9 555.2L596.8 556.7L600.4 557.7L604.4 558L608.3 557.6L611.9 556.5L614.7 554.9L616.5 552.9L617.1 550.7Z" fill="#54a77b"/><path d="M618.2 733.5L617.7 735.9L616.1 738L613.7 739.7L610.5 740.9L607 741.3L603.5 741L600.3 739.9L597.8 738.3L596.2 736.2L595.6 733.9L591.5 551.1L592.1 553.2L593.9 555.2L596.8 556.7L600.4 557.7L604.4 558L608.3 557.6L611.9 556.5L614.7 554.9L616.5 552.9L617.1 550.7Z" fill="url(#sh)"/><path d="M613.2 555.9L610.6 557L607.4 557.7L604.1 558L600.8 557.7L597.7 557L595 555.9L593 554.4L591.8 552.7L591.5 550.9L592 549.1L593.3 547.4L595.4 546L598.1 544.9L601.2 544.2L604.4 544L607.7 544.2L610.8 544.9L613.4 546L615.4 547.4L616.6 549.1L617.1 550.9L616.6 552.7L615.3 554.4Z" fill="#5fc288"/>
<path d="M706.7 738.8L706 741.1L704.3 743.2L701.7 744.7L698.5 745.6L694.9 745.8L691.4 745.3L688.3 744L685.9 742.2L684.4 740L684 737.6L685 713.5L685.5 715.9L687 718.1L689.4 719.9L692.6 721.1L696.2 721.7L699.8 721.5L703.1 720.6L705.7 719.1L707.4 717L708.1 714.7Z" fill="#dd5850"/><path d="M708 716L707.4 718.3L705.6 720.3L703 721.8L699.7 722.8L696.1 723L692.5 722.4L689.4 721.1L686.9 719.3L685.4 717.1L685 714.8L685.9 692.4L686.4 694.7L687.9 696.9L690.4 698.7L693.6 699.9L697.3 700.5L700.9 700.3L704.3 699.4L706.9 697.8L708.7 695.8L709.4 693.5Z" fill="#e8a74e"/><path d="M709.3 694.8L708.6 697.1L706.9 699.1L704.2 700.7L700.8 701.6L697.2 701.8L693.6 701.2L690.3 700L687.8 698.2L686.3 696L685.9 693.6L686.9 669.3L687.4 671.6L688.9 673.7L691.5 675.5L694.7 676.8L698.4 677.3L702.2 677.1L705.5 676.2L708.3 674.7L710.1 672.7L710.7 670.4Z" fill="#b29540"/><path d="M710.6 671.8L710 674L708.2 676L705.5 677.6L702.1 678.5L698.4 678.7L694.7 678.1L691.4 676.9L688.9 675.1L687.3 672.9L686.9 670.6L687.9 645.8L688.4 648.1L690 650.2L692.5 652L695.9 653.2L699.6 653.8L703.4 653.6L706.9 652.7L709.6 651.2L711.4 649.2L712.1 646.9Z" fill="#c4c562"/><path d="M712 648.3L711.4 650.6L709.6 652.5L706.8 654.1L703.3 655L699.6 655.1L695.8 654.6L692.5 653.4L689.9 651.6L688.3 649.4L687.9 647.1L688.9 623.2L689.3 625.5L691 627.7L693.6 629.4L697 630.6L700.8 631.2L704.6 631L708.1 630.1L710.9 628.6L712.8 626.6L713.5 624.4Z" fill="#798948"/><path d="M713.4 625.8L712.7 628L710.9 630L708.1 631.5L704.6 632.4L700.7 632.6L696.9 632L693.5 630.8L690.9 629.1L689.3 626.9L688.8 624.7L689.9 599.2L690.4 601.4L692 603.5L694.7 605.3L698.1 606.5L702 607L705.9 606.8L709.5 606L712.3 604.5L714.2 602.5L714.9 600.3Z" fill="#82bd5c"/><path d="M714.8 601.8L714.1 604L712.2 605.9L709.4 607.4L705.8 608.3L701.9 608.5L698.1 607.9L694.6 606.7L692 605L690.3 602.9L689.8 600.6L691.2 569.6L691.6 571.8L693.3 573.9L696.1 575.6L699.6 576.8L703.5 577.3L707.5 577.1L711.1 576.3L714 574.8L715.9 572.9L716.7 570.7Z" fill="#2ca638"/><path d="M716.6 572.2L715.9 574.4L714 576.3L711.1 577.8L707.4 578.6L703.5 578.8L699.5 578.3L696 577.1L693.3 575.4L691.6 573.3L691.1 571.1L692.1 546.5L692.6 548.7L694.3 550.8L697.1 552.5L700.7 553.7L704.7 554.2L708.8 554L712.4 553.2L715.4 551.7L717.3 549.8L718 547.7Z" fill="#54a77b"/><path d="M706.7 738.8L706 741.1L704.3 743.2L701.7 744.7L698.5 745.6L694.9 745.8L691.4 745.3L688.3 744L685.9 742.2L684.4 740L684 737.6L692.1 546.5L692.6 548.7L694.3 550.8L697.1 552.5L700.7 553.7L704.7 554.2L708.8 554L712.4 553.2L715.4 551.7L717.3 549.8L718 547.7Z" fill="url(#sh)"/><path d="M714.7 552.1L712.2 553.2L709.1 554L705.8 554.2L702.4 554L699.2 553.3L696.4 552.1L694.2 550.6L692.7 548.9L692.1 547.1L692.4 545.3L693.6 543.6L695.5 542.2L698.1 541L701.1 540.4L704.4 540.1L707.7 540.3L710.9 541L713.7 542.1L715.9 543.6L717.4 545.3L718 547.1L717.8 548.9L716.7 550.6Z" fill="#5fc288"/>
<path d="M464.6 739.1L464.4 741.5L463.1 743.8L460.8 745.8L457.7 747.3L454.2 748.2L450.6 748.3L447.3 747.6L444.6 746.3L442.7 744.4L441.9 742.1L438.1 715L439 717.2L440.9 719.1L443.7 720.4L447.1 721.1L450.7 721L454.3 720.1L457.4 718.6L459.7 716.6L461.1 714.3L461.4 712Z" fill="#dd5850"/><path d="M461.5 713.2L461.3 715.6L459.9 717.9L457.6 719.9L454.4 721.4L450.9 722.2L447.2 722.3L443.8 721.7L441 720.3L439.1 718.4L438.3 716.2L434.8 690.8L435.7 693L437.6 694.9L440.4 696.2L443.9 696.9L447.6 696.8L451.2 695.9L454.4 694.5L456.8 692.5L458.2 690.2L458.5 687.9Z" fill="#e8a74e"/><path d="M458.6 689.2L458.4 691.5L457 693.8L454.6 695.8L451.4 697.2L447.8 698.1L444.1 698.2L440.6 697.5L437.8 696.2L435.8 694.3L435 692.1L431.2 664.3L432 666.5L434 668.4L436.9 669.7L440.4 670.3L444.2 670.2L447.9 669.4L451.1 668L453.6 666L455 663.7L455.3 661.4Z" fill="#b29540"/><path d="M455.5 662.8L455.2 665.1L453.8 667.3L451.3 669.3L448.1 670.8L444.4 671.6L440.6 671.7L437.1 671.1L434.2 669.7L432.2 667.9L431.4 665.7L427.5 637.3L428.3 639.5L430.3 641.3L433.3 642.6L436.8 643.2L440.7 643.1L444.5 642.3L447.8 640.9L450.3 638.9L451.8 636.7L452.1 634.4Z" fill="#c4c562"/><path d="M452.2 635.8L451.9 638.1L450.5 640.3L448 642.3L444.7 643.7L440.9 644.5L437 644.6L433.5 644L430.5 642.7L428.5 640.9L427.7 638.7L423.9 611.2L424.8 613.4L426.8 615.2L429.8 616.5L433.4 617.1L437.4 617L441.2 616.2L444.6 614.8L447.1 612.9L448.6 610.6L448.9 608.4Z" fill="#798948"/><path d="M449.1 609.8L448.8 612.1L447.3 614.3L444.8 616.2L441.4 617.7L437.5 618.5L433.6 618.6L430 617.9L427 616.6L425 614.8L424.1 612.7L421.5 593.5L422.3 595.6L424.4 597.4L427.4 598.7L431.1 599.3L435.1 599.2L439 598.4L442.4 597L445 595.1L446.5 592.9L446.8 590.6Z" fill="#82bd5c"/><path d="M447 592.1L446.7 594.3L445.2 596.5L442.6 598.4L439.2 599.9L435.3 600.7L431.3 600.8L427.6 600.1L424.6 598.9L422.5 597.1L421.7 594.9L417 560.8L417.9 562.9L420 564.7L423 566L426.8 566.6L430.9 566.5L434.9 565.7L438.3 564.3L441 562.4L442.6 560.3L442.9 558Z" fill="#2ca638"/><path d="M443.1 559.6L442.8 561.8L441.2 564L438.5 565.8L435 567.2L431.1 568L427 568.1L423.2 567.5L420.2 566.3L418.1 564.5L417.2 562.4L413.9 538.1L414.8 540.2L416.9 541.9L420 543.1L423.8 543.7L427.9 543.7L432 542.9L435.5 541.5L438.2 539.6L439.8 537.5L440.2 535.3Z" fill="#54a77b"/><path d="M464.6 739.1L464.4 741.5L463.1 743.8L460.8 745.8L457.7 747.3L454.2 748.2L450.6 748.3L447.3 747.6L444.6 746.3L442.7 744.4L441.9 742.1L413.9 538.1L414.8 540.2L416.9 541.9L420 543.1L423.8 543.7L427.9 543.7L432 542.9L435.5 541.5L438.2 539.6L439.8 537.5L440.2 535.3Z" fill="url(#sh)"/><path d="M435.1 541.7L432.1 542.8L428.8 543.5L425.3 543.8L422 543.5L419 542.8L416.5 541.7L414.8 540.2L414 538.5L414 536.7L414.9 534.9L416.6 533.2L419.1 531.8L422 530.7L425.3 530L428.7 529.7L432 530L435 530.6L437.4 531.8L439.2 533.2L440.1 534.9L440.1 536.7L439.2 538.5L437.5 540.2Z" fill="#5fc288"/>
<path d="M796 744.1L795.2 746.4L793.3 748.3L790.6 749.7L787.3 750.4L783.7 750.3L780.2 749.5L777.1 748L774.8 746L773.4 743.7L773.2 741.3L775.9 716.6L776.1 719L777.5 721.3L779.9 723.3L783 724.7L786.6 725.5L790.2 725.6L793.6 724.9L796.4 723.5L798.3 721.6L799.1 719.3Z" fill="#dd5850"/><path d="M798.9 720.6L798.1 722.9L796.2 724.8L793.5 726.1L790.1 726.8L786.4 726.8L782.9 726L779.7 724.5L777.4 722.5L776 720.2L775.7 717.9L777.6 701.1L777.8 703.4L779.2 705.7L781.6 707.7L784.8 709.1L788.4 709.9L792.1 710L795.5 709.3L798.3 707.9L800.2 706L801.1 703.8Z" fill="#e8a74e"/><path d="M800.9 705.1L800.1 707.3L798.2 709.2L795.4 710.6L792 711.3L788.3 711.2L784.6 710.4L781.5 709L779.1 707L777.7 704.7L777.4 702.3L779.9 679.2L780.2 681.5L781.7 683.8L784.1 685.8L787.3 687.2L791 688L794.7 688.1L798.2 687.4L801.1 686L803 684.1L803.8 681.9Z" fill="#b29540"/><path d="M803.6 683.2L802.8 685.4L800.9 687.3L798.1 688.7L794.6 689.4L790.8 689.3L787.2 688.5L783.9 687.1L781.5 685.1L780.1 682.9L779.8 680.5L781.4 666.2L781.6 668.5L783.1 670.8L785.6 672.7L788.8 674.2L792.5 674.9L796.3 675L799.8 674.3L802.7 673L804.6 671.1L805.5 668.9Z" fill="#c4c562"/><path d="M805.3 670.2L804.5 672.4L802.5 674.3L799.7 675.7L796.1 676.3L792.4 676.3L788.7 675.5L785.4 674L782.9 672.1L781.5 669.8L781.2 667.5L784.4 638.4L784.7 640.7L786.2 642.9L788.7 644.9L792 646.3L795.8 647.1L799.7 647.1L803.2 646.5L806.1 645.1L808.1 643.3L809 641.1Z" fill="#798948"/><path d="M808.8 642.5L807.9 644.7L806 646.5L803.1 647.9L799.5 648.5L795.6 648.5L791.8 647.7L788.5 646.3L786 644.3L784.5 642.1L784.2 639.8L786.8 615.9L787.1 618.2L788.7 620.4L791.2 622.3L794.6 623.7L798.4 624.5L802.4 624.5L806 623.9L809 622.5L811 620.7L811.8 618.5Z" fill="#82bd5c"/><path d="M811.6 619.9L810.8 622.1L808.8 624L805.8 625.3L802.2 626L798.3 625.9L794.4 625.1L791.1 623.7L788.5 621.8L787 619.6L786.7 617.3L789.4 592.5L789.7 594.8L791.2 597L793.9 598.9L797.3 600.3L801.2 601L805.2 601.1L808.9 600.4L811.9 599.1L813.9 597.3L814.8 595.1Z" fill="#2ca638"/><path d="M814.6 596.6L813.7 598.8L811.7 600.6L808.7 601.9L805 602.6L801 602.5L797.1 601.7L793.7 600.3L791.1 598.4L789.5 596.3L789.2 594L792.7 561.8L793.1 564.1L794.6 566.2L797.3 568.1L800.8 569.5L804.8 570.2L808.9 570.3L812.6 569.6L815.7 568.3L817.8 566.5L818.6 564.4Z" fill="#54a77b"/><path d="M796 744.1L795.2 746.4L793.3 748.3L790.6 749.7L787.3 750.4L783.7 750.3L780.2 749.5L777.1 748L774.8 746L773.4 743.7L773.2 741.3L792.7 561.8L793.1 564.1L794.6 566.2L797.3 568.1L800.8 569.5L804.8 570.2L808.9 570.3L812.6 569.6L815.7 568.3L817.8 566.5L818.6 564.4Z" fill="url(#sh)"/><path d="M815.9 568.2L813.5 569.4L810.5 570.1L807.2 570.3L803.8 570.1L800.5 569.4L797.6 568.2L795.2 566.7L793.6 565L792.8 563.1L792.8 561.3L793.8 559.6L795.5 558.1L797.9 557L800.9 556.3L804.1 556L807.5 556.2L810.7 557L813.6 558.1L816 559.5L817.7 561.3L818.5 563.1L818.5 565L817.6 566.7Z" fill="#5fc288"/>
<path d="M553 744.4L552.6 746.8L551.1 749.1L548.7 751L545.6 752.3L542.1 752.9L538.5 752.8L535.2 751.9L532.6 750.3L530.8 748.3L530.2 745.9L528.6 723.5L529.2 725.8L531 727.8L533.7 729.4L537 730.3L540.6 730.4L544.2 729.8L547.4 728.5L549.9 726.6L551.4 724.4L551.7 722Z" fill="#dd5850"/><path d="M551.8 723.2L551.4 725.6L549.9 727.9L547.5 729.7L544.3 731L540.7 731.7L537.1 731.5L533.8 730.6L531.1 729.1L529.3 727.1L528.6 724.7L527.1 703.8L527.8 706.2L529.6 708.2L532.3 709.7L535.7 710.6L539.4 710.7L543 710.1L546.3 708.8L548.8 707L550.3 704.7L550.7 702.3Z" fill="#e8a74e"/><path d="M550.7 703.6L550.3 706L548.8 708.2L546.3 710.1L543.1 711.4L539.5 712L535.8 711.9L532.4 711L529.7 709.5L527.9 707.4L527.2 705.1L525.6 682.5L526.3 684.8L528.1 686.8L530.9 688.3L534.3 689.2L538 689.3L541.7 688.7L545 687.4L547.6 685.5L549.1 683.3L549.5 681Z" fill="#b29540"/><path d="M549.6 682.3L549.2 684.6L547.6 686.9L545.1 688.7L541.8 690L538.1 690.6L534.4 690.5L531 689.6L528.2 688.1L526.4 686.1L525.7 683.8L524 660.7L524.8 663L526.6 665L529.4 666.5L532.9 667.4L536.7 667.5L540.4 666.9L543.7 665.6L546.3 663.8L547.9 661.6L548.3 659.2Z" fill="#c4c562"/><path d="M548.4 660.6L548 663L546.4 665.2L543.8 667L540.5 668.3L536.8 668.9L533 668.7L529.5 667.9L526.7 666.4L524.9 664.4L524.1 662.1L522.6 640L523.3 642.2L525.1 644.2L528 645.7L531.5 646.6L535.3 646.7L539.2 646.1L542.5 644.8L545.2 643L546.8 640.8L547.2 638.5Z" fill="#798948"/><path d="M547.3 639.9L546.8 642.2L545.2 644.4L542.6 646.2L539.2 647.5L535.4 648.1L531.6 648L528.1 647.1L525.2 645.6L523.4 643.6L522.7 641.4L521 617.8L521.7 620.1L523.6 622L526.5 623.5L530 624.4L533.9 624.5L537.8 623.9L541.3 622.7L543.9 620.9L545.5 618.7L546 616.4Z" fill="#82bd5c"/><path d="M546.1 617.8L545.6 620.1L544 622.3L541.3 624.1L537.9 625.4L534 626L530.1 625.8L526.6 625L523.7 623.5L521.8 621.5L521.1 619.3L519.2 593.1L519.9 595.3L521.8 597.3L524.8 598.7L528.4 599.6L532.4 599.7L536.3 599.1L539.8 597.9L542.5 596.1L544.2 594L544.6 591.7Z" fill="#2ca638"/><path d="M544.7 593.2L544.3 595.5L542.6 597.6L539.9 599.4L536.4 600.6L532.5 601.2L528.5 601.1L524.9 600.2L522 598.8L520 596.8L519.3 594.6L517.8 574.2L518.6 576.4L520.5 578.3L523.5 579.8L527.1 580.6L531.2 580.7L535.2 580.2L538.7 578.9L541.5 577.2L543.1 575L543.6 572.8Z" fill="#54a77b"/><path d="M553 744.4L552.6 746.8L551.1 749.1L548.7 751L545.6 752.3L542.1 752.9L538.5 752.8L535.2 751.9L532.6 750.3L530.8 748.3L530.2 745.9L517.8 574.2L518.6 576.4L520.5 578.3L523.5 579.8L527.1 580.6L531.2 580.7L535.2 580.2L538.7 578.9L541.5 577.2L543.1 575L543.6 572.8Z" fill="url(#sh)"/><path d="M539.3 578.6L536.5 579.8L533.3 580.5L529.9 580.8L526.6 580.5L523.5 579.8L521 578.6L519.1 577.1L518.1 575.4L517.9 573.5L518.5 571.6L520 569.9L522.3 568.4L525 567.3L528.2 566.6L531.5 566.3L534.8 566.6L537.8 567.3L540.3 568.4L542.2 569.9L543.3 571.6L543.6 573.5L543 575.4L541.5 577.1Z" fill="#5fc288"/>
<path d="M642.2 749.8L641.6 752.2L640 754.4L637.5 756.1L634.2 757.2L630.7 757.6L627.1 757.2L623.9 756.1L621.4 754.3L619.8 752.2L619.3 749.7L619.1 727.2L619.7 729.6L621.3 731.8L623.9 733.5L627.1 734.6L630.8 735L634.4 734.6L637.6 733.5L640.2 731.8L641.9 729.7L642.4 727.3Z" fill="#dd5850"/><path d="M642.4 728.5L641.9 730.9L640.2 733.1L637.6 734.8L634.4 735.9L630.7 736.3L627.1 735.9L623.9 734.7L621.3 733L619.7 730.8L619.1 728.4L619 707.5L619.6 709.9L621.2 712L623.8 713.7L627.1 714.9L630.8 715.3L634.5 714.9L637.8 713.8L640.4 712.1L642.1 709.9L642.7 707.5Z" fill="#e8a74e"/><path d="M642.6 708.8L642.1 711.2L640.4 713.4L637.8 715.1L634.5 716.2L630.8 716.5L627.1 716.1L623.8 715L621.2 713.3L619.6 711.1L619 708.8L618.9 686L619.5 688.3L621.1 690.5L623.8 692.2L627.1 693.3L630.9 693.7L634.6 693.3L638 692.3L640.6 690.6L642.3 688.4L642.9 686.1Z" fill="#b29540"/><path d="M642.9 687.4L642.3 689.7L640.6 691.9L638 693.6L634.6 694.7L630.9 695L627.1 694.6L623.8 693.5L621.1 691.8L619.5 689.7L618.9 687.3L618.8 664.2L619.4 666.5L621.1 668.6L623.7 670.3L627.2 671.4L631 671.8L634.7 671.5L638.2 670.4L640.9 668.7L642.6 666.6L643.2 664.2Z" fill="#c4c562"/><path d="M643.1 665.6L642.6 667.9L640.9 670.1L638.2 671.7L634.7 672.8L630.9 673.2L627.2 672.8L623.8 671.7L621.1 670L619.4 667.9L618.8 665.5L618.7 643.3L619.2 645.6L621 647.7L623.7 649.4L627.2 650.5L631 650.9L634.9 650.5L638.3 649.5L641.1 647.8L642.8 645.7L643.4 643.4Z" fill="#798948"/><path d="M643.4 644.8L642.8 647.1L641.1 649.2L638.3 650.9L634.9 651.9L631 652.3L627.2 651.9L623.7 650.8L621 649.1L619.3 647L618.7 644.7L618.6 621L619.1 623.3L620.9 625.4L623.7 627.1L627.2 628.2L631.1 628.6L635 628.2L638.5 627.2L641.3 625.5L643.1 623.4L643.7 621.1Z" fill="#82bd5c"/><path d="M643.7 622.5L643.1 624.9L641.3 626.9L638.5 628.6L635 629.7L631.1 630L627.2 629.7L623.7 628.6L620.9 626.9L619.1 624.8L618.6 622.5L618.4 596.2L619 598.5L620.8 600.5L623.6 602.2L627.2 603.3L631.2 603.7L635.1 603.3L638.7 602.2L641.6 600.6L643.4 598.5L644 596.3Z" fill="#2ca638"/><path d="M643.9 597.7L643.3 600L641.5 602.1L638.7 603.7L635.1 604.8L631.2 605.2L627.2 604.8L623.6 603.7L620.8 602L619 600L618.4 597.7L618.3 577.2L618.9 579.5L620.7 581.5L623.6 583.2L627.2 584.2L631.2 584.6L635.3 584.3L638.9 583.2L641.7 581.6L643.6 579.5L644.2 577.3Z" fill="#54a77b"/><path d="M642.2 749.8L641.6 752.2L640 754.4L637.5 756.1L634.2 757.2L630.7 757.6L627.1 757.2L623.9 756.1L621.4 754.3L619.8 752.2L619.3 749.7L618.3 577.2L618.9 579.5L620.7 581.5L623.6 583.2L627.2 584.2L631.2 584.6L635.3 584.3L638.9 583.2L641.7 581.6L643.6 579.5L644.2 577.3Z" fill="url(#sh)"/><path d="M640.5 582.4L637.8 583.6L634.7 584.4L631.3 584.6L627.9 584.4L624.8 583.6L622.1 582.5L620 580.9L618.8 579.2L618.3 577.3L618.8 575.4L620.1 573.6L622.1 572.1L624.8 571L627.9 570.3L631.2 570L634.5 570.3L637.6 571L640.3 572.1L642.4 573.6L643.7 575.4L644.2 577.2L643.8 579.1L642.5 580.9Z" fill="#5fc288"/>
<path d="M732.2 755.3L731.5 757.7L729.7 759.7L727 761.3L723.7 762.2L720.1 762.3L716.5 761.6L713.4 760.3L711 758.3L709.5 756L709.1 753.6L710.5 731.4L710.9 733.8L712.4 736.1L714.9 738L718.1 739.4L721.7 740L725.3 739.9L728.7 739L731.4 737.5L733.2 735.4L733.9 733.1Z" fill="#dd5850"/><path d="M733.8 734.3L733.1 736.7L731.3 738.7L728.6 740.3L725.2 741.2L721.6 741.3L718 740.6L714.8 739.3L712.3 737.3L710.8 735L710.4 732.6L711.7 712L712.1 714.4L713.6 716.7L716.1 718.6L719.4 720L723 720.6L726.8 720.5L730.2 719.6L732.9 718.1L734.7 716L735.5 713.7Z" fill="#e8a74e"/><path d="M735.4 715L734.6 717.3L732.8 719.4L730.1 720.9L726.7 721.8L722.9 721.9L719.3 721.2L716 719.9L713.5 718L712 715.7L711.6 713.3L713 690.9L713.4 693.3L715 695.5L717.5 697.4L720.8 698.8L724.5 699.4L728.3 699.3L731.8 698.4L734.6 696.9L736.4 694.9L737.1 692.5Z" fill="#b29540"/><path d="M737 693.9L736.3 696.2L734.5 698.2L731.7 699.8L728.2 700.6L724.4 700.7L720.7 700.1L717.4 698.8L714.9 696.9L713.3 694.6L713 692.2L714.4 669.4L714.8 671.8L716.3 674.1L718.9 675.9L722.3 677.3L726 677.9L729.9 677.8L733.4 676.9L736.2 675.4L738.1 673.4L738.8 671.1Z" fill="#c4c562"/><path d="M738.7 672.4L738 674.8L736.1 676.8L733.3 678.3L729.8 679.2L726 679.3L722.2 678.6L718.8 677.3L716.2 675.4L714.7 673.2L714.3 670.8L715.6 648.9L716 651.3L717.6 653.5L720.3 655.4L723.7 656.7L727.5 657.3L731.4 657.2L735 656.4L737.8 654.9L739.7 652.9L740.5 650.6Z" fill="#798948"/><path d="M740.4 652L739.6 654.3L737.7 656.3L734.9 657.8L731.3 658.6L727.4 658.8L723.6 658.1L720.2 656.8L717.5 654.9L716 652.7L715.5 650.3L717 627.1L717.4 629.4L719 631.6L721.7 633.5L725.1 634.8L729 635.4L733 635.3L736.6 634.5L739.5 633L741.5 631L742.2 628.7Z" fill="#82bd5c"/><path d="M742.1 630.2L741.3 632.4L739.4 634.4L736.5 635.9L732.9 636.8L728.9 636.9L725 636.3L721.6 635L718.9 633.1L717.3 630.9L716.9 628.5L718.5 602.7L718.9 605L720.6 607.2L723.3 609L726.8 610.3L730.8 611L734.8 610.8L738.5 610L741.4 608.5L743.4 606.6L744.1 604.3Z" fill="#2ca638"/><path d="M744 605.8L743.3 608.1L741.3 610L738.4 611.5L734.7 612.3L730.7 612.5L726.7 611.8L723.2 610.5L720.5 608.7L718.8 606.5L718.4 604.2L720.5 569.9L721 572.2L722.7 574.4L725.4 576.2L729 577.5L733.1 578.1L737.2 578L741 577.1L744 575.7L746 573.8L746.7 571.5Z" fill="#54a77b"/><path d="M732.2 755.3L731.5 757.7L729.7 759.7L727 761.3L723.7 762.2L720.1 762.3L716.5 761.6L713.4 760.3L711 758.3L709.5 756L709.1 753.6L720.5 569.9L721 572.2L722.7 574.4L725.4 576.2L729 577.5L733.1 578.1L737.2 578L741 577.1L744 575.7L746 573.8L746.7 571.5Z" fill="url(#sh)"/><path d="M743.6 575.9L741 577.1L737.9 577.9L734.6 578.1L731.1 577.9L727.8 577.1L725 576L722.7 574.4L721.2 572.6L720.5 570.7L720.8 568.8L721.9 567.1L723.8 565.6L726.3 564.4L729.4 563.7L732.7 563.4L736.1 563.7L739.3 564.4L742.2 565.6L744.4 567.1L746 568.8L746.7 570.7L746.5 572.6L745.5 574.4Z" fill="#5fc288"/>
<path d="M486.3 755.6L486 758L484.7 760.4L482.3 762.4L479.2 763.9L475.6 764.8L472 764.8L468.6 764.1L465.9 762.6L464 760.7L463.2 758.3L461.1 741.3L461.9 743.6L463.8 745.6L466.6 747L470 747.7L473.7 747.7L477.3 746.9L480.4 745.4L482.8 743.3L484.2 741L484.5 738.5Z" fill="#dd5850"/><path d="M484.6 739.7L484.4 742.2L483 744.6L480.6 746.6L477.4 748.1L473.8 748.9L470.2 749L466.8 748.2L464 746.8L462.1 744.8L461.2 742.5L458.1 717.1L459 719.4L460.9 721.4L463.7 722.8L467.2 723.5L470.9 723.4L474.6 722.6L477.8 721.1L480.2 719.1L481.7 716.8L482 714.3Z" fill="#e8a74e"/><path d="M482.1 715.6L481.8 718.1L480.4 720.4L478 722.4L474.7 723.9L471.1 724.7L467.3 724.8L463.9 724.1L461 722.6L459.1 720.7L458.3 718.4L456.4 703.1L457.2 705.4L459.2 707.4L462.1 708.8L465.6 709.5L469.3 709.5L473.1 708.7L476.3 707.2L478.8 705.2L480.2 702.8L480.5 700.4Z" fill="#b29540"/><path d="M480.6 701.7L480.3 704.1L478.9 706.5L476.4 708.5L473.2 710L469.5 710.8L465.7 710.8L462.2 710.1L459.3 708.7L457.4 706.7L456.6 704.4L453.9 682.3L454.7 684.6L456.7 686.6L459.6 688L463.1 688.7L467 688.6L470.7 687.8L474 686.3L476.5 684.3L478 682L478.3 679.6Z" fill="#c4c562"/><path d="M478.5 681L478.1 683.4L476.7 685.7L474.2 687.7L470.9 689.2L467.1 690L463.3 690L459.7 689.3L456.8 687.9L454.9 686L454 683.7L451.7 664.9L452.6 667.2L454.6 669.2L457.5 670.5L461.1 671.3L465 671.2L468.8 670.4L472.1 668.9L474.7 667L476.2 664.7L476.5 662.3Z" fill="#798948"/><path d="M476.6 663.6L476.3 666L474.8 668.3L472.3 670.3L469 671.8L465.1 672.6L461.3 672.6L457.7 671.9L454.7 670.5L452.7 668.6L451.9 666.3L447.8 633.3L448.7 635.5L450.7 637.5L453.7 638.8L457.4 639.5L461.4 639.5L465.3 638.7L468.7 637.2L471.3 635.3L472.8 633L473.2 630.6Z" fill="#82bd5c"/><path d="M473.3 632.1L473 634.4L471.5 636.7L468.8 638.7L465.4 640.1L461.5 640.9L457.6 641L453.9 640.3L450.9 638.9L448.9 637L448 634.7L443.2 595.7L444.1 597.9L446.2 599.8L449.2 601.1L453 601.8L457.1 601.7L461.1 601L464.6 599.5L467.3 597.6L468.9 595.4L469.2 593Z" fill="#2ca638"/><path d="M469.4 594.6L469 596.9L467.4 599.1L464.8 601.1L461.2 602.5L457.2 603.3L453.2 603.3L449.4 602.6L446.3 601.3L444.3 599.4L443.4 597.2L440.3 572L441.2 574.2L443.3 576L446.4 577.4L450.2 578.1L454.4 578L458.4 577.2L462 575.8L464.7 573.9L466.4 571.7L466.7 569.4Z" fill="#54a77b"/><path d="M486.3 755.6L486 758L484.7 760.4L482.3 762.4L479.2 763.9L475.6 764.8L472 764.8L468.6 764.1L465.9 762.6L464 760.7L463.2 758.3L440.3 572L441.2 574.2L443.3 576L446.4 577.4L450.2 578.1L454.4 578L458.4 577.2L462 575.8L464.7 573.9L466.4 571.7L466.7 569.4Z" fill="url(#sh)"/><path d="M461.8 575.9L458.9 577.1L455.5 577.9L452 578.1L448.7 577.9L445.6 577.1L443.1 575.9L441.4 574.4L440.4 572.6L440.4 570.7L441.3 568.8L442.9 567L445.4 565.5L448.3 564.4L451.6 563.6L455 563.4L458.3 563.6L461.3 564.4L463.8 565.5L465.6 567L466.6 568.8L466.7 570.7L465.9 572.6L464.2 574.4Z" fill="#5fc288"/>
<path d="M823 760.8L822.2 763.1L820.2 765L817.4 766.4L814 767L810.3 766.9L806.8 766L803.7 764.4L801.4 762.3L800.1 759.9L799.8 757.4L803.2 731.3L803.5 733.8L804.8 736.2L807.2 738.3L810.3 739.8L814 740.8L817.7 740.9L821.2 740.3L824 738.9L826 737L826.9 734.7Z" fill="#dd5850"/><path d="M826.7 735.9L825.8 738.2L823.9 740.2L821 741.5L817.5 742.1L813.8 742L810.2 741.1L807 739.5L804.7 737.4L803.3 735.1L803.1 732.6L805.7 712.3L805.9 714.8L807.3 717.2L809.7 719.2L812.9 720.8L816.6 721.7L820.4 721.8L823.9 721.2L826.8 719.9L828.8 718L829.7 715.7Z" fill="#e8a74e"/><path d="M829.5 716.9L828.6 719.2L826.6 721.2L823.7 722.5L820.2 723.1L816.4 723L812.8 722.1L809.6 720.5L807.2 718.4L805.8 716.1L805.6 713.6L808.8 688.4L809.1 690.8L810.5 693.2L813 695.2L816.2 696.8L820 697.7L823.8 697.8L827.4 697.2L830.3 695.9L832.4 694L833.3 691.7Z" fill="#b29540"/><path d="M833.1 693L832.2 695.3L830.1 697.2L827.2 698.5L823.6 699.2L819.8 699L816 698.1L812.8 696.6L810.3 694.5L808.9 692.1L808.7 689.7L811.3 669.8L811.5 672.3L812.9 674.6L815.4 676.6L818.8 678.2L822.5 679.1L826.5 679.2L830.1 678.6L833.1 677.3L835.1 675.4L836 673.1Z" fill="#c4c562"/><path d="M835.8 674.5L834.9 676.8L832.9 678.6L829.9 680L826.3 680.6L822.4 680.5L818.6 679.6L815.3 678L812.8 676L811.3 673.6L811.1 671.2L813 656.2L813.3 658.6L814.7 660.9L817.3 663L820.6 664.5L824.5 665.4L828.4 665.5L832.1 664.9L835.1 663.6L837.1 661.7L838 659.4Z" fill="#798948"/><path d="M837.8 660.8L836.9 663.1L834.9 665L831.9 666.3L828.2 666.9L824.3 666.8L820.4 665.9L817.1 664.4L814.6 662.3L813.1 660L812.8 657.6L814.9 642.2L815.1 644.6L816.6 646.9L819.1 649L822.5 650.5L826.4 651.4L830.4 651.5L834.1 650.9L837.1 649.6L839.2 647.7L840.1 645.5Z" fill="#82bd5c"/><path d="M839.9 646.9L839 649.1L836.9 651L833.9 652.3L830.2 652.9L826.2 652.8L822.3 651.9L819 650.4L816.4 648.3L814.9 646L814.7 643.6L818.3 616L818.5 618.4L820.1 620.7L822.7 622.7L826.1 624.2L830.1 625.1L834.1 625.2L837.9 624.6L841 623.3L843.1 621.4L844 619.2Z" fill="#2ca638"/><path d="M843.8 620.7L842.8 622.9L840.7 624.8L837.7 626.1L833.9 626.7L829.9 626.5L825.9 625.7L822.5 624.2L819.9 622.2L818.3 619.9L818.1 617.5L822.5 583.3L822.8 585.7L824.4 587.9L827 589.9L830.6 591.4L834.6 592.3L838.8 592.4L842.6 591.8L845.8 590.5L847.9 588.7L848.8 586.5Z" fill="#54a77b"/><path d="M823 760.8L822.2 763.1L820.2 765L817.4 766.4L814 767L810.3 766.9L806.8 766L803.7 764.4L801.4 762.3L800.1 759.9L799.8 757.4L822.5 583.3L822.8 585.7L824.4 587.9L827 589.9L830.6 591.4L834.6 592.3L838.8 592.4L842.6 591.8L845.8 590.5L847.9 588.7L848.8 586.5Z" fill="url(#sh)"/><path d="M846.2 590.2L843.8 591.4L840.8 592.2L837.5 592.4L834 592.2L830.6 591.4L827.6 590.2L825.2 588.7L823.5 586.9L822.6 584.9L822.6 583L823.5 581.2L825.2 579.7L827.6 578.5L830.6 577.8L833.9 577.5L837.3 577.8L840.6 578.5L843.6 579.7L846 581.2L847.8 583L848.7 584.9L848.8 586.8L847.9 588.6Z" fill="#5fc288"/>
<path d="M576.2 761.1L575.8 763.5L574.2 765.8L571.8 767.7L568.6 769.1L565 769.6L561.3 769.4L558 768.4L555.4 766.8L553.7 764.6L553 762.2L551.7 739.3L552.4 741.7L554.2 743.8L556.9 745.5L560.2 746.5L563.9 746.7L567.6 746.1L570.8 744.8L573.3 742.9L574.9 740.6L575.3 738.1Z" fill="#dd5850"/><path d="M575.4 739.4L574.9 741.9L573.4 744.2L570.9 746L567.6 747.3L564 747.9L560.3 747.7L556.9 746.7L554.2 745.1L552.5 743L551.8 740.5L550.6 719.2L551.3 721.6L553.1 723.7L555.8 725.4L559.2 726.3L563 726.5L566.7 726L570 724.7L572.5 722.8L574.1 720.5L574.6 718.1Z" fill="#e8a74e"/><path d="M574.6 719.3L574.2 721.8L572.6 724.1L570 726L566.7 727.3L563 727.8L559.3 727.6L555.9 726.7L553.2 725L551.4 722.9L550.7 720.5L549.4 697.3L550.1 699.7L551.9 701.8L554.7 703.4L558.1 704.4L561.9 704.6L565.7 704L569.1 702.7L571.7 700.9L573.3 698.6L573.7 696.2Z" fill="#b29540"/><path d="M573.8 697.5L573.3 699.9L571.7 702.2L569.1 704.1L565.8 705.3L562 705.9L558.2 705.7L554.7 704.7L552 703.1L550.2 701L549.5 698.6L548.2 675L548.9 677.4L550.7 679.5L553.5 681.1L557 682.1L560.9 682.3L564.7 681.7L568.1 680.4L570.8 678.6L572.4 676.3L572.9 673.9Z" fill="#c4c562"/><path d="M572.9 675.3L572.5 677.7L570.8 680L568.2 681.8L564.8 683.1L561 683.6L557.1 683.4L553.6 682.5L550.8 680.9L548.9 678.8L548.3 676.4L547 653.7L547.7 656.1L549.6 658.2L552.4 659.7L556 660.7L559.9 660.9L563.8 660.3L567.2 659.1L569.9 657.2L571.6 655L572.1 652.6Z" fill="#798948"/><path d="M572.1 654L571.7 656.4L570 658.6L567.3 660.5L563.9 661.8L560 662.3L556 662.1L552.5 661.2L549.6 659.6L547.8 657.5L547.1 655.1L545.7 631L546.4 633.3L548.3 635.4L551.2 637L554.9 637.9L558.8 638.1L562.8 637.6L566.3 636.3L569 634.5L570.7 632.3L571.2 629.9Z" fill="#82bd5c"/><path d="M571.3 631.3L570.8 633.7L569.1 635.9L566.4 637.8L562.9 639L558.9 639.6L554.9 639.4L551.3 638.4L548.4 636.8L546.5 634.8L545.8 632.4L544.3 605.6L545 607.9L547 609.9L549.9 611.5L553.6 612.4L557.6 612.6L561.7 612.1L565.2 610.8L568 609L569.8 606.8L570.2 604.5Z" fill="#2ca638"/><path d="M570.3 606L569.8 608.3L568.1 610.5L565.3 612.3L561.7 613.6L557.7 614.1L553.7 613.9L550 613L547 611.4L545.1 609.4L544.4 607.1L542.5 572.2L543.2 574.4L545.2 576.4L548.2 578L551.9 578.9L556.1 579.1L560.2 578.6L563.9 577.3L566.7 575.6L568.5 573.4L569 571.1Z" fill="#54a77b"/><path d="M576.2 761.1L575.8 763.5L574.2 765.8L571.8 767.7L568.6 769.1L565 769.6L561.3 769.4L558 768.4L555.4 766.8L553.7 764.6L553 762.2L542.5 572.2L543.2 574.4L545.2 576.4L548.2 578L551.9 578.9L556.1 579.1L560.2 578.6L563.9 577.3L566.7 575.6L568.5 573.4L569 571.1Z" fill="url(#sh)"/><path d="M564.7 576.9L561.9 578.1L558.6 578.9L555.1 579.1L551.7 578.9L548.5 578.1L545.9 576.9L543.9 575.4L542.8 573.6L542.5 571.6L543.1 569.7L544.6 567.9L546.9 566.4L549.7 565.2L552.9 564.5L556.3 564.3L559.7 564.5L562.8 565.2L565.5 566.4L567.5 567.9L568.7 569.7L569 571.6L568.4 573.5L567 575.3Z" fill="#5fc288"/>
<path d="M666.9 766.7L666.3 769.1L664.6 771.3L662 773.1L658.7 774.1L655.1 774.5L651.5 774L648.3 772.7L645.7 770.9L644.1 768.6L643.6 766.1L644 741.7L644.5 744.2L646.1 746.5L648.7 748.3L652 749.6L655.6 750L659.3 749.7L662.7 748.7L665.3 746.9L667.1 744.7L667.7 742.3Z" fill="#dd5850"/><path d="M667.6 743.5L667 746L665.3 748.2L662.6 749.9L659.3 751L655.6 751.3L651.9 750.8L648.6 749.6L646.1 747.7L644.4 745.5L643.9 743L644.2 720.3L644.7 722.7L646.4 725L649 726.8L652.4 728L656.1 728.5L659.9 728.2L663.3 727.1L666 725.4L667.7 723.2L668.3 720.8Z" fill="#e8a74e"/><path d="M668.3 722.1L667.7 724.5L665.9 726.7L663.2 728.4L659.8 729.5L656.1 729.8L652.3 729.3L649 728.1L646.4 726.3L644.7 724L644.2 721.5L644.5 696.8L645.1 699.2L646.7 701.5L649.4 703.3L652.8 704.5L656.6 705L660.4 704.7L663.9 703.6L666.6 701.9L668.4 699.7L669 697.3Z" fill="#b29540"/><path d="M669 698.7L668.4 701.1L666.6 703.3L663.9 705L660.4 706L656.6 706.3L652.8 705.9L649.4 704.6L646.7 702.8L645 700.6L644.5 698.1L644.9 672.9L645.4 675.3L647.1 677.5L649.8 679.3L653.3 680.5L657.1 681L661 680.7L664.5 679.7L667.3 678L669.1 675.8L669.8 673.4Z" fill="#c4c562"/><path d="M669.7 674.8L669.1 677.2L667.3 679.4L664.5 681L661 682.1L657.1 682.4L653.2 681.9L649.8 680.7L647.1 678.9L645.4 676.7L644.8 674.3L645.2 649.9L645.7 652.3L647.4 654.5L650.2 656.3L653.7 657.5L657.6 658L661.6 657.7L665.2 656.6L668 655L669.8 652.8L670.5 650.4Z" fill="#798948"/><path d="M670.4 651.9L669.8 654.3L668 656.4L665.1 658.1L661.6 659.1L657.6 659.4L653.7 659L650.2 657.8L647.4 656L645.7 653.8L645.1 651.3L645.5 625.4L646 627.8L647.8 630L650.6 631.7L654.2 632.9L658.2 633.4L662.2 633.1L665.8 632.1L668.7 630.4L670.6 628.3L671.2 625.9Z" fill="#82bd5c"/><path d="M671.2 627.4L670.5 629.8L668.7 631.9L665.8 633.5L662.2 634.6L658.1 634.9L654.1 634.4L650.6 633.2L647.8 631.5L646 629.3L645.5 626.9L645.8 601.7L646.3 604.1L648.1 606.2L651 608L654.6 609.2L658.7 609.6L662.8 609.3L666.5 608.3L669.4 606.6L671.3 604.5L671.9 602.2Z" fill="#2ca638"/><path d="M671.9 603.7L671.2 606.1L669.4 608.2L666.4 609.8L662.7 610.8L658.7 611.1L654.6 610.7L651 609.5L648.1 607.8L646.3 605.6L645.8 603.2L646 584.7L646.6 587L648.4 589.2L651.3 590.9L654.9 592.1L659.1 592.5L663.2 592.2L666.9 591.2L669.9 589.6L671.8 587.5L672.5 585.2Z" fill="#54a77b"/><path d="M666.9 766.7L666.3 769.1L664.6 771.3L662 773.1L658.7 774.1L655.1 774.5L651.5 774L648.3 772.7L645.7 770.9L644.1 768.6L643.6 766.1L646 584.7L646.6 587L648.4 589.2L651.3 590.9L654.9 592.1L659.1 592.5L663.2 592.2L666.9 591.2L669.9 589.6L671.8 587.5L672.5 585.2Z" fill="url(#sh)"/><path d="M668.9 590.3L666.2 591.5L663 592.3L659.5 592.5L656.1 592.3L652.8 591.5L650 590.3L647.9 588.7L646.5 586.9L646 584.9L646.4 583L647.7 581.2L649.7 579.6L652.4 578.4L655.6 577.7L658.9 577.4L662.3 577.7L665.5 578.4L668.3 579.6L670.5 581.2L671.9 583L672.5 584.9L672.1 586.9L670.9 588.7Z" fill="#5fc288"/>
<path d="M418.1 766.9L417.9 769.4L416.7 771.9L414.4 774.1L411.3 775.8L407.7 776.8L404 777.1L400.5 776.5L397.6 775.2L395.6 773.3L394.7 771L390 744.4L390.9 746.7L393 748.6L395.9 749.9L399.5 750.5L403.3 750.2L406.9 749.2L410.1 747.5L412.4 745.3L413.7 742.9L413.9 740.4Z" fill="#dd5850"/><path d="M414.1 741.6L413.9 744.1L412.6 746.6L410.3 748.8L407.1 750.5L403.5 751.5L399.7 751.7L396.2 751.2L393.2 749.9L391.2 748L390.2 745.7L385.8 720.8L386.8 723.1L388.9 725L391.9 726.3L395.5 726.8L399.3 726.6L403.1 725.6L406.3 723.9L408.7 721.7L410 719.3L410.2 716.8Z" fill="#e8a74e"/><path d="M410.4 718.1L410.2 720.6L408.9 723L406.5 725.2L403.3 726.9L399.5 727.9L395.7 728.2L392.1 727.6L389.1 726.3L387 724.4L386.1 722.1L381.3 695L382.3 697.2L384.4 699.1L387.4 700.4L391.1 700.9L395 700.7L398.8 699.7L402.1 698L404.5 695.9L405.9 693.4L406.1 691Z" fill="#b29540"/><path d="M406.3 692.3L406.1 694.8L404.8 697.2L402.3 699.4L399 701L395.2 702L391.3 702.3L387.6 701.7L384.6 700.5L382.5 698.6L381.5 696.3L376.6 668.5L377.6 670.8L379.8 672.6L382.8 673.9L386.6 674.4L390.6 674.2L394.5 673.2L397.8 671.5L400.3 669.4L401.7 667L401.9 664.6Z" fill="#c4c562"/><path d="M402.2 666L402 668.4L400.6 670.8L398 672.9L394.7 674.6L390.8 675.6L386.8 675.8L383.1 675.3L380 674L377.9 672.2L376.9 669.9L372.2 643L373.1 645.3L375.3 647.1L378.5 648.4L382.3 648.9L386.3 648.7L390.3 647.7L393.7 646L396.3 643.9L397.7 641.5L397.9 639.1Z" fill="#798948"/><path d="M398.2 640.6L398 643L396.5 645.4L393.9 647.5L390.5 649.1L386.6 650.1L382.5 650.4L378.7 649.8L375.6 648.6L373.4 646.7L372.4 644.5L366.9 613.4L367.9 615.6L370.1 617.4L373.3 618.7L377.2 619.2L381.4 618.9L385.4 618L388.9 616.3L391.5 614.3L393 611.9L393.3 609.5Z" fill="#82bd5c"/><path d="M393.5 611L393.3 613.4L391.8 615.8L389.2 617.9L385.7 619.5L381.6 620.5L377.5 620.7L373.6 620.2L370.4 618.9L368.2 617.1L367.2 614.9L362.4 587.7L363.4 589.9L365.6 591.7L368.9 592.9L372.8 593.4L377.1 593.2L381.2 592.2L384.8 590.6L387.4 588.5L389 586.2L389.2 583.9Z" fill="#2ca638"/><path d="M389.5 585.4L389.2 587.8L387.7 590.1L385 592.2L381.4 593.8L377.3 594.7L373.1 595L369.2 594.5L365.9 593.2L363.7 591.4L362.7 589.3L358.9 567.9L359.9 570.1L362.2 571.9L365.5 573.1L369.5 573.6L373.8 573.3L377.9 572.4L381.6 570.8L384.3 568.8L385.9 566.5L386.1 564.1Z" fill="#54a77b"/><path d="M418.1 766.9L417.9 769.4L416.7 771.9L414.4 774.1L411.3 775.8L407.7 776.8L404 777.1L400.5 776.5L397.6 775.2L395.6 773.3L394.7 771L358.9 567.9L359.9 570.1L362.2 571.9L365.5 573.1L369.5 573.6L373.8 573.3L377.9 572.4L381.6 570.8L384.3 568.8L385.9 566.5L386.1 564.1Z" fill="url(#sh)"/><path d="M380.5 571.3L377.4 572.6L373.9 573.3L370.3 573.6L366.9 573.3L363.8 572.6L361.4 571.4L359.7 569.8L358.9 568L359.1 566L360.2 564.1L362.1 562.3L364.7 560.7L367.8 559.6L371.2 558.8L374.8 558.6L378.2 558.8L381.2 559.6L383.6 560.7L385.3 562.3L386.1 564.1L386 566L385 568L383.1 569.8Z" fill="#5fc288"/>
<path d="M758.5 772.3L757.7 774.7L755.9 776.8L753.1 778.4L749.7 779.2L746.1 779.2L742.5 778.5L739.3 777L736.9 775L735.4 772.6L735.1 770L737 746.8L737.3 749.3L738.8 751.7L741.3 753.8L744.5 755.2L748.2 756L751.9 756L755.4 755.1L758.2 753.6L760.1 751.5L760.8 749.1Z" fill="#dd5850"/><path d="M760.7 750.3L759.9 752.8L758.1 754.8L755.3 756.4L751.8 757.2L748.1 757.2L744.4 756.5L741.2 755L738.7 753L737.2 750.6L736.9 748.1L738.7 726.5L739 729L740.5 731.4L743 733.4L746.3 734.8L750 735.6L753.8 735.5L757.3 734.7L760.2 733.2L762.1 731.1L762.9 728.7Z" fill="#e8a74e"/><path d="M762.8 730L762 732.4L760.1 734.5L757.2 736L753.7 736.8L749.9 736.9L746.2 736.1L742.9 734.7L740.4 732.6L738.9 730.3L738.6 727.7L740.5 704.2L740.9 706.7L742.4 709.1L744.9 711.1L748.3 712.6L752.1 713.3L755.9 713.3L759.5 712.5L762.4 710.9L764.3 708.9L765.1 706.5Z" fill="#b29540"/><path d="M765 707.8L764.2 710.2L762.3 712.3L759.4 713.8L755.8 714.6L752 714.6L748.2 713.9L744.8 712.4L742.3 710.4L740.8 708.1L740.4 705.6L742.4 681.7L742.7 684.1L744.3 686.5L746.9 688.5L750.3 689.9L754.1 690.7L758.1 690.6L761.7 689.8L764.6 688.3L766.6 686.3L767.4 683.9Z" fill="#c4c562"/><path d="M767.2 685.3L766.4 687.6L764.5 689.7L761.6 691.2L757.9 692L754 692.1L750.2 691.3L746.8 689.9L744.2 687.9L742.6 685.5L742.3 683L744.2 660L744.5 662.5L746.1 664.8L748.8 666.8L752.2 668.2L756.1 669L760.1 668.9L763.8 668.1L766.8 666.6L768.7 664.6L769.6 662.2Z" fill="#798948"/><path d="M769.4 663.6L768.6 666L766.6 668L763.6 669.5L760 670.3L756 670.4L752.1 669.6L748.6 668.2L746 666.2L744.4 663.9L744.1 661.4L746.1 636.9L746.4 639.3L748.1 641.7L750.8 643.6L754.3 645L758.2 645.8L762.3 645.7L766 644.9L769 643.4L771.1 641.4L771.9 639.1Z" fill="#82bd5c"/><path d="M771.7 640.6L770.9 642.9L768.9 644.9L765.9 646.4L762.2 647.2L758.1 647.2L754.1 646.5L750.6 645.1L747.9 643.1L746.3 640.8L745.9 638.4L748.2 611L748.6 613.4L750.2 615.7L753 617.7L756.6 619.1L760.6 619.8L764.7 619.8L768.5 619L771.6 617.5L773.6 615.5L774.5 613.2Z" fill="#2ca638"/><path d="M774.3 614.7L773.5 617L771.4 619L768.4 620.5L764.6 621.3L760.5 621.3L756.4 620.6L752.9 619.2L750.1 617.3L748.5 615L748.1 612.5L749.1 599.8L749.5 602.2L751.2 604.5L753.9 606.4L757.6 607.8L761.6 608.6L765.8 608.5L769.6 607.7L772.7 606.3L774.8 604.3L775.6 602Z" fill="#54a77b"/><path d="M758.5 772.3L757.7 774.7L755.9 776.8L753.1 778.4L749.7 779.2L746.1 779.2L742.5 778.5L739.3 777L736.9 775L735.4 772.6L735.1 770L749.1 599.8L749.5 602.2L751.2 604.5L753.9 606.4L757.6 607.8L761.6 608.6L765.8 608.5L769.6 607.7L772.7 606.3L774.8 604.3L775.6 602Z" fill="url(#sh)"/><path d="M772.6 606.4L770 607.6L766.9 608.4L763.5 608.6L760.1 608.4L756.7 607.6L753.8 606.4L751.5 604.8L749.9 602.9L749.1 600.9L749.3 598.9L750.4 597.1L752.2 595.5L754.8 594.3L757.8 593.6L761.2 593.3L764.6 593.6L767.9 594.3L770.8 595.5L773.1 597.1L774.8 598.9L775.5 600.9L775.4 602.9L774.4 604.7Z" fill="#5fc288"/>
<path d="M508.7 772.5L508.4 775.1L507 777.5L504.5 779.6L501.4 781.1L497.8 781.9L494.1 781.9L490.7 781.1L487.9 779.5L486 777.4L485.2 775L482.7 751.2L483.5 753.7L485.4 755.7L488.2 757.3L491.7 758.1L495.4 758.1L499.1 757.3L502.3 755.8L504.8 753.7L506.2 751.3L506.6 748.8Z" fill="#dd5850"/><path d="M506.7 750L506.4 752.6L504.9 755L502.4 757L499.2 758.5L495.5 759.3L491.8 759.3L488.3 758.5L485.5 757L483.6 754.9L482.8 752.5L480.4 730.4L481.2 732.8L483.2 734.8L486 736.3L489.5 737.1L493.4 737.2L497.1 736.4L500.4 734.9L502.9 732.8L504.4 730.4L504.7 727.9Z" fill="#e8a74e"/><path d="M504.8 729.2L504.5 731.7L503 734.1L500.5 736.2L497.2 737.7L493.5 738.5L489.7 738.4L486.2 737.6L483.3 736.1L481.4 734.1L480.6 731.7L478 707.5L478.8 709.9L480.7 712L483.6 713.5L487.2 714.3L491.1 714.3L494.9 713.5L498.3 712L500.8 710L502.3 707.6L502.6 705.1Z" fill="#b29540"/><path d="M502.8 706.4L502.4 709L500.9 711.3L498.4 713.4L495 714.9L491.2 715.6L487.4 715.6L483.8 714.8L480.9 713.3L478.9 711.3L478.1 708.9L475.5 684.3L476.3 686.7L478.3 688.7L481.2 690.2L484.9 691L488.8 691L492.7 690.2L496.1 688.8L498.7 686.7L500.2 684.4L500.6 681.9Z" fill="#c4c562"/><path d="M500.7 683.3L500.4 685.8L498.8 688.1L496.2 690.2L492.8 691.6L488.9 692.4L485 692.4L481.4 691.6L478.4 690.1L476.4 688.1L475.6 685.7L473.1 662L473.9 664.4L475.9 666.4L478.9 667.9L482.6 668.7L486.6 668.7L490.5 667.9L494 666.4L496.6 664.4L498.2 662.1L498.6 659.6Z" fill="#798948"/><path d="M498.7 661L498.3 663.5L496.8 665.9L494.1 667.9L490.7 669.3L486.7 670.1L482.7 670.1L479.1 669.3L476.1 667.8L474.1 665.8L473.2 663.4L470.5 638.2L471.3 640.6L473.4 642.6L476.4 644L480.2 644.8L484.3 644.8L488.3 644.1L491.8 642.6L494.5 640.6L496.1 638.3L496.4 635.8Z" fill="#82bd5c"/><path d="M496.6 637.3L496.2 639.8L494.6 642.1L491.9 644.1L488.4 645.5L484.4 646.3L480.3 646.3L476.6 645.5L473.5 644L471.5 642L470.7 639.7L467.9 613.5L468.7 615.8L470.8 617.8L473.9 619.3L477.7 620L481.8 620L485.9 619.3L489.5 617.9L492.2 615.9L493.9 613.6L494.2 611.2Z" fill="#2ca638"/><path d="M494.4 612.7L494 615.1L492.4 617.4L489.6 619.4L486 620.8L482 621.6L477.8 621.6L474 620.8L470.9 619.3L468.9 617.4L468 615L465.3 589.8L466.2 592.1L468.3 594.1L471.4 595.5L475.3 596.3L479.5 596.3L483.6 595.5L487.3 594.1L490.1 592.2L491.7 589.9L492.1 587.5Z" fill="#54a77b"/><path d="M508.7 772.5L508.4 775.1L507 777.5L504.5 779.6L501.4 781.1L497.8 781.9L494.1 781.9L490.7 781.1L487.9 779.5L486 777.4L485.2 775L465.3 589.8L466.2 592.1L468.3 594.1L471.4 595.5L475.3 596.3L479.5 596.3L483.6 595.5L487.3 594.1L490.1 592.2L491.7 589.9L492.1 587.5Z" fill="url(#sh)"/><path d="M487.3 594.1L484.3 595.3L481 596.1L477.4 596.4L474 596.1L470.9 595.3L468.3 594.1L466.5 592.5L465.5 590.6L465.4 588.6L466.2 586.7L467.8 584.8L470.2 583.3L473.2 582.1L476.5 581.3L480 581.1L483.4 581.3L486.5 582.1L489 583.3L490.9 584.8L491.9 586.7L492.1 588.6L491.3 590.6L489.7 592.5Z" fill="#5fc288"/>
<path d="M851 778L850 780.4L848 782.3L845.1 783.6L841.6 784.2L837.9 784L834.3 783L831.2 781.3L828.8 779L827.5 776.5L827.4 774L831.2 749.1L831.4 751.7L832.7 754.2L835.1 756.4L838.2 758.1L841.9 759.1L845.7 759.3L849.3 758.7L852.2 757.4L854.3 755.5L855.2 753.1Z" fill="#dd5850"/><path d="M855 754.4L854.1 756.7L852 758.7L849.1 760L845.5 760.6L841.7 760.3L838 759.3L834.9 757.6L832.5 755.4L831.2 752.9L831 750.4L834.6 727.2L834.7 729.7L836.1 732.2L838.5 734.4L841.7 736.1L845.5 737.1L849.3 737.3L853 736.7L856 735.4L858 733.5L859 731.1Z" fill="#e8a74e"/><path d="M858.8 732.4L857.8 734.8L855.7 736.7L852.7 738L849.1 738.6L845.3 738.4L841.5 737.4L838.3 735.7L835.9 733.5L834.5 731L834.4 728.5L838.2 703.2L838.4 705.7L839.8 708.2L842.3 710.3L845.6 712L849.4 713L853.3 713.2L857 712.7L860 711.4L862.1 709.5L863.1 707.1Z" fill="#b29540"/><path d="M862.9 708.5L861.9 710.8L859.8 712.7L856.8 714L853.1 714.6L849.2 714.4L845.3 713.4L842 711.7L839.6 709.5L838.2 707L838 704.5L842 678.7L842.2 681.2L843.6 683.6L846.1 685.8L849.5 687.5L853.3 688.5L857.4 688.7L861.1 688.1L864.2 686.8L866.3 684.9L867.3 682.6Z" fill="#c4c562"/><path d="M867.1 684L866.1 686.3L864 688.2L860.9 689.5L857.1 690.1L853.1 689.9L849.2 688.9L845.9 687.2L843.4 685L841.9 682.6L841.7 680.1L845.6 655.2L845.8 657.7L847.2 660.1L849.8 662.2L853.2 663.9L857.2 664.9L861.3 665.1L865.1 664.5L868.2 663.3L870.4 661.4L871.4 659.1Z" fill="#798948"/><path d="M871.1 660.5L870.1 662.8L867.9 664.7L864.8 666L861 666.5L856.9 666.3L853 665.3L849.6 663.7L847 661.5L845.5 659.1L845.3 656.6L849.4 630L849.6 632.5L851.1 634.9L853.7 637L857.2 638.6L861.3 639.6L865.4 639.8L869.3 639.3L872.5 638L874.7 636.1L875.7 633.9Z" fill="#82bd5c"/><path d="M875.4 635.4L874.4 637.6L872.2 639.5L869 640.8L865.2 641.3L861 641.1L857 640.1L853.5 638.5L850.9 636.4L849.4 634L849.2 631.5L852.7 608.3L853 610.7L854.5 613.1L857.2 615.2L860.7 616.8L864.8 617.8L869 618L872.9 617.5L876.2 616.2L878.4 614.4L879.4 612.1Z" fill="#2ca638"/><path d="M879.1 613.6L878.1 615.9L875.9 617.7L872.7 619L868.8 619.6L864.5 619.3L860.5 618.4L856.9 616.7L854.2 614.6L852.7 612.3L852.5 609.8L856 586.7L856.3 589.1L857.8 591.5L860.5 593.5L864.2 595.1L868.3 596.1L872.6 596.3L876.6 595.8L879.8 594.5L882.1 592.7L883.1 590.5Z" fill="#54a77b"/><path d="M851 778L850 780.4L848 782.3L845.1 783.6L841.6 784.2L837.9 784L834.3 783L831.2 781.3L828.8 779L827.5 776.5L827.4 774L856 586.7L856.3 589.1L857.8 591.5L860.5 593.5L864.2 595.1L868.3 596.1L872.6 596.3L876.6 595.8L879.8 594.5L882.1 592.7L883.1 590.5Z" fill="url(#sh)"/><path d="M880.6 594.1L878.2 595.3L875.1 596.1L871.7 596.3L868.1 596.1L864.6 595.3L861.5 594.1L858.9 592.5L857.1 590.6L856.1 588.6L856 586.6L856.9 584.8L858.6 583.2L861 582L864 581.2L867.4 581L870.9 581.2L874.3 582L877.4 583.2L880 584.8L881.9 586.6L883 588.6L883.1 590.6L882.3 592.4Z" fill="#5fc288"/>
<path d="M600.2 778.3L599.7 780.8L598.1 783.2L595.5 785.1L592.3 786.4L588.6 786.9L584.9 786.6L581.6 785.5L578.9 783.8L577.2 781.5L576.6 779L575.9 759.7L576.5 762.2L578.2 764.5L580.9 766.2L584.3 767.3L588.1 767.6L591.8 767.1L595.1 765.8L597.7 763.9L599.3 761.5L599.8 759Z" fill="#dd5850"/><path d="M599.8 760.2L599.3 762.8L597.7 765.1L595.1 767L591.8 768.3L588.1 768.8L584.4 768.5L581 767.5L578.3 765.7L576.5 763.5L575.9 761L575.3 745.6L576 748.1L577.7 750.4L580.5 752.1L583.9 753.2L587.6 753.5L591.4 752.9L594.7 751.7L597.4 749.8L599 747.4L599.5 744.9Z" fill="#e8a74e"/><path d="M599.5 746.2L599 748.7L597.4 751L594.8 752.9L591.4 754.2L587.7 754.7L583.9 754.5L580.5 753.4L577.8 751.6L576 749.4L575.4 746.9L574.4 721.9L575.1 724.4L576.9 726.7L579.6 728.4L583.1 729.5L587 729.7L590.8 729.2L594.2 728L596.8 726.1L598.5 723.7L599 721.2Z" fill="#b29540"/><path d="M599 722.5L598.5 725.1L596.9 727.4L594.2 729.3L590.8 730.5L587 731.1L583.2 730.8L579.7 729.7L576.9 728L575.1 725.8L574.5 723.3L573.7 703.7L574.4 706.2L576.2 708.4L579 710.2L582.5 711.2L586.4 711.5L590.3 711L593.7 709.7L596.4 707.8L598.1 705.5L598.6 703Z" fill="#c4c562"/><path d="M598.7 704.4L598.2 706.9L596.5 709.2L593.8 711.1L590.3 712.3L586.5 712.9L582.6 712.6L579.1 711.5L576.3 709.8L574.4 707.6L573.8 705.1L573.1 686.8L573.8 689.3L575.6 691.5L578.4 693.2L582 694.3L585.9 694.6L589.8 694L593.3 692.8L596.1 690.9L597.8 688.6L598.3 686.1Z" fill="#798948"/><path d="M598.3 687.5L597.8 690L596.1 692.3L593.4 694.2L589.9 695.4L586 696L582 695.7L578.5 694.6L575.6 692.9L573.8 690.7L573.1 688.2L572.4 668.4L573.1 670.8L574.9 673L577.8 674.7L581.4 675.8L585.4 676.1L589.4 675.6L592.9 674.3L595.7 672.4L597.4 670.2L597.9 667.7Z" fill="#82bd5c"/><path d="M598 669.1L597.4 671.6L595.7 673.9L592.9 675.7L589.4 677L585.4 677.5L581.5 677.2L577.8 676.2L575 674.5L573.1 672.3L572.4 669.8L571.7 649.4L572.3 651.8L574.2 654L577.1 655.7L580.8 656.7L584.8 657L588.9 656.5L592.5 655.3L595.3 653.4L597 651.1L597.5 648.7Z" fill="#2ca638"/><path d="M597.6 650.1L597 652.6L595.3 654.9L592.5 656.7L588.9 658L584.9 658.5L580.8 658.2L577.2 657.2L574.3 655.5L572.4 653.3L571.7 650.9L571.1 633.4L571.7 635.8L573.6 638L576.6 639.7L580.3 640.7L584.4 641L588.4 640.5L592.1 639.2L594.9 637.4L596.7 635.1L597.2 632.7Z" fill="#54a77b"/><path d="M600.2 778.3L599.7 780.8L598.1 783.2L595.5 785.1L592.3 786.4L588.6 786.9L584.9 786.6L581.6 785.5L578.9 783.8L577.2 781.5L576.6 779L571.1 633.4L571.7 635.8L573.6 638L576.6 639.7L580.3 640.7L584.4 641L588.4 640.5L592.1 639.2L594.9 637.4L596.7 635.1L597.2 632.7Z" fill="url(#sh)"/><path d="M593.2 638.6L590.4 639.9L587.2 640.7L583.8 641L580.4 640.7L577.2 639.9L574.6 638.6L572.6 637L571.4 635.1L571.1 633L571.6 631L573 629.1L575.2 627.5L578 626.3L581.1 625.5L584.5 625.2L587.8 625.5L590.9 626.3L593.6 627.5L595.6 629.1L596.8 631L597.2 633L596.7 635.1L595.3 637Z" fill="#5fc288"/>
<path d="M692.5 784.1L691.8 786.6L690.1 788.8L687.4 790.6L684 791.6L680.3 791.9L676.6 791.3L673.4 789.9L670.8 788L669.3 785.6L668.8 783L669.6 757.9L670.1 760.5L671.7 762.9L674.3 764.8L677.6 766.2L681.3 766.8L685.1 766.5L688.6 765.5L691.3 763.8L693.1 761.5L693.8 759Z" fill="#dd5850"/><path d="M693.7 760.3L693 762.8L691.2 765L688.5 766.7L685.1 767.8L681.3 768L677.6 767.4L674.2 766.1L671.7 764.1L670.1 761.8L669.6 759.2L670.4 735.8L670.8 738.4L672.5 740.7L675.1 742.7L678.5 744L682.3 744.6L686.1 744.3L689.6 743.3L692.4 741.6L694.2 739.4L694.9 736.9Z" fill="#e8a74e"/><path d="M694.8 738.2L694.1 740.7L692.3 742.9L689.5 744.6L686 745.6L682.2 745.9L678.4 745.3L675 744L672.4 742L670.8 739.7L670.3 737.1L671.1 711.6L671.6 714.1L673.3 716.5L676 718.4L679.4 719.7L683.3 720.3L687.2 720.1L690.7 719L693.6 717.3L695.4 715.1L696.1 712.6Z" fill="#b29540"/><path d="M696 714L695.4 716.5L693.5 718.7L690.7 720.4L687.1 721.4L683.2 721.7L679.4 721.1L675.9 719.8L673.2 717.8L671.6 715.5L671.1 712.9L671.9 686.9L672.4 689.4L674.1 691.7L676.9 693.7L680.4 695L684.3 695.5L688.3 695.3L691.9 694.3L694.8 692.6L696.7 690.4L697.4 687.9Z" fill="#c4c562"/><path d="M697.3 689.3L696.6 691.8L694.7 694L691.8 695.7L688.2 696.7L684.2 696.9L680.3 696.4L676.8 695.1L674.1 693.1L672.4 690.8L671.9 688.3L672.7 663.1L673.2 665.6L674.9 668L677.7 669.9L681.3 671.2L685.3 671.7L689.3 671.5L693 670.5L695.9 668.8L697.9 666.6L698.6 664.2Z" fill="#798948"/><path d="M698.5 665.6L697.8 668.1L695.9 670.2L692.9 671.9L689.3 672.9L685.2 673.2L681.2 672.6L677.7 671.3L674.9 669.4L673.2 667.1L672.7 664.6L673.5 637.7L674.1 640.2L675.8 642.5L678.6 644.4L682.3 645.7L686.4 646.2L690.5 646L694.2 645L697.2 643.3L699.1 641.2L699.8 638.7Z" fill="#82bd5c"/><path d="M699.8 640.2L699.1 642.7L697.1 644.8L694.1 646.5L690.4 647.5L686.3 647.7L682.2 647.2L678.6 645.9L675.8 644L674 641.7L673.5 639.2L674.6 604.1L675.2 606.5L676.9 608.8L679.9 610.7L683.6 612L687.8 612.5L692 612.3L695.8 611.3L698.8 609.6L700.8 607.5L701.5 605.1Z" fill="#2ca638"/><path d="M701.5 606.7L700.7 609.1L698.8 611.2L695.7 612.9L691.9 613.8L687.7 614.1L683.5 613.5L679.8 612.2L676.9 610.4L675.1 608.1L674.6 605.7L675.1 589.1L675.6 591.5L677.5 593.8L680.4 595.6L684.2 596.9L688.4 597.5L692.6 597.2L696.5 596.2L699.6 594.6L701.6 592.5L702.3 590.1Z" fill="#54a77b"/><path d="M692.5 784.1L691.8 786.6L690.1 788.8L687.4 790.6L684 791.6L680.3 791.9L676.6 791.3L673.4 789.9L670.8 788L669.3 785.6L668.8 783L675.1 589.1L675.6 591.5L677.5 593.8L680.4 595.6L684.2 596.9L688.4 597.5L692.6 597.2L696.5 596.2L699.6 594.6L701.6 592.5L702.3 590.1Z" fill="url(#sh)"/><path d="M698.8 595.1L696 596.4L692.8 597.2L689.3 597.5L685.7 597.2L682.4 596.4L679.4 595.2L677.2 593.5L675.7 591.6L675.1 589.6L675.5 587.6L676.7 585.7L678.8 584.1L681.5 582.9L684.7 582.2L688.1 581.9L691.6 582.2L695 582.9L697.9 584.1L700.1 585.7L701.6 587.6L702.3 589.6L702 591.6L700.8 593.5Z" fill="#5fc288"/>
<path d="M439.6 784.3L439.4 786.9L438.1 789.4L435.8 791.6L432.6 793.3L429 794.4L425.2 794.6L421.7 793.9L418.8 792.5L416.8 790.5L415.8 788.1L412 764.5L413 767L415 769L418 770.3L421.5 771L425.4 770.7L429.1 769.7L432.3 768L434.7 765.8L436.1 763.3L436.2 760.7Z" fill="#dd5850"/><path d="M436.4 762L436.2 764.5L434.9 767.1L432.5 769.3L429.3 771L425.6 772L421.7 772.2L418.2 771.6L415.2 770.2L413.2 768.2L412.2 765.8L408.7 743.8L409.6 746.2L411.7 748.2L414.7 749.6L418.3 750.2L422.2 750L426 749L429.3 747.3L431.7 745.1L433.1 742.6L433.3 740Z" fill="#e8a74e"/><path d="M433.5 741.3L433.3 743.9L431.9 746.4L429.4 748.6L426.2 750.3L422.4 751.3L418.5 751.5L414.9 750.9L411.9 749.5L409.8 747.5L408.9 745.1L405 721.2L406 723.6L408.1 725.6L411.1 727L414.8 727.6L418.8 727.4L422.6 726.4L425.9 724.7L428.4 722.5L429.8 720L430 717.4Z" fill="#b29540"/><path d="M430.2 718.8L430 721.3L428.6 723.8L426.1 726L422.8 727.7L419 728.7L415 728.9L411.3 728.3L408.3 726.9L406.2 725L405.2 722.6L401.3 698.2L402.2 700.6L404.4 702.5L407.5 703.9L411.2 704.5L415.2 704.3L419.1 703.3L422.5 701.6L425.1 699.5L426.5 697L426.7 694.4Z" fill="#c4c562"/><path d="M426.9 695.8L426.7 698.3L425.3 700.8L422.7 703L419.4 704.7L415.5 705.7L411.4 705.9L407.7 705.3L404.6 703.9L402.5 702L401.5 699.6L397.7 676.1L398.7 678.5L400.8 680.4L404 681.8L407.8 682.4L411.9 682.2L415.8 681.2L419.3 679.6L421.9 677.4L423.4 674.9L423.6 672.4Z" fill="#798948"/><path d="M423.8 673.8L423.6 676.3L422.1 678.8L419.5 681L416.1 682.6L412.1 683.6L408 683.8L404.2 683.2L401.1 681.9L398.9 679.9L397.9 677.6L393.9 652.5L394.9 654.9L397 656.8L400.2 658.2L404.1 658.8L408.3 658.6L412.3 657.6L415.8 655.9L418.5 653.8L420 651.3L420.2 648.8Z" fill="#82bd5c"/><path d="M420.4 650.3L420.2 652.8L418.7 655.3L416 657.4L412.5 659.1L408.5 660L404.3 660.2L400.5 659.6L397.3 658.3L395.1 656.4L394.1 654L390.3 630.8L391.3 633.1L393.5 635L396.8 636.3L400.7 636.9L404.9 636.7L409 635.8L412.6 634.1L415.3 632L416.8 629.6L417.1 627.1Z" fill="#2ca638"/><path d="M417.3 628.6L417.1 631.1L415.5 633.5L412.8 635.7L409.3 637.3L405.2 638.3L400.9 638.5L397 637.9L393.8 636.5L391.6 634.6L390.6 632.3L386.7 608.4L387.7 610.7L390 612.6L393.2 613.9L397.2 614.5L401.5 614.3L405.7 613.4L409.3 611.8L412.1 609.6L413.6 607.2L413.9 604.8Z" fill="#54a77b"/><path d="M439.6 784.3L439.4 786.9L438.1 789.4L435.8 791.6L432.6 793.3L429 794.4L425.2 794.6L421.7 793.9L418.8 792.5L416.8 790.5L415.8 788.1L386.7 608.4L387.7 610.7L390 612.6L393.2 613.9L397.2 614.5L401.5 614.3L405.7 613.4L409.3 611.8L412.1 609.6L413.6 607.2L413.9 604.8Z" fill="url(#sh)"/><path d="M408.5 612.2L405.4 613.5L401.9 614.3L398.3 614.6L394.9 614.3L391.8 613.5L389.3 612.2L387.6 610.6L386.8 608.7L386.8 606.6L387.9 604.6L389.7 602.7L392.3 601.1L395.4 599.8L398.8 599.1L402.3 598.8L405.7 599.1L408.8 599.8L411.2 601.1L413 602.7L413.9 604.6L413.8 606.6L412.9 608.6L411.1 610.6Z" fill="#5fc288"/>
<path d="M785.7 789.9L784.9 792.4L782.9 794.5L780.1 796.1L776.6 796.8L772.9 796.8L769.2 795.9L766 794.3L763.6 792.2L762.2 789.6L761.9 787L764.6 760.8L764.9 763.4L766.4 765.9L768.8 768.1L772.1 769.7L775.8 770.5L779.7 770.6L783.2 769.8L786.1 768.3L788.1 766.2L788.9 763.7Z" fill="#dd5850"/><path d="M788.8 765L787.9 767.5L785.9 769.6L783.1 771.1L779.5 771.9L775.7 771.8L772 770.9L768.7 769.4L766.2 767.2L764.8 764.7L764.5 762.1L767.1 737.6L767.3 740.2L768.8 742.7L771.3 744.9L774.7 746.4L778.5 747.3L782.4 747.3L786 746.6L788.9 745.1L790.9 743L791.8 740.5Z" fill="#e8a74e"/><path d="M791.6 741.8L790.8 744.3L788.8 746.4L785.8 747.9L782.2 748.6L778.3 748.6L774.5 747.7L771.2 746.2L768.7 744L767.2 741.5L766.9 738.9L769.7 712.2L770 714.8L771.5 717.2L774.1 719.4L777.5 720.9L781.4 721.8L785.3 721.8L789 721.1L792 719.6L794 717.5L794.9 715Z" fill="#b29540"/><path d="M794.7 716.4L793.9 718.8L791.8 720.9L788.8 722.4L785.2 723.2L781.2 723.1L777.3 722.3L773.9 720.7L771.4 718.6L769.9 716.1L769.6 713.5L772.4 686.2L772.7 688.7L774.3 691.2L776.9 693.3L780.4 694.9L784.3 695.7L788.4 695.7L792.1 695L795.1 693.5L797.2 691.4L798.1 689Z" fill="#c4c562"/><path d="M797.9 690.4L797 692.9L795 694.9L791.9 696.4L788.2 697.2L784.1 697.1L780.2 696.3L776.7 694.7L774.1 692.6L772.6 690.1L772.3 687.6L775 661.1L775.3 663.6L776.9 666.1L779.6 668.2L783.1 669.7L787.2 670.6L791.3 670.6L795.1 669.8L798.2 668.4L800.3 666.3L801.2 663.9Z" fill="#798948"/><path d="M801 665.4L800.1 667.8L798 669.8L794.9 671.3L791.1 672.1L787 672L783 671.2L779.4 669.6L776.8 667.5L775.2 665.1L774.9 662.6L777.8 634.3L778.1 636.8L779.8 639.2L782.5 641.2L786.1 642.8L790.2 643.6L794.4 643.6L798.3 642.9L801.4 641.4L803.6 639.4L804.5 637Z" fill="#82bd5c"/><path d="M804.3 638.6L803.4 640.9L801.3 643L798.1 644.4L794.2 645.2L790 645.1L785.9 644.3L782.3 642.8L779.6 640.7L778 638.3L777.7 635.8L781.6 597.7L782 600.2L783.6 602.5L786.5 604.6L790.2 606.1L794.4 606.9L798.7 607L802.6 606.2L805.9 604.8L808 602.8L809 600.5Z" fill="#2ca638"/><path d="M808.8 602L807.8 604.4L805.7 606.4L802.4 607.8L798.5 608.6L794.2 608.5L790 607.7L786.3 606.2L783.5 604.1L781.8 601.8L781.4 599.3L783.5 579.8L783.8 582.2L785.5 584.6L788.4 586.6L792.1 588.1L796.4 588.9L800.8 588.9L804.8 588.2L808 586.8L810.2 584.8L811.2 582.5Z" fill="#54a77b"/><path d="M785.7 789.9L784.9 792.4L782.9 794.5L780.1 796.1L776.6 796.8L772.9 796.8L769.2 795.9L766 794.3L763.6 792.2L762.2 789.6L761.9 787L783.5 579.8L783.8 582.2L785.5 584.6L788.4 586.6L792.1 588.1L796.4 588.9L800.8 588.9L804.8 588.2L808 586.8L810.2 584.8L811.2 582.5Z" fill="url(#sh)"/><path d="M808.2 586.7L805.6 587.9L802.4 588.7L798.9 589L795.2 588.7L791.7 587.9L788.6 586.7L786.1 585.1L784.4 583.2L783.5 581.1L783.6 579.1L784.6 577.2L786.5 575.6L789.1 574.4L792.3 573.6L795.7 573.4L799.3 573.6L802.8 574.4L805.9 575.6L808.4 577.2L810.2 579.1L811.1 581.1L811 583.1L810.1 585Z" fill="#5fc288"/>
<path d="M531.8 790.1L531.5 792.7L530 795.2L527.5 797.3L524.3 798.8L520.6 799.6L516.8 799.5L513.4 798.6L510.6 797L508.7 794.8L508 792.2L505.8 768.3L506.6 770.8L508.5 773L511.3 774.6L514.8 775.5L518.6 775.6L522.4 774.9L525.7 773.4L528.2 771.3L529.7 768.8L530.1 766.2Z" fill="#dd5850"/><path d="M530.2 767.4L529.8 770.1L528.3 772.5L525.8 774.6L522.5 776.1L518.7 776.9L514.9 776.8L511.4 775.9L508.6 774.3L506.7 772.1L505.9 769.6L503.9 747.3L504.7 749.8L506.6 752L509.5 753.6L513 754.5L516.9 754.6L520.7 753.9L524.1 752.4L526.6 750.3L528.2 747.8L528.5 745.2Z" fill="#e8a74e"/><path d="M528.6 746.5L528.3 749.1L526.7 751.6L524.2 753.7L520.8 755.2L517 755.9L513.1 755.8L509.6 754.9L506.7 753.3L504.8 751.1L504 748.6L501.8 724.3L502.6 726.8L504.5 729L507.4 730.6L511.1 731.5L515 731.6L518.9 730.8L522.3 729.4L524.9 727.3L526.5 724.8L526.9 722.2Z" fill="#b29540"/><path d="M527 723.6L526.6 726.2L525 728.6L522.4 730.7L519 732.2L515.1 732.9L511.2 732.8L507.6 732L504.6 730.3L502.7 728.2L501.9 725.7L499.6 700.9L500.4 703.4L502.4 705.6L505.4 707.2L509.1 708L513.1 708.1L517 707.4L520.5 705.9L523.2 703.9L524.8 701.4L525.2 698.8Z" fill="#c4c562"/><path d="M525.3 700.2L524.9 702.8L523.3 705.2L520.6 707.3L517.1 708.8L513.2 709.5L509.2 709.4L505.5 708.6L502.5 707L500.6 704.8L499.8 702.3L497.6 678.5L498.4 680.9L500.4 683.1L503.4 684.7L507.2 685.5L511.2 685.6L515.2 684.9L518.8 683.4L521.5 681.4L523.1 679L523.5 676.4Z" fill="#798948"/><path d="M523.6 677.8L523.2 680.4L521.6 682.8L518.9 684.9L515.4 686.3L511.4 687L507.3 687L503.5 686.1L500.5 684.5L498.5 682.4L497.7 679.9L495.4 654.5L496.2 656.9L498.2 659.1L501.3 660.6L505.1 661.5L509.3 661.6L513.3 660.9L516.9 659.4L519.7 657.4L521.4 655L521.8 652.4Z" fill="#82bd5c"/><path d="M521.9 653.9L521.5 656.5L519.8 658.9L517.1 660.9L513.5 662.3L509.4 663.1L505.2 663L501.4 662.1L498.4 660.5L496.3 658.4L495.5 656L492.9 627.8L493.8 630.2L495.8 632.3L499 633.9L502.8 634.7L507.1 634.8L511.2 634.1L514.9 632.7L517.7 630.7L519.4 628.3L519.8 625.8Z" fill="#2ca638"/><path d="M519.9 627.3L519.5 629.8L517.8 632.2L515 634.2L511.3 635.6L507.2 636.4L503 636.3L499.1 635.4L496 633.9L493.9 631.8L493.1 629.3L490.3 599.1L491.2 601.5L493.3 603.5L496.4 605.1L500.4 605.9L504.7 606L508.9 605.3L512.7 603.9L515.6 601.9L517.3 599.5L517.7 597Z" fill="#54a77b"/><path d="M531.8 790.1L531.5 792.7L530 795.2L527.5 797.3L524.3 798.8L520.6 799.6L516.8 799.5L513.4 798.6L510.6 797L508.7 794.8L508 792.2L490.3 599.1L491.2 601.5L493.3 603.5L496.4 605.1L500.4 605.9L504.7 606L508.9 605.3L512.7 603.9L515.6 601.9L517.3 599.5L517.7 597Z" fill="url(#sh)"/><path d="M513 603.7L510 605L506.5 605.8L502.9 606L499.4 605.8L496.2 605L493.5 603.7L491.6 602L490.5 600.1L490.4 598.1L491.1 596L492.8 594.1L495.2 592.5L498.2 591.3L501.6 590.5L505.1 590.2L508.6 590.5L511.8 591.2L514.4 592.5L516.4 594.1L517.5 596L517.7 598L517 600.1L515.4 602Z" fill="#5fc288"/>
<path d="M879.8 795.8L878.8 798.2L876.7 800.2L873.7 801.5L870.1 802L866.3 801.6L862.6 800.5L859.5 798.7L857.2 796.3L855.9 793.7L855.9 791.1L859.9 768.1L860 770.7L861.3 773.3L863.7 775.6L866.9 777.4L870.6 778.6L874.5 778.9L878.1 778.4L881.2 777.1L883.3 775.2L884.4 772.8Z" fill="#dd5850"/><path d="M884.1 774L883.1 776.4L880.9 778.4L877.9 779.7L874.2 780.2L870.4 779.8L866.6 778.7L863.5 776.9L861.1 774.5L859.8 772L859.7 769.3L863.5 747.9L863.6 750.5L864.9 753.1L867.3 755.4L870.6 757.2L874.4 758.4L878.3 758.7L882 758.2L885.1 756.9L887.3 755L888.3 752.6Z" fill="#e8a74e"/><path d="M888.1 753.9L887 756.3L884.8 758.2L881.8 759.5L878.1 760L874.1 759.7L870.3 758.5L867.1 756.7L864.7 754.4L863.4 751.8L863.3 749.2L867.4 725.9L867.5 728.5L868.9 731.1L871.3 733.4L874.6 735.2L878.5 736.3L882.5 736.6L886.2 736.1L889.4 734.9L891.6 732.9L892.6 730.6Z" fill="#b29540"/><path d="M892.4 731.9L891.3 734.3L889.1 736.2L886 737.5L882.2 738L878.2 737.6L874.4 736.5L871.1 734.7L868.6 732.4L867.3 729.8L867.1 727.2L871.3 703.5L871.5 706.1L872.9 708.6L875.4 710.9L878.7 712.7L882.7 713.8L886.7 714.2L890.6 713.7L893.7 712.4L896 710.5L897 708.1Z" fill="#c4c562"/><path d="M896.8 709.5L895.7 711.9L893.5 713.8L890.3 715L886.5 715.5L882.4 715.2L878.5 714.1L875.1 712.3L872.6 710L871.2 707.4L871.1 704.9L875.1 682L875.3 684.6L876.7 687.1L879.3 689.4L882.7 691.2L886.7 692.3L890.8 692.6L894.7 692.1L897.9 690.9L900.2 689L901.3 686.6Z" fill="#798948"/><path d="M901 688L899.9 690.4L897.7 692.3L894.4 693.5L890.6 694L886.4 693.7L882.4 692.6L879 690.8L876.5 688.5L875 686L874.9 683.4L879.2 659.1L879.4 661.7L880.8 664.2L883.4 666.4L886.9 668.2L891 669.3L895.2 669.6L899.1 669.1L902.4 667.9L904.7 666L905.7 663.7Z" fill="#82bd5c"/><path d="M905.5 665.2L904.4 667.5L902.1 669.4L898.8 670.6L894.9 671.1L890.7 670.8L886.6 669.7L883.1 667.9L880.5 665.6L879.1 663.1L878.9 660.6L884.1 631.5L884.3 634L885.7 636.5L888.4 638.7L892 640.4L896.1 641.5L900.4 641.9L904.4 641.4L907.8 640.1L910.1 638.3L911.2 636Z" fill="#2ca638"/><path d="M910.9 637.5L909.8 639.8L907.5 641.7L904.2 642.9L900.1 643.4L895.9 643.1L891.7 642L888.1 640.2L885.5 638L884 635.5L883.8 633L887.9 610L888.1 612.5L889.6 614.9L892.3 617.2L895.9 618.9L900.2 620L904.5 620.3L908.6 619.8L912 618.6L914.3 616.7L915.4 614.5Z" fill="#54a77b"/><path d="M879.8 795.8L878.8 798.2L876.7 800.2L873.7 801.5L870.1 802L866.3 801.6L862.6 800.5L859.5 798.7L857.2 796.3L855.9 793.7L855.9 791.1L887.9 610L888.1 612.5L889.6 614.9L892.3 617.2L895.9 618.9L900.2 620L904.5 620.3L908.6 619.8L912 618.6L914.3 616.7L915.4 614.5Z" fill="url(#sh)"/><path d="M913 617.9L910.6 619.2L907.6 620L904.1 620.3L900.5 620L896.9 619.2L893.7 617.9L891 616.3L889.1 614.3L888 612.2L887.8 610.2L888.6 608.2L890.3 606.6L892.7 605.4L895.7 604.6L899.1 604.3L902.7 604.6L906.2 605.3L909.4 606.6L912.1 608.2L914.1 610.1L915.2 612.2L915.4 614.3L914.7 616.2Z" fill="#5fc288"/>
<path d="M624.9 796L624.4 798.7L622.7 801.1L620.1 803L616.8 804.3L613 804.7L609.3 804.4L605.9 803.2L603.3 801.3L601.6 798.9L601 796.3L600.5 774L601.1 776.6L602.9 778.9L605.6 780.8L609 782L612.8 782.3L616.6 781.9L620 780.6L622.7 778.7L624.3 776.3L624.9 773.7Z" fill="#dd5850"/><path d="M624.9 774.9L624.3 777.6L622.7 780L620 781.9L616.6 783.1L612.8 783.6L609 783.2L605.6 782L602.9 780.2L601.2 777.8L600.6 775.2L600.2 754.4L600.8 757L602.5 759.4L605.3 761.2L608.7 762.4L612.6 762.8L616.4 762.3L619.9 761.1L622.6 759.1L624.3 756.8L624.9 754.1Z" fill="#e8a74e"/><path d="M624.9 755.4L624.3 758.1L622.6 760.4L619.9 762.4L616.4 763.6L612.6 764.1L608.8 763.7L605.3 762.5L602.5 760.7L600.8 758.3L600.2 755.7L599.7 733.1L600.3 735.7L602.1 738L604.9 739.9L608.5 741L612.4 741.4L616.3 740.9L619.8 739.7L622.5 737.8L624.3 735.4L624.8 732.8Z" fill="#b29540"/><path d="M624.8 734.2L624.3 736.8L622.5 739.1L619.8 741L616.3 742.3L612.4 742.7L608.5 742.4L604.9 741.2L602.2 739.4L600.4 737L599.8 734.4L599.3 711.4L599.9 714L601.7 716.3L604.6 718.1L608.2 719.3L612.1 719.7L616.1 719.2L619.7 718L622.5 716.1L624.2 713.7L624.8 711.1Z" fill="#c4c562"/><path d="M624.8 712.5L624.2 715.1L622.5 717.5L619.7 719.4L616.1 720.6L612.2 721.1L608.2 720.7L604.6 719.5L601.8 717.7L599.9 715.4L599.3 712.8L598.9 690.7L599.5 693.2L601.4 695.5L604.2 697.4L607.9 698.5L611.9 698.9L616 698.4L619.6 697.2L622.4 695.3L624.2 693L624.8 690.4Z" fill="#798948"/><path d="M624.8 691.8L624.2 694.4L622.4 696.7L619.6 698.6L616 699.8L611.9 700.3L607.9 699.9L604.3 698.8L601.4 696.9L599.5 694.6L598.9 692.1L598.5 668.5L599.1 671.1L601 673.4L603.9 675.2L607.6 676.3L611.7 676.7L615.8 676.2L619.5 675L622.4 673.2L624.2 670.8L624.8 668.3Z" fill="#82bd5c"/><path d="M624.8 669.7L624.2 672.3L622.4 674.6L619.5 676.5L615.8 677.7L611.7 678.2L607.6 677.8L603.9 676.7L601 674.8L599.1 672.6L598.5 670L598 643.8L598.6 646.3L600.5 648.6L603.5 650.4L607.3 651.5L611.4 651.9L615.6 651.4L619.3 650.2L622.3 648.4L624.1 646L624.7 643.5Z" fill="#2ca638"/><path d="M624.7 645L624.1 647.6L622.3 649.9L619.3 651.7L615.6 652.9L611.4 653.4L607.3 653L603.5 651.9L600.5 650.1L598.6 647.8L598 645.3L597.7 630.3L598.4 632.8L600.3 635.1L603.3 636.9L607.1 638L611.3 638.3L615.5 637.9L619.3 636.7L622.2 634.9L624.1 632.6L624.7 630Z" fill="#54a77b"/><path d="M624.9 796L624.4 798.7L622.7 801.1L620.1 803L616.8 804.3L613 804.7L609.3 804.4L605.9 803.2L603.3 801.3L601.6 798.9L601 796.3L597.7 630.3L598.4 632.8L600.3 635.1L603.3 636.9L607.1 638L611.3 638.3L615.5 637.9L619.3 636.7L622.2 634.9L624.1 632.6L624.7 630Z" fill="url(#sh)"/><path d="M620.7 635.9L617.9 637.2L614.6 638.1L611.1 638.3L607.6 638.1L604.3 637.2L601.5 635.9L599.4 634.3L598.1 632.3L597.7 630.2L598.2 628.1L599.6 626.2L601.8 624.5L604.6 623.2L607.9 622.4L611.3 622.1L614.8 622.4L618 623.2L620.8 624.5L622.9 626.1L624.3 628.1L624.7 630.2L624.3 632.3L622.9 634.2Z" fill="#5fc288"/>
<path d="M368.9 796.3L368.9 798.9L367.7 801.5L365.4 803.9L362.2 805.8L358.6 807.1L354.7 807.5L351.1 807.1L348 805.8L345.9 803.9L344.8 801.5L339.8 778.9L340.9 781.2L343.1 783.1L346.2 784.4L349.9 784.8L353.8 784.4L357.6 783.1L360.8 781.2L363.1 778.8L364.3 776.2L364.4 773.6Z" fill="#dd5850"/><path d="M364.6 774.9L364.6 777.5L363.3 780.1L361 782.5L357.8 784.4L354.1 785.6L350.2 786L346.5 785.6L343.4 784.4L341.2 782.5L340.1 780.1L333.4 749.7L334.5 752.1L336.8 754L340 755.2L343.7 755.6L347.7 755.2L351.6 754L354.8 752.1L357.2 749.7L358.5 747.1L358.6 744.5Z" fill="#e8a74e"/><path d="M358.8 745.8L358.8 748.4L357.5 751L355.1 753.4L351.8 755.3L348 756.5L344 756.9L340.2 756.5L337.1 755.3L334.8 753.4L333.7 751L329.2 730.3L330.3 732.6L332.6 734.5L335.8 735.7L339.6 736.1L343.7 735.7L347.5 734.5L350.9 732.6L353.3 730.2L354.6 727.6L354.7 725.1Z" fill="#b29540"/><path d="M355 726.4L354.9 729L353.6 731.6L351.1 734L347.8 735.8L343.9 737.1L339.9 737.5L336.1 737.1L332.9 735.9L330.6 734L329.5 731.6L325.9 715.1L327 717.5L329.3 719.4L332.5 720.6L336.4 721L340.5 720.6L344.4 719.4L347.8 717.5L350.3 715.1L351.6 712.5L351.7 710Z" fill="#c4c562"/><path d="M352 711.3L351.9 713.9L350.6 716.5L348.1 718.9L344.7 720.7L340.8 722L336.7 722.4L332.8 722L329.6 720.8L327.3 718.9L326.2 716.5L320.7 691.4L321.8 693.7L324.1 695.6L327.4 696.8L331.3 697.2L335.5 696.8L339.5 695.6L343 693.7L345.5 691.4L346.9 688.8L347 686.2Z" fill="#798948"/><path d="M347.3 687.7L347.2 690.2L345.8 692.8L343.3 695.1L339.8 697L335.8 698.2L331.6 698.6L327.7 698.2L324.4 697L322.1 695.2L321 692.8L315.5 667.7L316.6 670L319 671.8L322.3 673L326.3 673.4L330.5 673L334.6 671.8L338.1 670L340.7 667.6L342.1 665.1L342.3 662.6Z" fill="#82bd5c"/><path d="M342.6 664L342.4 666.6L341 669.1L338.4 671.4L334.9 673.3L330.9 674.5L326.6 674.9L322.6 674.5L319.3 673.3L316.9 671.5L315.8 669.1L310.8 646.1L311.9 648.4L314.3 650.2L317.7 651.4L321.7 651.8L326 651.4L330.2 650.2L333.8 648.4L336.4 646.1L337.8 643.5L338 641Z" fill="#2ca638"/><path d="M338.3 642.5L338.1 645.1L336.7 647.6L334.1 649.9L330.5 651.7L326.4 652.9L322 653.3L318 652.9L314.6 651.8L312.2 649.9L311.1 647.6L305.6 622.4L306.7 624.6L309.1 626.5L312.5 627.6L316.7 628L321.1 627.6L325.3 626.4L328.9 624.6L331.6 622.3L333.1 619.8L333.2 617.3Z" fill="#54a77b"/><path d="M368.9 796.3L368.9 798.9L367.7 801.5L365.4 803.9L362.2 805.8L358.6 807.1L354.7 807.5L351.1 807.1L348 805.8L345.9 803.9L344.8 801.5L305.6 622.4L306.7 624.6L309.1 626.5L312.5 627.6L316.7 628L321.1 627.6L325.3 626.4L328.9 624.6L331.6 622.3L333.1 619.8L333.2 617.3Z" fill="url(#sh)"/><path d="M327.2 625.6L323.9 626.9L320.3 627.7L316.7 628L313.2 627.7L310.2 626.9L307.8 625.6L306.2 623.9L305.5 622L305.8 619.9L307 617.8L309 615.8L311.8 614.2L315 612.9L318.6 612.1L322.2 611.8L325.6 612.1L328.6 612.9L331 614.1L332.6 615.8L333.3 617.7L333.1 619.8L332 621.9L329.9 623.9Z" fill="#5fc288"/>
<path d="M718.9 802.1L718.2 804.7L716.3 807L713.6 808.7L710.1 809.7L706.3 809.8L702.6 809.2L699.3 807.7L696.8 805.6L695.3 803.1L694.9 800.4L695.7 784.1L696.1 786.8L697.7 789.3L700.3 791.4L703.6 792.8L707.4 793.5L711.2 793.4L714.7 792.4L717.5 790.6L719.4 788.4L720.1 785.8Z" fill="#dd5850"/><path d="M720 787L719.3 789.6L717.4 791.9L714.6 793.6L711.1 794.6L707.3 794.8L703.5 794.1L700.2 792.6L697.6 790.5L696.1 788L695.7 785.4L696.9 762.7L697.3 765.3L698.9 767.8L701.5 769.9L704.9 771.4L708.7 772L712.6 771.9L716.1 770.9L719 769.2L720.9 766.9L721.6 764.3Z" fill="#e8a74e"/><path d="M721.5 765.6L720.8 768.2L718.9 770.5L716 772.2L712.5 773.2L708.6 773.3L704.8 772.6L701.4 771.2L698.8 769.1L697.2 766.6L696.8 764L698 741.8L698.4 744.4L700 746.9L702.7 749L706.1 750.4L710 751.1L714 750.9L717.6 750L720.5 748.2L722.4 746L723.1 743.4Z" fill="#b29540"/><path d="M723 744.7L722.3 747.3L720.4 749.6L717.5 751.3L713.9 752.3L709.9 752.4L706 751.8L702.6 750.3L699.9 748.2L698.3 745.8L697.9 743.1L699.4 714.9L699.8 717.5L701.5 720L704.2 722L707.7 723.5L711.7 724.1L715.7 724L719.4 723L722.4 721.3L724.3 719.1L725.1 716.5Z" fill="#c4c562"/><path d="M725 717.9L724.2 720.4L722.3 722.7L719.3 724.4L715.6 725.4L711.6 725.5L707.6 724.8L704.1 723.4L701.4 721.4L699.8 718.9L699.3 716.3L700.4 695.6L700.9 698.2L702.5 700.6L705.3 702.7L708.9 704.1L712.9 704.8L717 704.6L720.7 703.6L723.7 702L725.7 699.7L726.5 697.2Z" fill="#798948"/><path d="M726.4 698.6L725.6 701.1L723.6 703.4L720.6 705.1L716.9 706L712.8 706.2L708.8 705.5L705.2 704.1L702.5 702L700.8 699.6L700.3 697L701.1 681.9L701.6 684.5L703.3 686.9L706.1 689L709.7 690.4L713.8 691.1L717.9 690.9L721.6 689.9L724.7 688.3L726.7 686L727.4 683.5Z" fill="#82bd5c"/><path d="M727.3 685L726.6 687.5L724.6 689.7L721.5 691.4L717.8 692.4L713.7 692.5L709.6 691.8L706 690.4L703.2 688.4L701.5 685.9L701.1 683.3L702.4 657.8L702.9 660.4L704.6 662.8L707.5 664.8L711.1 666.3L715.3 666.9L719.5 666.8L723.3 665.8L726.4 664.1L728.4 661.9L729.2 659.4Z" fill="#2ca638"/><path d="M729.1 660.9L728.3 663.4L726.3 665.6L723.2 667.3L719.4 668.3L715.2 668.4L711 667.8L707.4 666.3L704.5 664.3L702.8 661.9L702.3 659.3L704 627.5L704.5 630.1L706.3 632.5L709.2 634.5L712.9 635.9L717.2 636.5L721.4 636.4L725.3 635.4L728.5 633.8L730.6 631.6L731.3 629.1Z" fill="#54a77b"/><path d="M718.9 802.1L718.2 804.7L716.3 807L713.6 808.7L710.1 809.7L706.3 809.8L702.6 809.2L699.3 807.7L696.8 805.6L695.3 803.1L694.9 800.4L704 627.5L704.5 630.1L706.3 632.5L709.2 634.5L712.9 635.9L717.2 636.5L721.4 636.4L725.3 635.4L728.5 633.8L730.6 631.6L731.3 629.1Z" fill="url(#sh)"/><path d="M728 634.1L725.3 635.4L722 636.3L718.5 636.5L714.9 636.3L711.5 635.4L708.6 634.1L706.2 632.4L704.7 630.4L704 628.3L704.3 626.2L705.5 624.3L707.5 622.6L710.2 621.3L713.4 620.5L716.9 620.2L720.4 620.5L723.7 621.3L726.7 622.6L729 624.2L730.6 626.2L731.3 628.3L731.1 630.4L730 632.4Z" fill="#5fc288"/>
<path d="M461.9 802.2L461.7 804.9L460.3 807.5L457.9 809.8L454.7 811.5L451 812.5L447.1 812.6L443.6 811.9L440.7 810.4L438.6 808.3L437.7 805.8L434.5 783.8L435.4 786.3L437.4 788.4L440.4 789.9L444 790.6L447.9 790.4L451.7 789.5L455 787.7L457.4 785.5L458.8 782.9L459 780.2Z" fill="#dd5850"/><path d="M459.2 781.4L459 784.1L457.6 786.7L455.1 789L451.9 790.7L448.1 791.7L444.2 791.8L440.6 791.1L437.6 789.7L435.6 787.6L434.6 785L431.6 764.6L432.6 767.1L434.7 769.2L437.7 770.7L441.3 771.4L445.3 771.2L449.1 770.2L452.4 768.5L454.9 766.3L456.4 763.7L456.6 761Z" fill="#e8a74e"/><path d="M456.8 762.3L456.5 765L455.1 767.6L452.6 769.8L449.3 771.5L445.5 772.5L441.5 772.7L437.9 772L434.8 770.5L432.8 768.4L431.8 765.9L428.6 743.6L429.5 746.1L431.6 748.2L434.7 749.7L438.4 750.4L442.4 750.2L446.3 749.3L449.7 747.6L452.2 745.3L453.7 742.7L453.9 740.1Z" fill="#b29540"/><path d="M454.1 741.4L453.8 744.1L452.4 746.6L449.8 748.9L446.5 750.6L442.6 751.6L438.6 751.7L434.9 751L431.8 749.6L429.7 747.5L428.7 745L425.4 722.4L426.4 724.8L428.5 726.9L431.6 728.4L435.4 729.1L439.5 728.9L443.4 728L446.9 726.3L449.5 724L450.9 721.4L451.2 718.8Z" fill="#c4c562"/><path d="M451.4 720.2L451.1 722.8L449.6 725.4L447 727.6L443.6 729.3L439.7 730.3L435.6 730.4L431.8 729.8L428.7 728.3L426.6 726.2L425.6 723.7L422.4 702L423.4 704.5L425.5 706.5L428.7 708L432.5 708.7L436.7 708.5L440.7 707.6L444.2 705.9L446.8 703.6L448.3 701.1L448.6 698.5Z" fill="#798948"/><path d="M448.8 699.9L448.5 702.5L447 705.1L444.4 707.3L440.9 709L436.9 709.9L432.7 710.1L428.9 709.4L425.8 708L423.6 705.9L422.6 703.4L419.2 680.3L420.2 682.7L422.4 684.8L425.6 686.2L429.5 686.9L433.7 686.8L437.8 685.8L441.3 684.1L444 681.9L445.5 679.4L445.8 676.8Z" fill="#82bd5c"/><path d="M446 678.2L445.7 680.8L444.2 683.4L441.5 685.6L437.9 687.3L433.9 688.2L429.7 688.4L425.8 687.7L422.6 686.3L420.4 684.2L419.4 681.7L415.7 656L416.6 658.4L418.8 660.5L422.1 661.9L426.1 662.6L430.3 662.4L434.5 661.5L438.1 659.8L440.8 657.6L442.4 655.1L442.7 652.5Z" fill="#2ca638"/><path d="M442.9 654L442.6 656.6L441 659.1L438.3 661.3L434.7 663L430.5 663.9L426.3 664.1L422.3 663.4L419.1 662L416.8 659.9L415.9 657.5L411.7 629.1L412.7 631.5L414.9 633.5L418.2 634.9L422.3 635.6L426.6 635.4L430.8 634.5L434.5 632.9L437.3 630.7L439 628.2L439.3 625.6Z" fill="#54a77b"/><path d="M461.9 802.2L461.7 804.9L460.3 807.5L457.9 809.8L454.7 811.5L451 812.5L447.1 812.6L443.6 811.9L440.7 810.4L438.6 808.3L437.7 805.8L411.7 629.1L412.7 631.5L414.9 633.5L418.2 634.9L422.3 635.6L426.6 635.4L430.8 634.5L434.5 632.9L437.3 630.7L439 628.2L439.3 625.6Z" fill="url(#sh)"/><path d="M434 633.2L430.8 634.5L427.3 635.3L423.7 635.6L420.2 635.3L417 634.5L414.5 633.2L412.7 631.5L411.8 629.5L411.8 627.4L412.8 625.2L414.6 623.3L417.1 621.6L420.3 620.3L423.7 619.5L427.3 619.2L430.8 619.5L433.9 620.3L436.4 621.6L438.2 623.3L439.2 625.2L439.2 627.3L438.3 629.5L436.5 631.5Z" fill="#5fc288"/>
<path d="M813.8 808.2L812.9 810.7L810.9 812.8L807.9 814.3L804.4 815L800.5 814.9L796.8 813.9L793.6 812.2L791.2 809.9L789.8 807.3L789.6 804.6L792.9 778.6L793.1 781.3L794.5 783.9L797 786.2L800.3 787.9L804.1 788.9L808 789.1L811.6 788.4L814.6 786.9L816.7 784.8L817.6 782.2Z" fill="#dd5850"/><path d="M817.4 783.5L816.5 786L814.4 788.1L811.5 789.6L807.8 790.3L803.9 790.2L800.1 789.2L796.8 787.5L794.4 785.2L793 782.6L792.8 779.9L795.8 755.7L796.1 758.4L797.5 761L800 763.2L803.4 765L807.2 765.9L811.2 766.1L814.9 765.4L818 763.9L820 761.8L821 759.3Z" fill="#e8a74e"/><path d="M820.8 760.6L819.9 763.1L817.8 765.2L814.7 766.7L811 767.4L807.1 767.2L803.2 766.3L799.8 764.6L797.3 762.3L795.9 759.7L795.7 757L799 730.5L799.3 733.2L800.7 735.7L803.3 738L806.7 739.7L810.7 740.7L814.7 740.8L818.5 740.1L821.6 738.7L823.7 736.6L824.7 734.1Z" fill="#b29540"/><path d="M824.5 735.4L823.5 737.9L821.4 740L818.3 741.5L814.5 742.2L810.5 742L806.6 741.1L803.1 739.4L800.6 737.1L799.1 734.5L798.9 731.9L802.3 704.8L802.6 707.4L804.1 710L806.7 712.2L810.2 713.9L814.2 714.9L818.3 715L822.2 714.3L825.3 712.9L827.5 710.8L828.5 708.3Z" fill="#c4c562"/><path d="M828.2 709.7L827.3 712.2L825.1 714.3L822 715.7L818.1 716.4L814 716.3L810 715.3L806.5 713.6L803.9 711.4L802.4 708.8L802.1 706.2L805.5 680L805.7 682.6L807.3 685.1L810 687.4L813.5 689L817.6 690L821.8 690.1L825.7 689.5L828.9 688L831.1 685.9L832.1 683.5Z" fill="#798948"/><path d="M831.9 684.9L830.9 687.4L828.7 689.5L825.5 690.9L821.6 691.6L817.4 691.5L813.3 690.5L809.8 688.8L807.1 686.6L805.5 684.1L805.3 681.4L808.8 653.4L809.1 656L810.7 658.5L813.4 660.7L817.1 662.4L821.3 663.3L825.5 663.5L829.5 662.8L832.8 661.4L835 659.3L836 656.9Z" fill="#82bd5c"/><path d="M835.8 658.4L834.8 660.8L832.6 662.9L829.3 664.3L825.3 665L821 664.9L816.9 663.9L813.2 662.2L810.5 660L808.9 657.5L808.6 654.9L812.6 623.8L812.9 626.4L814.5 628.9L817.3 631L821 632.7L825.3 633.6L829.7 633.8L833.7 633.1L837.1 631.7L839.3 629.6L840.3 627.2Z" fill="#2ca638"/><path d="M840.1 628.8L839.1 631.2L836.8 633.2L833.5 634.7L829.5 635.3L825.1 635.2L820.8 634.3L817.1 632.6L814.3 630.4L812.7 627.9L812.4 625.4L815.1 603.9L815.4 606.4L817.1 608.9L819.9 611.1L823.7 612.7L828 613.6L832.5 613.8L836.6 613.1L839.9 611.7L842.2 609.7L843.2 607.3Z" fill="#54a77b"/><path d="M813.8 808.2L812.9 810.7L810.9 812.8L807.9 814.3L804.4 815L800.5 814.9L796.8 813.9L793.6 812.2L791.2 809.9L789.8 807.3L789.6 804.6L815.1 603.9L815.4 606.4L817.1 608.9L819.9 611.1L823.7 612.7L828 613.6L832.5 613.8L836.6 613.1L839.9 611.7L842.2 609.7L843.2 607.3Z" fill="url(#sh)"/><path d="M840.4 611.4L837.8 612.7L834.6 613.5L831 613.8L827.3 613.5L823.7 612.7L820.5 611.4L817.9 609.7L816.1 607.7L815.2 605.6L815.2 603.5L816.2 601.5L818 599.9L820.6 598.6L823.8 597.8L827.3 597.5L830.9 597.8L834.5 598.6L837.6 599.9L840.3 601.5L842.1 603.5L843.1 605.6L843.2 607.7L842.2 609.7Z" fill="#5fc288"/>
<path d="M555.7 808.3L555.3 811L553.8 813.5L551.2 815.7L547.9 817.1L544.2 817.8L540.4 817.7L536.9 816.7L534.1 815L532.2 812.6L531.5 810L529.7 786.2L530.5 788.8L532.4 791.1L535.2 792.9L538.8 793.9L542.6 794L546.5 793.3L549.8 791.8L552.4 789.7L554 787.2L554.4 784.5Z" fill="#dd5850"/><path d="M554.5 785.7L554.1 788.4L552.5 791L549.9 793.1L546.5 794.6L542.7 795.3L538.8 795.1L535.3 794.1L532.5 792.4L530.6 790.1L529.8 787.5L528.2 765.3L528.9 767.9L530.8 770.2L533.7 771.9L537.3 772.9L541.3 773.1L545.2 772.4L548.6 770.9L551.2 768.8L552.8 766.2L553.3 763.5Z" fill="#e8a74e"/><path d="M553.3 764.8L552.9 767.5L551.3 770.1L548.7 772.2L545.2 773.7L541.4 774.4L537.4 774.2L533.8 773.2L530.9 771.5L529 769.2L528.3 766.6L526.5 742.4L527.2 745L529.2 747.3L532.1 749L535.8 750L539.8 750.2L543.7 749.5L547.2 748L549.9 745.9L551.6 743.4L552 740.7Z" fill="#b29540"/><path d="M552.1 742L551.6 744.7L550 747.2L547.3 749.3L543.8 750.8L539.9 751.5L535.9 751.4L532.2 750.4L529.3 748.7L527.3 746.4L526.6 743.8L524.7 719.1L525.5 721.7L527.5 724L530.5 725.7L534.2 726.6L538.3 726.8L542.3 726.1L545.9 724.6L548.6 722.6L550.3 720L550.7 717.4Z" fill="#c4c562"/><path d="M550.8 718.8L550.3 721.4L548.7 723.9L545.9 726L542.4 727.5L538.4 728.2L534.3 728L530.6 727.1L527.6 725.4L525.6 723.1L524.8 720.5L523.1 696.7L523.9 699.3L525.9 701.6L528.9 703.3L532.7 704.2L536.8 704.4L540.9 703.7L544.5 702.2L547.3 700.2L549 697.7L549.5 695Z" fill="#798948"/><path d="M549.5 696.5L549.1 699.1L547.4 701.6L544.6 703.7L541 705.1L536.9 705.8L532.8 705.7L529 704.7L526 703L524 700.7L523.2 698.2L521.3 672.8L522.1 675.3L524.1 677.6L527.2 679.3L531.1 680.2L535.3 680.4L539.4 679.7L543.1 678.3L546 676.2L547.7 673.7L548.1 671.1Z" fill="#82bd5c"/><path d="M548.2 672.6L547.8 675.2L546 677.7L543.2 679.7L539.5 681.2L535.4 681.9L531.2 681.7L527.3 680.8L524.2 679.1L522.2 676.8L521.4 674.3L519.6 650.1L520.4 652.6L522.5 654.8L525.6 656.5L529.5 657.4L533.8 657.6L538 656.9L541.8 655.5L544.7 653.4L546.4 651L546.9 648.4Z" fill="#2ca638"/><path d="M547 649.9L546.5 652.5L544.7 655L541.9 657L538.1 658.5L533.9 659.1L529.6 659L525.7 658L522.6 656.3L520.5 654.1L519.7 651.6L517.4 619.8L518.2 622.3L520.3 624.4L523.5 626.1L527.5 627L531.8 627.2L536.1 626.5L540 625.1L542.9 623.1L544.7 620.7L545.2 618.1Z" fill="#54a77b"/><path d="M555.7 808.3L555.3 811L553.8 813.5L551.2 815.7L547.9 817.1L544.2 817.8L540.4 817.7L536.9 816.7L534.1 815L532.2 812.6L531.5 810L517.4 619.8L518.2 622.3L520.3 624.4L523.5 626.1L527.5 627L531.8 627.2L536.1 626.5L540 625.1L542.9 623.1L544.7 620.7L545.2 618.1Z" fill="url(#sh)"/><path d="M540.6 624.8L537.6 626.1L534.1 626.9L530.4 627.2L526.8 627L523.5 626.1L520.8 624.8L518.8 623.1L517.6 621.1L517.4 618.9L518.1 616.8L519.7 614.8L522.1 613.1L525.1 611.8L528.6 611L532.2 610.8L535.7 611L538.9 611.8L541.7 613.1L543.7 614.8L544.9 616.8L545.2 618.9L544.5 621.1L543 623.1Z" fill="#5fc288"/>
<path d="M909.7 814.3L908.6 816.7L906.4 818.7L903.2 819.9L899.6 820.3L895.7 819.9L892 818.6L888.8 816.6L886.5 814.2L885.3 811.5L885.3 808.8L891.2 779.3L891.3 782L892.5 784.7L894.9 787.1L898.1 789.1L901.9 790.4L905.9 790.8L909.7 790.4L912.9 789.2L915.1 787.2L916.2 784.8Z" fill="#dd5850"/><path d="M916 786.1L914.8 788.5L912.6 790.4L909.4 791.7L905.6 792.1L901.7 791.6L897.9 790.4L894.6 788.4L892.3 786L891 783.3L891 780.6L896 755.5L896.1 758.2L897.4 760.9L899.8 763.3L903.1 765.3L907 766.5L911.1 767L914.9 766.6L918.1 765.3L920.4 763.4L921.5 761Z" fill="#e8a74e"/><path d="M921.2 762.3L920.1 764.7L917.8 766.6L914.6 767.9L910.8 768.3L906.7 767.9L902.8 766.6L899.5 764.6L897.1 762.2L895.8 759.5L895.8 756.9L902.3 724.5L902.4 727.2L903.7 729.9L906.2 732.3L909.6 734.2L913.6 735.5L917.7 735.9L921.7 735.5L925 734.3L927.3 732.4L928.4 729.9Z" fill="#b29540"/><path d="M928.1 731.3L927 733.7L924.6 735.6L921.4 736.9L917.4 737.3L913.3 736.8L909.3 735.6L905.9 733.7L903.4 731.2L902.1 728.6L902 725.9L906.9 701.8L907 704.5L908.4 707.1L910.9 709.5L914.4 711.4L918.4 712.7L922.7 713.1L926.6 712.7L930 711.5L932.3 709.6L933.5 707.2Z" fill="#c4c562"/><path d="M933.2 708.6L932 711L929.7 712.9L926.3 714.1L922.3 714.5L918.1 714.1L914.1 712.9L910.6 710.9L908.1 708.5L906.7 705.9L906.6 703.2L911.1 681.2L911.2 683.8L912.6 686.4L915.2 688.8L918.7 690.7L922.8 691.9L927.1 692.4L931.2 692L934.5 690.8L936.9 688.9L938.1 686.5Z" fill="#798948"/><path d="M937.8 688L936.6 690.3L934.2 692.2L930.8 693.4L926.8 693.9L922.5 693.4L918.4 692.2L914.9 690.3L912.3 687.9L910.9 685.2L910.8 682.6L915.5 659.5L915.6 662.1L917 664.7L919.7 667L923.3 668.9L927.4 670.2L931.8 670.6L935.9 670.2L939.3 669L941.8 667.1L942.9 664.8Z" fill="#82bd5c"/><path d="M942.6 666.3L941.4 668.6L939 670.5L935.6 671.7L931.5 672.1L927.1 671.7L922.9 670.5L919.4 668.6L916.7 666.2L915.3 663.6L915.2 661L920.9 632.6L921 635.2L922.5 637.8L925.2 640.1L928.9 642L933.2 643.2L937.6 643.6L941.8 643.2L945.3 642L947.7 640.2L948.9 637.8Z" fill="#2ca638"/><path d="M948.6 639.4L947.4 641.8L944.9 643.6L941.4 644.8L937.3 645.2L932.8 644.8L928.6 643.6L924.9 641.7L922.2 639.3L920.7 636.8L920.6 634.2L926 607.4L926.1 609.9L927.7 612.5L930.4 614.8L934.2 616.7L938.5 617.9L943.1 618.3L947.3 617.9L950.9 616.7L953.3 614.9L954.5 612.6Z" fill="#54a77b"/><path d="M909.7 814.3L908.6 816.7L906.4 818.7L903.2 819.9L899.6 820.3L895.7 819.9L892 818.6L888.8 816.6L886.5 814.2L885.3 811.5L885.3 808.8L926 607.4L926.1 609.9L927.7 612.5L930.4 614.8L934.2 616.7L938.5 617.9L943.1 618.3L947.3 617.9L950.9 616.7L953.3 614.9L954.5 612.6Z" fill="url(#sh)"/><path d="M952.3 615.8L949.8 617.2L946.7 618L943.2 618.3L939.4 618L935.7 617.2L932.3 615.8L929.5 614.1L927.4 612.1L926.2 610L925.9 607.8L926.7 605.9L928.3 604.2L930.7 602.9L933.8 602.1L937.3 601.8L941 602.1L944.7 602.9L948 604.2L950.9 605.9L953 607.8L954.3 610L954.6 612.1L953.9 614.1Z" fill="#5fc288"/>
<path d="M650.5 814.5L649.9 817.2L648.2 819.6L645.5 821.5L642.1 822.8L638.3 823.2L634.5 822.7L631.1 821.4L628.4 819.4L626.7 816.9L626.2 814.2L626.2 791.1L626.7 793.9L628.4 796.3L631.2 798.3L634.6 799.6L638.5 800.1L642.3 799.7L645.8 798.5L648.6 796.5L650.3 794.1L651 791.4Z" fill="#dd5850"/><path d="M650.9 792.7L650.3 795.4L648.6 797.8L645.8 799.7L642.3 801L638.5 801.4L634.6 800.9L631.2 799.6L628.4 797.6L626.7 795.1L626.2 792.4L626.2 770.9L626.7 773.6L628.5 776.1L631.2 778.1L634.7 779.4L638.7 779.8L642.6 779.5L646.1 778.2L648.9 776.3L650.7 773.9L651.3 771.2Z" fill="#e8a74e"/><path d="M651.3 772.5L650.7 775.2L648.9 777.6L646.1 779.5L642.6 780.8L638.6 781.2L634.7 780.7L631.2 779.4L628.5 777.4L626.7 774.9L626.2 772.2L626.2 748.8L626.7 751.5L628.5 754L631.3 756L634.9 757.2L638.9 757.7L642.9 757.3L646.5 756.1L649.3 754.2L651.1 751.8L651.7 749.1Z" fill="#b29540"/><path d="M651.7 750.4L651.1 753.1L649.3 755.5L646.4 757.5L642.8 758.7L638.9 759.1L634.9 758.6L631.3 757.3L628.5 755.3L626.7 752.9L626.2 750.2L626.2 726.4L626.7 729.1L628.5 731.5L631.4 733.5L635 734.7L639.1 735.2L643.1 734.8L646.8 733.6L649.7 731.7L651.5 729.3L652.2 726.6Z" fill="#c4c562"/><path d="M652.1 728L651.5 730.7L649.7 733.1L646.8 735L643.1 736.2L639.1 736.6L635 736.1L631.4 734.8L628.5 732.9L626.7 730.4L626.2 727.8L626.2 704.8L626.7 707.5L628.6 709.9L631.5 711.9L635.2 713.1L639.3 713.6L643.4 713.2L647.1 712L650.1 710.1L651.9 707.7L652.6 705.1Z" fill="#798948"/><path d="M652.6 706.5L651.9 709.2L650 711.6L647.1 713.5L643.4 714.7L639.3 715L635.2 714.6L631.5 713.3L628.6 711.4L626.7 708.9L626.2 706.3L626.1 681.8L626.7 684.5L628.6 686.9L631.6 688.8L635.3 690.1L639.5 690.5L643.7 690.1L647.5 689L650.5 687.1L652.4 684.7L653 682.1Z" fill="#82bd5c"/><path d="M653 683.5L652.3 686.2L650.4 688.6L647.4 690.4L643.7 691.6L639.5 692L635.3 691.6L631.6 690.3L628.6 688.4L626.7 685.9L626.1 683.3L626.1 656.1L626.7 658.7L628.6 661.1L631.6 663L635.5 664.3L639.7 664.7L644 664.4L647.8 663.2L650.9 661.3L652.8 659L653.5 656.4Z" fill="#2ca638"/><path d="M653.5 657.9L652.8 660.5L650.9 662.9L647.8 664.7L644 665.9L639.7 666.3L635.5 665.8L631.6 664.6L628.6 662.7L626.7 660.3L626.1 657.6L626.1 628.2L626.8 630.8L628.7 633.1L631.8 635L635.6 636.3L640 636.7L644.3 636.3L648.3 635.2L651.4 633.3L653.4 631L654 628.4Z" fill="#54a77b"/><path d="M650.5 814.5L649.9 817.2L648.2 819.6L645.5 821.5L642.1 822.8L638.3 823.2L634.5 822.7L631.1 821.4L628.4 819.4L626.7 816.9L626.2 814.2L626.1 628.2L626.8 630.8L628.7 633.1L631.8 635L635.6 636.3L640 636.7L644.3 636.3L648.3 635.2L651.4 633.3L653.4 631L654 628.4Z" fill="url(#sh)"/><path d="M650.1 634.2L647.2 635.6L643.8 636.4L640.2 636.7L636.6 636.4L633.2 635.6L630.2 634.2L628 632.5L626.6 630.5L626.1 628.3L626.6 626.1L628 624.1L630.2 622.4L633 621.1L636.4 620.3L639.9 620L643.5 620.3L646.9 621.1L649.8 622.4L652 624.1L653.5 626.1L654 628.3L653.6 630.4L652.3 632.5Z" fill="#5fc288"/>
<path d="M390.2 814.6L390.2 817.3L388.9 820L386.6 822.5L383.4 824.4L379.7 825.6L375.8 826L372.1 825.5L369 824.2L366.8 822.2L365.7 819.7L360.3 793.6L361.4 796.1L363.7 798.1L366.8 799.4L370.6 799.9L374.5 799.5L378.4 798.3L381.6 796.3L384 793.9L385.3 791.2L385.4 788.5Z" fill="#dd5850"/><path d="M385.6 789.7L385.5 792.4L384.2 795.2L381.9 797.6L378.6 799.5L374.8 800.7L370.8 801.1L367.1 800.6L363.9 799.3L361.7 797.3L360.6 794.8L356.8 776.3L357.9 778.8L360.1 780.8L363.3 782.1L367.1 782.6L371.2 782.2L375 781L378.3 779L380.8 776.6L382.1 773.9L382.2 771.2Z" fill="#e8a74e"/><path d="M382.4 772.5L382.3 775.2L381 777.9L378.6 780.3L375.3 782.3L371.4 783.5L367.4 783.9L363.6 783.4L360.4 782.1L358.2 780.1L357.1 777.6L351.9 752.5L353 755L355.3 757L358.5 758.3L362.4 758.8L366.5 758.4L370.4 757.2L373.8 755.2L376.3 752.8L377.7 750.1L377.8 747.4Z" fill="#b29540"/><path d="M378 748.8L377.9 751.5L376.6 754.2L374.1 756.6L370.7 758.5L366.8 759.7L362.7 760.1L358.8 759.6L355.6 758.3L353.3 756.3L352.2 753.9L349.2 739.6L350.4 742L352.7 744L355.9 745.3L359.8 745.8L364 745.4L368 744.2L371.4 742.3L373.9 739.9L375.3 737.2L375.4 734.5Z" fill="#c4c562"/><path d="M375.6 735.9L375.5 738.6L374.1 741.2L371.6 743.7L368.2 745.6L364.2 746.8L360.1 747.2L356.2 746.7L352.9 745.4L350.6 743.4L349.5 740.9L343.5 711.5L344.6 713.9L346.9 715.9L350.3 717.2L354.2 717.7L358.5 717.3L362.6 716.1L366.1 714.2L368.6 711.8L370.1 709.1L370.2 706.5Z" fill="#798948"/><path d="M370.4 707.9L370.3 710.6L368.9 713.2L366.3 715.6L362.8 717.5L358.8 718.7L354.5 719.1L350.6 718.6L347.2 717.3L344.9 715.4L343.8 712.9L338.8 688.8L340 691.3L342.3 693.2L345.7 694.5L349.7 695L354 694.6L358.2 693.4L361.8 691.5L364.4 689.1L365.8 686.5L366 683.8Z" fill="#82bd5c"/><path d="M366.2 685.3L366.1 688L364.7 690.6L362 693L358.5 694.9L354.3 696.1L350 696.5L346 696L342.6 694.7L340.3 692.7L339.1 690.3L333.5 662.9L334.6 665.3L337 667.3L340.5 668.5L344.6 669L349 668.6L353.2 667.4L356.8 665.6L359.5 663.2L361 660.6L361.2 658Z" fill="#2ca638"/><path d="M361.5 659.5L361.3 662.1L359.8 664.7L357.1 667.1L353.5 669L349.3 670.2L344.9 670.5L340.8 670.1L337.3 668.8L334.9 666.9L333.8 664.4L329.2 642.2L330.4 644.6L332.8 646.5L336.3 647.7L340.4 648.2L344.9 647.8L349.2 646.7L352.9 644.8L355.6 642.5L357.2 639.9L357.3 637.2Z" fill="#54a77b"/><path d="M390.2 814.6L390.2 817.3L388.9 820L386.6 822.5L383.4 824.4L379.7 825.6L375.8 826L372.1 825.5L369 824.2L366.8 822.2L365.7 819.7L329.2 642.2L330.4 644.6L332.8 646.5L336.3 647.7L340.4 648.2L344.9 647.8L349.2 646.7L352.9 644.8L355.6 642.5L357.2 639.9L357.3 637.2Z" fill="url(#sh)"/><path d="M351.4 645.7L348.1 647L344.4 647.9L340.7 648.2L337.2 647.9L334.1 647.1L331.6 645.7L329.9 643.9L329.2 641.9L329.4 639.7L330.6 637.5L332.6 635.5L335.4 633.8L338.6 632.5L342.2 631.6L345.9 631.4L349.4 631.6L352.4 632.5L354.9 633.8L356.6 635.5L357.4 637.5L357.2 639.7L356.1 641.9L354.1 643.9Z" fill="#5fc288"/>
<path d="M746.2 820.7L745.4 823.4L743.5 825.7L740.6 827.4L737.1 828.3L733.2 828.4L729.5 827.6L726.1 826L723.6 823.8L722.1 821.2L721.8 818.4L723.5 795.5L723.8 798.3L725.4 800.9L728 803.1L731.3 804.7L735.2 805.5L739.1 805.4L742.7 804.5L745.6 802.8L747.6 800.5L748.4 797.8Z" fill="#dd5850"/><path d="M748.3 799.1L747.5 801.7L745.5 804L742.6 805.7L739 806.7L735.1 806.7L731.2 805.9L727.9 804.4L725.3 802.1L723.7 799.5L723.4 796.8L724.8 777.6L725.2 780.4L726.7 783L729.4 785.2L732.8 786.8L736.7 787.6L740.7 787.5L744.3 786.6L747.3 784.9L749.3 782.6L750.1 780Z" fill="#e8a74e"/><path d="M750 781.2L749.2 783.9L747.2 786.2L744.2 787.9L740.6 788.8L736.6 788.9L732.7 788.1L729.3 786.5L726.6 784.3L725.1 781.7L724.7 778.9L726.2 759.7L726.5 762.4L728.1 765L730.8 767.2L734.3 768.8L738.2 769.6L742.2 769.5L745.9 768.6L749 766.9L751 764.6L751.8 762Z" fill="#b29540"/><path d="M751.7 763.3L750.8 766L748.8 768.2L745.8 769.9L742.1 770.9L738.1 770.9L734.2 770.1L730.7 768.6L728 766.4L726.4 763.8L726.1 761L727.6 740.8L728 743.5L729.6 746.1L732.3 748.3L735.8 749.9L739.8 750.7L743.9 750.6L747.7 749.7L750.7 748L752.7 745.7L753.6 743.1Z" fill="#c4c562"/><path d="M753.4 744.5L752.6 747.1L750.6 749.4L747.5 751.1L743.8 752L739.7 752.1L735.7 751.3L732.2 749.7L729.5 747.5L727.9 744.9L727.5 742.2L729.2 719.3L729.6 722L731.2 724.6L734 726.8L737.6 728.4L741.6 729.1L745.8 729.1L749.6 728.2L752.7 726.5L754.8 724.2L755.6 721.6Z" fill="#798948"/><path d="M755.5 723L754.6 725.6L752.6 727.9L749.5 729.6L745.7 730.5L741.5 730.6L737.5 729.8L733.9 728.2L731.1 726L729.5 723.5L729.1 720.7L730.6 700.7L731 703.4L732.7 706L735.5 708.2L739.1 709.7L743.2 710.5L747.4 710.4L751.3 709.5L754.4 707.8L756.5 705.6L757.4 703Z" fill="#82bd5c"/><path d="M757.2 704.4L756.4 707L754.3 709.3L751.2 711L747.3 711.9L743.1 712L739 711.2L735.3 709.6L732.5 707.4L730.9 704.9L730.5 702.2L733.3 665.1L733.7 667.8L735.4 670.3L738.3 672.5L742 674L746.3 674.8L750.6 674.7L754.5 673.8L757.7 672.2L759.9 669.9L760.7 667.4Z" fill="#2ca638"/><path d="M760.6 668.9L759.7 671.5L757.6 673.7L754.4 675.3L750.4 676.3L746.1 676.3L741.9 675.5L738.1 674L735.3 671.9L733.6 669.3L733.1 666.7L735 641.6L735.5 644.2L737.2 646.7L740.1 648.9L743.9 650.4L748.3 651.2L752.6 651.1L756.7 650.2L759.9 648.6L762.1 646.4L763 643.8Z" fill="#54a77b"/><path d="M746.2 820.7L745.4 823.4L743.5 825.7L740.6 827.4L737.1 828.3L733.2 828.4L729.5 827.6L726.1 826L723.6 823.8L722.1 821.2L721.8 818.4L735 641.6L735.5 644.2L737.2 646.7L740.1 648.9L743.9 650.4L748.3 651.2L752.6 651.1L756.7 650.2L759.9 648.6L762.1 646.4L763 643.8Z" fill="url(#sh)"/><path d="M759.7 648.7L757 650.1L753.7 650.9L750.1 651.2L746.4 650.9L742.9 650.1L739.9 648.7L737.4 647L735.8 644.9L735 642.7L735.3 640.5L736.4 638.5L738.4 636.7L741.1 635.4L744.3 634.6L747.9 634.3L751.5 634.6L754.9 635.4L758 636.7L760.4 638.5L762.1 640.5L762.9 642.7L762.8 644.9L761.7 646.9Z" fill="#5fc288"/>
<path d="M484.9 820.7L484.6 823.5L483.2 826.2L480.7 828.5L477.4 830.3L473.7 831.2L469.8 831.3L466.2 830.5L463.2 828.9L461.2 826.7L460.3 824.1L456.5 794.8L457.4 797.5L459.5 799.7L462.5 801.3L466.2 802L470.1 802L474 801L477.3 799.3L479.9 797L481.3 794.3L481.6 791.5Z" fill="#dd5850"/><path d="M481.7 792.8L481.5 795.6L480 798.2L477.5 800.6L474.1 802.3L470.3 803.2L466.3 803.3L462.6 802.5L459.6 800.9L457.6 798.7L456.6 796.1L453 768.6L454 771.3L456.1 773.5L459.1 775L462.9 775.8L466.9 775.7L470.9 774.8L474.3 773.1L476.9 770.8L478.4 768.1L478.7 765.3Z" fill="#e8a74e"/><path d="M478.8 766.7L478.6 769.4L477.1 772.1L474.5 774.4L471 776.1L467.1 777.1L463 777.2L459.3 776.4L456.2 774.8L454.1 772.6L453.2 770L449.2 739.7L450.2 742.3L452.3 744.5L455.4 746.1L459.3 746.9L463.4 746.8L467.4 745.9L471 744.2L473.6 741.9L475.2 739.2L475.4 736.5Z" fill="#b29540"/><path d="M475.6 737.9L475.3 740.6L473.8 743.2L471.1 745.5L467.6 747.2L463.6 748.2L459.4 748.3L455.6 747.5L452.5 745.9L450.3 743.7L449.4 741.1L445.3 710.1L446.3 712.6L448.5 714.8L451.7 716.4L455.6 717.1L459.8 717.1L463.9 716.1L467.5 714.4L470.2 712.2L471.8 709.5L472.1 706.8Z" fill="#c4c562"/><path d="M472.3 708.3L472 711L470.4 713.6L467.7 715.9L464.1 717.6L460 718.5L455.8 718.6L451.8 717.8L448.6 716.3L446.5 714.1L445.5 711.5L442.5 688.3L443.4 690.8L445.6 693L448.9 694.6L452.9 695.3L457.1 695.2L461.3 694.3L465 692.6L467.8 690.4L469.4 687.8L469.7 685.1Z" fill="#798948"/><path d="M469.9 686.6L469.6 689.3L467.9 691.9L465.2 694.1L461.5 695.8L457.3 696.7L453 696.8L449.1 696.1L445.8 694.5L443.6 692.3L442.7 689.8L438.7 659.6L439.7 662.2L441.9 664.3L445.2 665.8L449.3 666.6L453.7 666.5L457.9 665.6L461.7 663.9L464.5 661.7L466.2 659.1L466.5 656.4Z" fill="#82bd5c"/><path d="M466.7 658L466.4 660.7L464.7 663.2L461.9 665.5L458.1 667.1L453.8 668.1L449.5 668.2L445.4 667.4L442.1 665.9L439.9 663.7L438.9 661.2L434.9 630.9L435.9 633.4L438.2 635.6L441.6 637.1L445.7 637.8L450.2 637.7L454.5 636.8L458.4 635.2L461.3 633L463 630.4L463.3 627.8Z" fill="#2ca638"/><path d="M463.5 629.4L463.1 632L461.4 634.6L458.5 636.8L454.7 638.5L450.4 639.4L445.9 639.4L441.8 638.7L438.4 637.2L436.1 635.1L435.1 632.6L431.8 607.2L432.8 609.7L435.1 611.8L438.5 613.3L442.7 614.1L447.3 614L451.7 613.1L455.6 611.5L458.6 609.3L460.3 606.7L460.7 604.1Z" fill="#54a77b"/><path d="M484.9 820.7L484.6 823.5L483.2 826.2L480.7 828.5L477.4 830.3L473.7 831.2L469.8 831.3L466.2 830.5L463.2 828.9L461.2 826.7L460.3 824.1L431.8 607.2L432.8 609.7L435.1 611.8L438.5 613.3L442.7 614.1L447.3 614L451.7 613.1L455.6 611.5L458.6 609.3L460.3 606.7L460.7 604.1Z" fill="url(#sh)"/><path d="M455.3 611.6L452 613L448.4 613.8L444.6 614.1L440.9 613.8L437.5 613L434.8 611.6L432.9 609.9L431.9 607.9L431.9 605.7L432.9 603.5L434.7 601.5L437.4 599.8L440.6 598.5L444.2 597.7L447.9 597.4L451.6 597.7L454.8 598.5L457.5 599.8L459.5 601.5L460.5 603.5L460.6 605.7L459.7 607.8L457.9 609.9Z" fill="#5fc288"/>
<path d="M842.9 827L841.9 829.6L839.8 831.8L836.7 833.2L833.1 833.9L829.2 833.6L825.4 832.5L822.1 830.6L819.7 828.2L818.4 825.5L818.3 822.7L821.6 800.5L821.8 803.2L823.2 806L825.6 808.4L828.9 810.3L832.7 811.4L836.7 811.6L840.4 811L843.5 809.5L845.7 807.4L846.7 804.8Z" fill="#dd5850"/><path d="M846.5 806.1L845.5 808.7L843.3 810.8L840.2 812.2L836.5 812.9L832.5 812.6L828.7 811.5L825.4 809.7L823 807.2L821.6 804.5L821.4 801.7L825.4 775.9L825.5 778.7L826.9 781.4L829.4 783.8L832.8 785.7L836.7 786.8L840.8 787L844.6 786.4L847.7 784.9L849.9 782.8L850.9 780.3Z" fill="#e8a74e"/><path d="M850.7 781.6L849.7 784.1L847.5 786.3L844.3 787.7L840.6 788.3L836.5 788.1L832.6 787L829.2 785.1L826.7 782.7L825.3 780L825.2 777.2L829.5 748.6L829.7 751.4L831.1 754.1L833.7 756.5L837.1 758.3L841.1 759.4L845.3 759.7L849.1 759L852.4 757.6L854.6 755.5L855.6 752.9Z" fill="#b29540"/><path d="M855.4 754.3L854.4 756.9L852.1 759L848.9 760.4L845.1 761L840.9 760.8L836.9 759.7L833.5 757.8L830.9 755.4L829.5 752.7L829.3 750L832.6 728.1L832.8 730.8L834.3 733.5L836.9 735.9L840.4 737.8L844.5 738.9L848.7 739.1L852.6 738.5L855.8 737L858.1 735L859.2 732.4Z" fill="#c4c562"/><path d="M858.9 733.8L857.9 736.4L855.6 738.5L852.4 739.9L848.4 740.5L844.2 740.3L840.2 739.2L836.7 737.3L834 734.9L832.6 732.3L832.4 729.5L835.9 706.2L836.1 709L837.6 711.6L840.3 714L843.9 715.8L848 716.9L852.3 717.2L856.3 716.5L859.6 715.1L861.9 713L862.9 710.5Z" fill="#798948"/><path d="M862.7 712L861.6 714.5L859.3 716.6L856 718L852 718.6L847.8 718.4L843.6 717.3L840.1 715.5L837.4 713.1L835.9 710.4L835.7 707.7L839.7 681.1L839.9 683.8L841.5 686.4L844.2 688.8L847.9 690.6L852.1 691.7L856.4 691.9L860.5 691.3L863.8 689.9L866.2 687.8L867.2 685.3Z" fill="#82bd5c"/><path d="M867 686.8L865.9 689.3L863.6 691.4L860.2 692.8L856.2 693.4L851.8 693.2L847.6 692.1L844 690.3L841.3 687.9L839.7 685.3L839.5 682.6L843.3 657.4L843.5 660.1L845.1 662.7L847.9 665.1L851.6 666.8L855.9 667.9L860.3 668.2L864.5 667.6L867.9 666.2L870.2 664.1L871.3 661.6Z" fill="#2ca638"/><path d="M871 663.2L870 665.7L867.6 667.7L864.2 669.1L860.1 669.7L855.7 669.5L851.4 668.4L847.7 666.6L844.9 664.3L843.3 661.6L843.1 659L845.4 643.8L845.6 646.5L847.2 649.1L850 651.4L853.8 653.2L858.1 654.3L862.6 654.5L866.7 653.9L870.2 652.5L872.6 650.5L873.6 648Z" fill="#54a77b"/><path d="M842.9 827L841.9 829.6L839.8 831.8L836.7 833.2L833.1 833.9L829.2 833.6L825.4 832.5L822.1 830.6L819.7 828.2L818.4 825.5L818.3 822.7L845.4 643.8L845.6 646.5L847.2 649.1L850 651.4L853.8 653.2L858.1 654.3L862.6 654.5L866.7 653.9L870.2 652.5L872.6 650.5L873.6 648Z" fill="url(#sh)"/><path d="M871 652L868.4 653.4L865.2 654.3L861.6 654.6L857.9 654.3L854.3 653.4L851 652L848.3 650.2L846.4 648.1L845.4 645.9L845.4 643.7L846.3 641.7L848.1 639.9L850.7 638.6L853.8 637.7L857.3 637.4L861 637.7L864.6 638.6L867.8 639.9L870.5 641.6L872.4 643.7L873.5 645.9L873.6 648.1L872.8 650.2Z" fill="#5fc288"/>
<path d="M580.5 827.1L580 829.9L578.4 832.5L575.8 834.6L572.4 836.1L568.6 836.8L564.7 836.5L561.2 835.4L558.4 833.5L556.5 831.1L555.8 828.4L554.4 803.8L555.1 806.6L557 809L559.9 810.8L563.5 811.9L567.4 812.2L571.3 811.5L574.8 810.1L577.5 807.9L579.1 805.3L579.6 802.5Z" fill="#dd5850"/><path d="M579.6 803.8L579.1 806.6L577.5 809.2L574.8 811.3L571.4 812.8L567.5 813.5L563.5 813.2L560 812.1L557.1 810.2L555.2 807.8L554.5 805.1L553.2 782.2L553.9 784.9L555.9 787.3L558.8 789.2L562.4 790.3L566.4 790.5L570.4 789.9L573.9 788.4L576.6 786.3L578.3 783.7L578.8 780.9Z" fill="#e8a74e"/><path d="M578.8 782.2L578.3 785L576.7 787.6L573.9 789.7L570.4 791.2L566.5 791.8L562.5 791.6L558.8 790.5L555.9 788.6L554 786.2L553.3 783.5L551.9 758.5L552.6 761.2L554.6 763.6L557.5 765.4L561.2 766.5L565.3 766.8L569.3 766.1L572.9 764.7L575.7 762.5L577.4 760L577.9 757.2Z" fill="#b29540"/><path d="M578 758.5L577.5 761.3L575.8 763.9L573 766L569.4 767.5L565.4 768.1L561.3 767.9L557.6 766.8L554.6 764.9L552.7 762.5L552 759.8L550.5 734.3L551.3 737L553.3 739.4L556.3 741.2L560 742.3L564.2 742.5L568.3 741.9L571.9 740.4L574.8 738.3L576.5 735.7L577 733Z" fill="#c4c562"/><path d="M577.1 734.4L576.6 737.2L574.8 739.7L572 741.8L568.4 743.3L564.3 743.9L560.1 743.7L556.3 742.6L553.3 740.8L551.4 738.4L550.6 735.7L549.2 711L550 713.7L552 716.1L555.1 717.9L558.9 719L563.1 719.2L567.3 718.6L571 717.1L573.9 715L575.7 712.5L576.2 709.7Z" fill="#798948"/><path d="M576.2 711.2L575.7 713.9L574 716.5L571.1 718.6L567.4 720L563.2 720.7L559 720.4L555.1 719.3L552.1 717.5L550.1 715.1L549.3 712.4L547.8 686.1L548.6 688.7L550.6 691.1L553.8 692.9L557.7 694L562 694.2L566.2 693.6L570 692.2L572.9 690.1L574.8 687.5L575.3 684.8Z" fill="#82bd5c"/><path d="M575.3 686.3L574.8 689L573 691.6L570.1 693.7L566.3 695.1L562 695.7L557.7 695.5L553.8 694.4L550.7 692.6L548.7 690.3L547.9 687.6L546.4 660.4L547.2 663L549.2 665.3L552.4 667.1L556.4 668.2L560.8 668.4L565.1 667.8L569 666.4L572 664.3L573.8 661.8L574.3 659.1Z" fill="#2ca638"/><path d="M574.4 660.7L573.9 663.4L572 665.9L569 668L565.2 669.4L560.8 670L556.5 669.8L552.5 668.7L549.3 666.9L547.2 664.6L546.5 661.9L544.8 632.7L545.6 635.3L547.7 637.6L551 639.4L555 640.5L559.5 640.7L563.9 640.1L567.8 638.7L570.9 636.6L572.8 634.1L573.3 631.5Z" fill="#54a77b"/><path d="M580.5 827.1L580 829.9L578.4 832.5L575.8 834.6L572.4 836.1L568.6 836.8L564.7 836.5L561.2 835.4L558.4 833.5L556.5 831.1L555.8 828.4L544.8 632.7L545.6 635.3L547.7 637.6L551 639.4L555 640.5L559.5 640.7L563.9 640.1L567.8 638.7L570.9 636.6L572.8 634.1L573.3 631.5Z" fill="url(#sh)"/><path d="M568.8 638.2L565.7 639.5L562.2 640.4L558.5 640.7L554.8 640.4L551.4 639.6L548.5 638.2L546.4 636.4L545.1 634.3L544.9 632.1L545.5 629.9L547.1 627.8L549.5 626.1L552.6 624.7L556 623.9L559.7 623.6L563.3 623.9L566.7 624.7L569.5 626.1L571.7 627.8L573 629.9L573.3 632.1L572.7 634.3L571.2 636.4Z" fill="#5fc288"/>
<path d="M677 833.5L676.3 836.3L674.5 838.8L671.7 840.7L668.2 841.9L664.3 842.2L660.5 841.6L657.1 840.2L654.4 838.1L652.7 835.5L652.2 832.7L652.7 810.5L653.2 813.3L654.9 815.9L657.6 818L661.1 819.5L665 820.1L668.9 819.7L672.5 818.6L675.4 816.6L677.2 814.1L677.9 811.4Z" fill="#dd5850"/><path d="M677.8 812.6L677.2 815.4L675.3 817.9L672.5 819.8L668.9 821L665 821.3L661.1 820.7L657.6 819.3L654.9 817.2L653.2 814.6L652.7 811.8L653.1 791.1L653.6 794L655.3 796.5L658.1 798.7L661.6 800.1L665.6 800.7L669.6 800.3L673.2 799.2L676.1 797.2L678 794.8L678.7 792Z" fill="#e8a74e"/><path d="M678.6 793.3L677.9 796.1L676.1 798.5L673.2 800.5L669.5 801.7L665.6 802L661.6 801.4L658 800L655.3 797.8L653.6 795.3L653.1 792.4L653.5 770L654 772.8L655.8 775.4L658.6 777.5L662.2 778.9L666.2 779.5L670.3 779.2L674 778L676.9 776.1L678.8 773.6L679.5 770.9Z" fill="#b29540"/><path d="M679.5 772.2L678.8 775L676.9 777.4L673.9 779.4L670.3 780.5L666.2 780.8L662.2 780.3L658.6 778.8L655.8 776.7L654 774.2L653.5 771.4L654 748.5L654.5 751.3L656.3 753.9L659.1 756L662.8 757.4L666.9 758L671 757.7L674.8 756.5L677.8 754.6L679.7 752.1L680.4 749.4Z" fill="#c4c562"/><path d="M680.3 750.8L679.6 753.5L677.7 756L674.7 757.9L671 759L666.8 759.4L662.8 758.8L659.1 757.4L656.2 755.3L654.5 752.7L653.9 749.9L654.4 727.9L654.9 730.7L656.7 733.3L659.6 735.4L663.4 736.8L667.5 737.3L671.7 737L675.5 735.9L678.5 734L680.5 731.5L681.2 728.8Z" fill="#798948"/><path d="M681.2 730.2L680.4 732.9L678.5 735.4L675.5 737.3L671.7 738.5L667.5 738.8L663.3 738.2L659.6 736.8L656.7 734.7L654.9 732.1L654.4 729.4L654.8 706L655.4 708.7L657.2 711.3L660.2 713.3L664 714.7L668.2 715.3L672.4 715L676.3 713.8L679.4 712L681.4 709.5L682.1 706.8Z" fill="#82bd5c"/><path d="M682 708.3L681.3 711L679.3 713.4L676.3 715.3L672.4 716.5L668.1 716.8L663.9 716.2L660.1 714.8L657.2 712.8L655.4 710.2L654.8 707.4L655.2 688.2L655.8 690.9L657.6 693.5L660.6 695.5L664.4 696.9L668.7 697.5L673 697.2L677 696L680.1 694.1L682.1 691.7L682.8 689Z" fill="#2ca638"/><path d="M682.8 690.5L682 693.2L680 695.7L676.9 697.5L673 698.7L668.7 699L664.4 698.4L660.6 697L657.6 695L655.7 692.4L655.2 689.7L655.7 664.9L656.2 667.6L658.1 670.1L661.2 672.2L665.1 673.5L669.4 674.1L673.8 673.8L677.8 672.6L681 670.8L683 668.4L683.8 665.7Z" fill="#54a77b"/><path d="M677 833.5L676.3 836.3L674.5 838.8L671.7 840.7L668.2 841.9L664.3 842.2L660.5 841.6L657.1 840.2L654.4 838.1L652.7 835.5L652.2 832.7L655.7 664.9L656.2 667.6L658.1 670.1L661.2 672.2L665.1 673.5L669.4 674.1L673.8 673.8L677.8 672.6L681 670.8L683 668.4L683.8 665.7Z" fill="url(#sh)"/><path d="M680 671.5L677.1 672.9L673.8 673.8L670.1 674.1L666.4 673.8L663 672.9L660 671.5L657.7 669.7L656.2 667.6L655.7 665.3L656.1 663L657.4 660.9L659.6 659.1L662.4 657.8L665.7 656.9L669.3 656.6L672.9 656.9L676.3 657.8L679.3 659.1L681.6 660.9L683.1 663L683.7 665.3L683.4 667.5L682.1 669.7Z" fill="#5fc288"/>
<path d="M412.3 833.5L412.2 836.4L410.9 839.2L408.5 841.7L405.2 843.6L401.4 844.8L397.5 845.2L393.8 844.6L390.7 843.2L388.5 841.1L387.4 838.5L381.8 809.3L382.9 811.9L385.1 814L388.3 815.4L392.1 816L396.2 815.6L400 814.4L403.4 812.5L405.8 810L407.2 807.2L407.3 804.3Z" fill="#dd5850"/><path d="M407.5 805.6L407.4 808.4L406.1 811.2L403.6 813.7L400.3 815.7L396.4 816.9L392.3 817.3L388.5 816.7L385.4 815.3L383.1 813.2L382 810.6L378.7 793.1L379.8 795.7L382.1 797.8L385.3 799.2L389.1 799.8L393.2 799.4L397.2 798.2L400.5 796.3L403 793.8L404.4 791L404.5 788.2Z" fill="#e8a74e"/><path d="M404.7 789.5L404.6 792.3L403.3 795.1L400.8 797.6L397.4 799.5L393.5 800.7L389.4 801.1L385.5 800.5L382.3 799.1L380 797L378.9 794.4L375 773.6L376.1 776.2L378.4 778.3L381.6 779.7L385.5 780.3L389.7 779.9L393.7 778.7L397.1 776.8L399.7 774.3L401.1 771.5L401.2 768.7Z" fill="#b29540"/><path d="M401.4 770.1L401.3 772.9L399.9 775.6L397.4 778.1L393.9 780.1L389.9 781.3L385.8 781.6L381.9 781.1L378.6 779.7L376.3 777.6L375.2 775L369.6 745.5L370.7 748.1L373 750.2L376.4 751.6L380.4 752.1L384.6 751.8L388.7 750.6L392.2 748.7L394.8 746.2L396.3 743.4L396.4 740.6Z" fill="#c4c562"/><path d="M396.7 742.1L396.5 744.8L395.1 747.6L392.5 750.1L389 752L384.9 753.2L380.6 753.5L376.6 753L373.3 751.6L371 749.5L369.9 746.9L365.5 723.9L366.6 726.5L368.9 728.6L372.3 729.9L376.4 730.5L380.7 730.2L384.9 729L388.4 727L391.1 724.6L392.6 721.8L392.7 719.1Z" fill="#798948"/><path d="M393 720.5L392.8 723.3L391.4 726L388.7 728.5L385.1 730.4L381 731.6L376.6 732L372.6 731.4L369.2 730L366.9 727.9L365.7 725.4L360.1 695.8L361.2 698.4L363.6 700.4L367.1 701.8L371.2 702.4L375.6 702L379.9 700.8L383.5 698.9L386.3 696.5L387.8 693.8L387.9 691Z" fill="#82bd5c"/><path d="M388.2 692.5L388 695.3L386.5 698L383.8 700.4L380.1 702.4L375.9 703.5L371.5 703.9L367.3 703.3L363.9 701.9L361.5 699.9L360.4 697.3L353.5 661.3L354.6 663.8L357.1 665.8L360.6 667.2L364.8 667.7L369.3 667.4L373.7 666.3L377.5 664.4L380.3 661.9L381.9 659.3L382.1 656.5Z" fill="#2ca638"/><path d="M382.3 658.1L382.1 660.8L380.6 663.5L377.8 666L374 667.8L369.6 669L365.1 669.3L360.9 668.8L357.4 667.4L354.9 665.4L353.8 662.9L350.1 643.8L351.3 646.3L353.8 648.3L357.3 649.7L361.6 650.2L366.2 649.9L370.6 648.7L374.4 646.9L377.3 644.5L378.9 641.8L379.1 639.1Z" fill="#54a77b"/><path d="M412.3 833.5L412.2 836.4L410.9 839.2L408.5 841.7L405.2 843.6L401.4 844.8L397.5 845.2L393.8 844.6L390.7 843.2L388.5 841.1L387.4 838.5L350.1 643.8L351.3 646.3L353.8 648.3L357.3 649.7L361.6 650.2L366.2 649.9L370.6 648.7L374.4 646.9L377.3 644.5L378.9 641.8L379.1 639.1Z" fill="url(#sh)"/><path d="M373.1 647.6L369.7 649.1L366 649.9L362.2 650.2L358.5 649.9L355.3 649.1L352.7 647.7L350.9 645.8L350.1 643.7L350.3 641.5L351.5 639.2L353.5 637.1L356.3 635.3L359.7 634L363.3 633.1L367.1 632.8L370.7 633.1L373.9 634L376.5 635.3L378.2 637.1L379.1 639.2L379 641.4L377.9 643.7L375.9 645.8Z" fill="#5fc288"/>
<path d="M774.5 840L773.6 842.8L771.6 845.1L768.6 846.8L765 847.7L761 847.6L757.2 846.7L753.9 845L751.3 842.6L749.9 839.9L749.6 837L751.8 814.5L752.1 817.3L753.6 820.1L756.2 822.4L759.6 824.2L763.5 825.1L767.5 825.1L771.2 824.2L774.2 822.6L776.3 820.2L777.2 817.5Z" fill="#dd5850"/><path d="M777 818.8L776.1 821.5L774.1 823.8L771 825.5L767.3 826.4L763.4 826.4L759.5 825.4L756.1 823.7L753.5 821.3L752 818.6L751.7 815.7L753.8 794.8L754.1 797.6L755.6 800.3L758.2 802.7L761.7 804.4L765.6 805.3L769.7 805.4L773.4 804.5L776.5 802.8L778.6 800.5L779.5 797.8Z" fill="#e8a74e"/><path d="M779.4 799.1L778.5 801.8L776.4 804.1L773.3 805.8L769.5 806.7L765.5 806.7L761.5 805.7L758.1 804L755.5 801.7L753.9 798.9L753.6 796.1L755.9 773.2L756.2 776.1L757.7 778.8L760.4 781.1L763.9 782.8L768 783.8L772.1 783.8L775.9 782.9L779 781.3L781.2 779L782.1 776.2Z" fill="#b29540"/><path d="M781.9 777.6L781 780.3L778.9 782.6L775.8 784.3L772 785.1L767.8 785.1L763.8 784.2L760.3 782.5L757.6 780.1L756 777.4L755.7 774.6L758 751.3L758.4 754.1L759.9 756.8L762.7 759.2L766.3 760.9L770.4 761.8L774.6 761.8L778.4 761L781.6 759.3L783.8 757L784.7 754.3Z" fill="#c4c562"/><path d="M784.5 755.7L783.6 758.4L781.4 760.7L778.3 762.4L774.4 763.2L770.2 763.2L766.1 762.3L762.5 760.6L759.8 758.2L758.2 755.5L757.9 752.7L760.1 730.3L760.4 733.1L762.1 735.8L764.8 738.1L768.5 739.8L772.6 740.7L776.9 740.8L780.8 739.9L784.1 738.2L786.2 736L787.2 733.3Z" fill="#798948"/><path d="M787 734.7L786.1 737.4L783.9 739.7L780.7 741.3L776.7 742.2L772.5 742.2L768.3 741.3L764.7 739.5L761.9 737.2L760.3 734.5L760 731.7L762.3 707.8L762.6 710.6L764.3 713.3L767.1 715.6L770.8 717.3L775.1 718.2L779.4 718.3L783.4 717.4L786.7 715.8L788.9 713.5L789.8 710.8Z" fill="#82bd5c"/><path d="M789.6 712.3L788.7 715L786.5 717.3L783.2 718.9L779.2 719.8L774.9 719.7L770.7 718.8L767 717.1L764.2 714.8L762.5 712.1L762.2 709.3L764.8 682.7L765.1 685.5L766.8 688.1L769.7 690.4L773.5 692.1L777.8 693L782.2 693L786.3 692.2L789.6 690.6L791.9 688.3L792.8 685.7Z" fill="#2ca638"/><path d="M792.6 687.2L791.7 689.9L789.4 692.1L786.1 693.7L782.1 694.6L777.6 694.6L773.3 693.7L769.5 692L766.7 689.7L765 687L764.6 684.2L767 660.5L767.3 663.3L769.1 665.9L772 668.2L775.8 669.8L780.2 670.7L784.7 670.8L788.9 669.9L792.2 668.3L794.5 666.1L795.4 663.4Z" fill="#54a77b"/><path d="M774.5 840L773.6 842.8L771.6 845.1L768.6 846.8L765 847.7L761 847.6L757.2 846.7L753.9 845L751.3 842.6L749.9 839.9L749.6 837L767 660.5L767.3 663.3L769.1 665.9L772 668.2L775.8 669.8L780.2 670.7L784.7 670.8L788.9 669.9L792.2 668.3L794.5 666.1L795.4 663.4Z" fill="url(#sh)"/><path d="M792.3 668.2L789.6 669.6L786.3 670.5L782.7 670.9L778.9 670.6L775.3 669.7L772.1 668.2L769.6 666.4L767.8 664.3L767 662L767.1 659.7L768.2 657.6L770.2 655.8L772.9 654.4L776.1 653.5L779.7 653.2L783.4 653.5L787 654.4L790.1 655.8L792.7 657.6L794.5 659.7L795.4 662L795.3 664.2L794.3 666.4Z" fill="#5fc288"/>
<path d="M508.7 840L508.4 842.8L506.9 845.6L504.3 848L501 849.7L497.2 850.6L493.2 850.6L489.6 849.7L486.6 848L484.6 845.7L483.7 842.9L481 819.1L481.9 821.9L483.9 824.2L487 825.9L490.7 826.8L494.7 826.8L498.6 825.9L502 824.2L504.6 821.8L506.1 819.1L506.4 816.2Z" fill="#dd5850"/><path d="M506.5 817.4L506.2 820.3L504.7 823.1L502.1 825.4L498.7 827.2L494.8 828.1L490.8 828.1L487.1 827.2L484.1 825.5L482 823.1L481.1 820.4L478.6 798.2L479.5 801L481.6 803.3L484.6 805L488.4 805.9L492.5 805.9L496.5 805L499.9 803.2L502.6 800.9L504.1 798.1L504.4 795.3Z" fill="#e8a74e"/><path d="M504.6 796.6L504.3 799.5L502.7 802.2L500.1 804.5L496.6 806.3L492.6 807.2L488.5 807.2L484.8 806.3L481.7 804.6L479.6 802.3L478.7 799.5L476 775.3L476.9 778.1L479 780.4L482.1 782.1L485.9 783L490.1 782.9L494.1 782L497.7 780.3L500.4 778L502 775.2L502.3 772.4Z" fill="#b29540"/><path d="M502.4 773.7L502.1 776.6L500.5 779.3L497.8 781.7L494.3 783.4L490.2 784.3L486.1 784.3L482.3 783.4L479.1 781.7L477 779.4L476.1 776.7L473.3 752L474.2 754.7L476.3 757L479.5 758.7L483.4 759.6L487.6 759.6L491.8 758.7L495.4 757L498.1 754.6L499.8 751.9L500.1 749.1Z" fill="#c4c562"/><path d="M500.2 750.5L499.9 753.3L498.3 756L495.5 758.4L491.9 760.1L487.8 761L483.6 761L479.7 760.1L476.5 758.4L474.4 756.1L473.4 753.4L470.7 729.5L471.6 732.2L473.8 734.6L477 736.2L481 737.1L485.3 737.1L489.5 736.2L493.2 734.5L496 732.2L497.6 729.5L498 726.6Z" fill="#798948"/><path d="M498.1 728.1L497.8 730.9L496.1 733.6L493.3 735.9L489.6 737.6L485.4 738.5L481.2 738.6L477.2 737.7L474 736L471.8 733.7L470.9 731L468 705.6L468.9 708.2L471.1 710.5L474.4 712.2L478.4 713.1L482.8 713L487.1 712.2L490.8 710.5L493.7 708.2L495.4 705.5L495.7 702.7Z" fill="#82bd5c"/><path d="M495.9 704.2L495.5 707L493.8 709.7L491 712L487.2 713.7L482.9 714.6L478.6 714.6L474.6 713.7L471.3 712L469.1 709.7L468.1 707.1L465.1 680.8L466.1 683.5L468.3 685.7L471.6 687.4L475.7 688.3L480.2 688.3L484.5 687.4L488.4 685.7L491.3 683.4L493 680.7L493.4 677.9Z" fill="#2ca638"/><path d="M493.5 679.5L493.2 682.3L491.4 685L488.5 687.2L484.7 688.9L480.4 689.8L475.9 689.8L471.8 689L468.5 687.3L466.2 685L465.3 682.4L462 653.4L462.9 656L465.2 658.2L468.6 659.9L472.8 660.7L477.3 660.7L481.8 659.8L485.7 658.2L488.6 655.9L490.4 653.3L490.8 650.5Z" fill="#54a77b"/><path d="M508.7 840L508.4 842.8L506.9 845.6L504.3 848L501 849.7L497.2 850.6L493.2 850.6L489.6 849.7L486.6 848L484.6 845.7L483.7 842.9L462 653.4L462.9 656L465.2 658.2L468.6 659.9L472.8 660.7L477.3 660.7L481.8 659.8L485.7 658.2L488.6 655.9L490.4 653.3L490.8 650.5Z" fill="url(#sh)"/><path d="M485.6 658.2L482.4 659.6L478.8 660.5L475 660.8L471.3 660.5L467.9 659.6L465.2 658.2L463.2 656.4L462.1 654.2L462 651.9L462.9 649.7L464.7 647.5L467.3 645.7L470.5 644.4L474.1 643.5L477.8 643.2L481.4 643.5L484.7 644.3L487.5 645.7L489.5 647.5L490.6 649.6L490.8 651.9L489.9 654.2L488.2 656.4Z" fill="#5fc288"/>
<path d="M873 846.6L871.9 849.2L869.7 851.4L866.5 852.8L862.7 853.3L858.7 853L854.9 851.7L851.7 849.7L849.3 847.1L848 844.3L847.9 841.4L851.1 823.2L851.2 826.1L852.5 829L855 831.5L858.3 833.5L862.2 834.8L866.2 835.2L870 834.6L873.2 833.2L875.5 831.1L876.6 828.4Z" fill="#dd5850"/><path d="M876.4 829.7L875.2 832.3L873 834.5L869.8 835.9L866 836.4L861.9 836L858.1 834.8L854.7 832.8L852.3 830.2L851 827.4L850.9 824.5L856.5 793.2L856.6 796.1L857.9 798.9L860.4 801.5L863.8 803.5L867.8 804.7L872 805.1L875.9 804.6L879.1 803.2L881.4 801L882.6 798.4Z" fill="#e8a74e"/><path d="M882.3 799.7L881.2 802.4L878.9 804.5L875.6 805.9L871.7 806.4L867.6 806L863.6 804.8L860.2 802.8L857.7 800.2L856.3 797.4L856.2 794.6L859.7 775L859.8 777.8L861.2 780.6L863.7 783.2L867.2 785.2L871.2 786.4L875.5 786.8L879.4 786.3L882.7 784.9L885.1 782.8L886.2 780.1Z" fill="#b29540"/><path d="M885.9 781.5L884.8 784.1L882.5 786.2L879.1 787.6L875.2 788.2L871 787.8L867 786.5L863.5 784.5L861 782L859.6 779.2L859.5 776.3L863 756.7L863.1 759.5L864.5 762.4L867.1 764.9L870.6 766.9L874.7 768.1L879 768.5L883 768L886.3 766.6L888.7 764.5L889.8 761.9Z" fill="#c4c562"/><path d="M889.5 763.2L888.4 765.9L886 768L882.7 769.4L878.7 769.9L874.4 769.5L870.3 768.3L866.8 766.3L864.2 763.8L862.8 760.9L862.7 758.1L865.7 741.1L865.9 743.9L867.3 746.7L869.9 749.2L873.5 751.2L877.6 752.4L882 752.8L886 752.3L889.4 750.9L891.8 748.8L892.9 746.2Z" fill="#798948"/><path d="M892.6 747.6L891.5 750.2L889.1 752.3L885.7 753.7L881.7 754.2L877.4 753.9L873.2 752.6L869.7 750.7L867 748.1L865.6 745.3L865.5 742.5L868.3 726.7L868.4 729.6L869.9 732.4L872.5 734.9L876.1 736.8L880.3 738.1L884.7 738.4L888.8 737.9L892.2 736.5L894.6 734.4L895.8 731.8Z" fill="#82bd5c"/><path d="M895.5 733.3L894.3 735.9L891.9 738L888.5 739.4L884.4 739.9L880.1 739.5L875.9 738.3L872.3 736.3L869.6 733.8L868.1 731L868 728.2L874.1 694.2L874.2 697L875.7 699.7L878.5 702.2L882.2 704.2L886.5 705.4L891 705.8L895.1 705.2L898.6 703.9L901.1 701.8L902.2 699.2Z" fill="#2ca638"/><path d="M901.9 700.8L900.8 703.3L898.3 705.4L894.8 706.8L890.7 707.3L886.2 706.9L881.9 705.7L878.2 703.8L875.4 701.3L873.9 698.5L873.8 695.7L877 677.4L877.2 680.1L878.7 682.9L881.5 685.4L885.3 687.3L889.6 688.6L894.2 688.9L898.4 688.4L902 687L904.4 685L905.6 682.4Z" fill="#54a77b"/><path d="M873 846.6L871.9 849.2L869.7 851.4L866.5 852.8L862.7 853.3L858.7 853L854.9 851.7L851.7 849.7L849.3 847.1L848 844.3L847.9 841.4L877 677.4L877.2 680.1L878.7 682.9L881.5 685.4L885.3 687.3L889.6 688.6L894.2 688.9L898.4 688.4L902 687L904.4 685L905.6 682.4Z" fill="url(#sh)"/><path d="M903.1 686.2L900.6 687.7L897.4 688.6L893.8 688.9L890 688.6L886.3 687.7L883 686.3L880.2 684.4L878.2 682.2L877.1 679.9L877 677.6L877.8 675.4L879.6 673.6L882.1 672.2L885.3 671.3L888.8 671L892.5 671.3L896.2 672.2L899.5 673.6L902.2 675.4L904.3 677.6L905.4 679.9L905.6 682.2L904.8 684.4Z" fill="#5fc288"/>
<path d="M606 846.6L605.5 849.5L603.8 852.1L601.1 854.3L597.6 855.7L593.8 856.3L589.8 856L586.3 854.8L583.5 852.8L581.6 850.2L581 847.3L580.1 822.3L580.7 825.1L582.6 827.7L585.5 829.7L589.1 830.9L593.1 831.2L597.1 830.6L600.6 829.2L603.4 827L605.1 824.4L605.6 821.5Z" fill="#dd5850"/><path d="M605.6 822.8L605.1 825.7L603.4 828.3L600.6 830.5L597.1 831.9L593.1 832.5L589.1 832.2L585.5 830.9L582.6 828.9L580.8 826.4L580.1 823.5L579.2 800.1L579.9 802.9L581.8 805.5L584.8 807.5L588.4 808.7L592.5 809L596.5 808.4L600.2 807L603 804.8L604.7 802.2L605.3 799.3Z" fill="#e8a74e"/><path d="M605.3 800.6L604.8 803.5L603 806.2L600.2 808.3L596.6 809.8L592.5 810.3L588.5 810L584.8 808.8L581.9 806.8L580 804.2L579.3 801.4L578.4 775.7L579 778.6L581 781.1L584 783.1L587.7 784.3L591.9 784.6L596 784.1L599.7 782.6L602.5 780.5L604.3 777.8L604.9 775Z" fill="#b29540"/><path d="M604.9 776.3L604.3 779.2L602.6 781.9L599.7 784L596 785.4L591.9 786L587.8 785.7L584 784.5L581 782.5L579.1 779.9L578.4 777.1L577.4 750.9L578.1 753.7L580.1 756.2L583.1 758.2L587 759.4L591.2 759.8L595.4 759.2L599.1 757.7L602.1 755.6L603.9 753L604.5 750.1Z" fill="#c4c562"/><path d="M604.5 751.5L603.9 754.4L602.1 757L599.2 759.2L595.4 760.6L591.2 761.2L587 760.8L583.2 759.6L580.2 757.7L578.2 755.1L577.5 752.3L576.6 727L577.3 729.8L579.3 732.3L582.4 734.2L586.3 735.4L590.6 735.8L594.8 735.2L598.6 733.8L601.6 731.7L603.5 729L604.1 726.2Z" fill="#798948"/><path d="M604.1 727.7L603.5 730.5L601.7 733.1L598.7 735.2L594.9 736.7L590.6 737.2L586.3 736.9L582.4 735.7L579.3 733.7L577.3 731.2L576.6 728.4L575.6 701.3L576.3 704.1L578.4 706.6L581.5 708.5L585.5 709.7L589.9 710L594.2 709.5L598.1 708L601.2 705.9L603.1 703.3L603.6 700.5Z" fill="#82bd5c"/><path d="M603.7 702L603.1 704.9L601.2 707.5L598.2 709.6L594.3 711L589.9 711.6L585.5 711.2L581.6 710L578.4 708.1L576.4 705.6L575.7 702.8L574.8 678.5L575.5 681.3L577.6 683.8L580.8 685.7L584.8 686.9L589.3 687.2L593.7 686.6L597.7 685.2L600.7 683.1L602.7 680.6L603.3 677.8Z" fill="#2ca638"/><path d="M603.3 679.3L602.7 682.1L600.8 684.7L597.7 686.8L593.7 688.2L589.3 688.8L584.9 688.5L580.8 687.3L577.6 685.3L575.6 682.9L574.8 680.1L573.9 655.2L574.7 657.9L576.8 660.4L580 662.3L584.1 663.5L588.6 663.8L593.1 663.2L597.2 661.8L600.3 659.8L602.3 657.2L602.9 654.4Z" fill="#54a77b"/><path d="M606 846.6L605.5 849.5L603.8 852.1L601.1 854.3L597.6 855.7L593.8 856.3L589.8 856L586.3 854.8L583.5 852.8L581.6 850.2L581 847.3L573.9 655.2L574.7 657.9L576.8 660.4L580 662.3L584.1 663.5L588.6 663.8L593.1 663.2L597.2 661.8L600.3 659.8L602.3 657.2L602.9 654.4Z" fill="url(#sh)"/><path d="M598.5 661.1L595.4 662.6L591.8 663.5L588.1 663.8L584.3 663.5L580.8 662.6L577.9 661.1L575.6 659.3L574.3 657.1L573.9 654.8L574.6 652.5L576.1 650.4L578.5 648.5L581.5 647.1L585 646.3L588.8 646L592.5 646.3L595.9 647.1L598.8 648.5L601.1 650.4L602.4 652.5L602.9 654.8L602.3 657.1L600.8 659.3Z" fill="#5fc288"/>
<path d="M704.4 853.3L703.7 856.2L701.7 858.7L698.8 860.6L695.2 861.7L691.3 862L687.4 861.3L683.9 859.7L681.3 857.4L679.6 854.7L679.2 851.7L680.1 829.9L680.6 832.9L682.2 835.6L685 837.8L688.5 839.4L692.4 840.1L696.5 839.9L700.1 838.8L703.1 836.8L705 834.3L705.8 831.5Z" fill="#dd5850"/><path d="M705.7 832.7L705 835.6L703 838.1L700.1 840L696.4 841.2L692.4 841.4L688.4 840.7L684.9 839.1L682.2 836.8L680.5 834.1L680.1 831.2L681 810.8L681.4 813.8L683.1 816.5L685.9 818.8L689.4 820.3L693.5 821L697.5 820.8L701.3 819.7L704.3 817.8L706.2 815.2L707 812.4Z" fill="#e8a74e"/><path d="M706.9 813.7L706.1 816.5L704.2 819.1L701.2 821L697.5 822.1L693.4 822.3L689.4 821.6L685.8 820.1L683 817.8L681.3 815.1L680.9 812.1L681.8 790L682.3 793L684 795.7L686.8 797.9L690.5 799.5L694.6 800.2L698.7 800L702.5 798.8L705.5 796.9L707.5 794.4L708.3 791.6Z" fill="#b29540"/><path d="M708.2 792.9L707.4 795.8L705.4 798.3L702.4 800.2L698.6 801.3L694.5 801.5L690.4 800.8L686.8 799.3L684 797L682.2 794.3L681.8 791.4L682.7 768.9L683.2 771.8L685 774.5L687.8 776.7L691.5 778.3L695.7 779L699.9 778.8L703.7 777.7L706.8 775.8L708.9 773.3L709.6 770.4Z" fill="#c4c562"/><path d="M709.5 771.8L708.8 774.6L706.7 777.1L703.7 779.1L699.8 780.2L695.6 780.4L691.4 779.7L687.8 778.1L684.9 775.9L683.2 773.2L682.7 770.3L683.6 748.6L684.1 751.5L685.9 754.2L688.8 756.4L692.5 758L696.8 758.7L701 758.5L704.9 757.4L708.1 755.5L710.1 753L710.9 750.1Z" fill="#798948"/><path d="M710.8 751.6L710 754.4L708 756.9L704.8 758.8L701 759.9L696.7 760.1L692.5 759.4L688.7 757.9L685.8 755.6L684 752.9L683.5 750.1L684.5 727L685 729.9L686.8 732.5L689.8 734.8L693.6 736.3L697.9 737L702.2 736.8L706.2 735.7L709.4 733.8L711.5 731.3L712.3 728.5Z" fill="#82bd5c"/><path d="M712.2 730L711.4 732.8L709.3 735.3L706.1 737.2L702.2 738.3L697.8 738.5L693.5 737.8L689.7 736.3L686.8 734L685 731.3L684.5 728.5L685.8 696.3L686.3 699.2L688.2 701.8L691.2 704L695.1 705.6L699.5 706.3L704 706L708 704.9L711.3 703.1L713.4 700.6L714.2 697.8Z" fill="#2ca638"/><path d="M714.1 699.4L713.3 702.2L711.2 704.6L707.9 706.5L703.9 707.6L699.4 707.8L695 707.1L691.1 705.6L688.1 703.4L686.3 700.7L685.8 697.9L687.3 661.8L687.8 664.6L689.7 667.2L692.8 669.4L696.8 670.9L701.4 671.6L705.9 671.4L710.1 670.3L713.4 668.4L715.6 666L716.4 663.3Z" fill="#54a77b"/><path d="M704.4 853.3L703.7 856.2L701.7 858.7L698.8 860.6L695.2 861.7L691.3 862L687.4 861.3L683.9 859.7L681.3 857.4L679.6 854.7L679.2 851.7L687.3 661.8L687.8 664.6L689.7 667.2L692.8 669.4L696.8 670.9L701.4 671.6L705.9 671.4L710.1 670.3L713.4 668.4L715.6 666L716.4 663.3Z" fill="url(#sh)"/><path d="M712.7 668.9L709.8 670.4L706.3 671.3L702.6 671.6L698.8 671.3L695.1 670.4L692 668.9L689.6 667.1L688 664.9L687.3 662.5L687.6 660.2L689 658L691.1 656.2L694 654.8L697.4 653.9L701.1 653.6L704.9 653.9L708.4 654.8L711.5 656.2L714 658L715.6 660.2L716.4 662.5L716.1 664.8L714.8 667Z" fill="#5fc288"/>
<path d="M435.1 853.2L435 856.1L433.6 859L431.2 861.6L427.8 863.5L424 864.7L420 865L416.2 864.4L413.1 862.9L410.9 860.6L409.8 857.9L405.5 833.5L406.6 836.3L408.8 838.5L412 840L415.9 840.7L420 840.4L423.9 839.2L427.3 837.2L429.8 834.7L431.2 831.8L431.3 828.8Z" fill="#dd5850"/><path d="M431.5 830.1L431.4 833L430 835.9L427.5 838.5L424.1 840.5L420.2 841.7L416.1 841.9L412.2 841.3L409 839.8L406.8 837.5L405.7 834.8L403.6 822.7L404.7 825.5L406.9 827.7L410.2 829.2L414 829.9L418.2 829.6L422.1 828.4L425.6 826.4L428.1 823.9L429.5 821L429.6 818Z" fill="#e8a74e"/><path d="M429.8 819.3L429.7 822.3L428.3 825.1L425.8 827.7L422.4 829.7L418.4 830.9L414.3 831.2L410.4 830.5L407.2 829L404.9 826.8L403.8 824L398.9 795.7L399.9 798.5L402.2 800.7L405.5 802.2L409.5 802.8L413.7 802.6L417.8 801.4L421.3 799.4L423.9 796.8L425.3 794L425.5 791.1Z" fill="#b29540"/><path d="M425.7 792.4L425.5 795.3L424.1 798.2L421.5 800.7L418 802.7L413.9 803.9L409.7 804.2L405.8 803.5L402.5 802L400.2 799.8L399.1 797.1L394.7 772.3L395.8 775L398.2 777.2L401.5 778.8L405.5 779.4L409.8 779.1L414 777.9L417.5 776L420.2 773.4L421.7 770.6L421.8 767.7Z" fill="#c4c562"/><path d="M422.1 769.1L421.9 772L420.4 774.8L417.8 777.4L414.2 779.3L410.1 780.5L405.8 780.8L401.7 780.2L398.4 778.6L396.1 776.4L395 773.7L391.1 751.6L392.2 754.3L394.5 756.5L397.9 758L402 758.7L406.4 758.4L410.6 757.2L414.2 755.3L417 752.7L418.5 749.9L418.6 747Z" fill="#798948"/><path d="M418.9 748.4L418.7 751.3L417.2 754.2L414.5 756.7L410.8 758.7L406.6 759.8L402.3 760.1L398.2 759.5L394.8 758L392.4 755.8L391.3 753.1L387 728.2L388.1 730.9L390.5 733.1L393.9 734.6L398.1 735.2L402.5 734.9L406.8 733.8L410.5 731.8L413.3 729.3L414.8 726.5L415 723.6Z" fill="#82bd5c"/><path d="M415.2 725.1L415.1 728L413.5 730.8L410.8 733.3L407 735.3L402.8 736.4L398.3 736.7L394.2 736.1L390.7 734.6L388.3 732.4L387.2 729.7L382.7 703.9L383.8 706.6L386.2 708.8L389.7 710.3L394 710.9L398.5 710.6L402.9 709.5L406.6 707.5L409.5 705L411.1 702.2L411.3 699.4Z" fill="#2ca638"/><path d="M411.5 700.9L411.3 703.8L409.7 706.6L406.9 709.1L403.1 711L398.7 712.2L394.2 712.4L390 711.8L386.5 710.3L384.1 708.1L383 705.5L376.8 670.3L377.9 672.9L380.4 675.1L383.9 676.5L388.3 677.2L392.9 676.9L397.4 675.7L401.3 673.8L404.2 671.3L405.8 668.6L406.1 665.7Z" fill="#54a77b"/><path d="M435.1 853.2L435 856.1L433.6 859L431.2 861.6L427.8 863.5L424 864.7L420 865L416.2 864.4L413.1 862.9L410.9 860.6L409.8 857.9L376.8 670.3L377.9 672.9L380.4 675.1L383.9 676.5L388.3 677.2L392.9 676.9L397.4 675.7L401.3 673.8L404.2 671.3L405.8 668.6L406.1 665.7Z" fill="url(#sh)"/><path d="M400.2 674.5L396.8 675.9L393.1 676.9L389.2 677.2L385.5 676.9L382.1 675.9L379.5 674.5L377.7 672.6L376.8 670.4L376.9 668L378 665.7L380 663.5L382.8 661.6L386.2 660.2L389.9 659.3L393.7 659L397.3 659.3L400.6 660.2L403.2 661.6L405.1 663.5L406 665.6L406 668L404.9 670.3L403 672.6Z" fill="#5fc288"/>
<path d="M803.8 860.1L802.8 862.9L800.6 865.2L797.6 866.9L793.8 867.6L789.8 867.5L785.9 866.4L782.6 864.5L780 862L778.6 859.2L778.4 856.2L781.2 833.4L781.4 836.4L782.9 839.3L785.5 841.8L788.9 843.7L792.9 844.7L796.9 844.9L800.7 844.1L803.9 842.4L806.1 840.1L807 837.3Z" fill="#dd5850"/><path d="M806.9 838.6L805.9 841.4L803.7 843.7L800.6 845.4L796.8 846.1L792.7 846L788.7 844.9L785.3 843L782.7 840.5L781.3 837.7L781.1 834.7L783.7 813.5L783.9 816.4L785.4 819.3L788 821.8L791.5 823.7L795.5 824.7L799.7 824.9L803.5 824.1L806.7 822.5L808.9 820.1L809.9 817.3Z" fill="#e8a74e"/><path d="M809.7 818.7L808.7 821.4L806.5 823.8L803.4 825.4L799.5 826.2L795.4 826.1L791.3 825L787.9 823.1L785.2 820.6L783.7 817.7L783.5 814.8L786.4 791.7L786.6 794.6L788.1 797.5L790.8 799.9L794.4 801.8L798.5 802.9L802.7 803L806.6 802.2L809.8 800.6L812.1 798.3L813.1 795.5Z" fill="#b29540"/><path d="M812.9 796.9L811.9 799.6L809.7 802L806.4 803.6L802.5 804.4L798.3 804.2L794.2 803.2L790.6 801.3L788 798.8L786.4 795.9L786.2 793L789.1 769.5L789.4 772.4L790.9 775.2L793.6 777.7L797.3 779.6L801.4 780.6L805.7 780.8L809.7 780L813 778.4L815.3 776L816.3 773.3Z" fill="#c4c562"/><path d="M816.1 774.7L815.1 777.5L812.8 779.8L809.5 781.4L805.5 782.2L801.2 782L797.1 781L793.5 779.1L790.7 776.6L789.2 773.8L788.9 770.9L791.7 748.1L792 751.1L793.6 753.9L796.4 756.4L800 758.2L804.3 759.3L808.7 759.4L812.7 758.6L816.1 757L818.3 754.7L819.4 752Z" fill="#798948"/><path d="M819.2 753.4L818.1 756.2L815.8 758.5L812.5 760.1L808.5 760.9L804.1 760.7L799.9 759.7L796.2 757.8L793.4 755.3L791.8 752.5L791.6 749.6L794.6 725.3L794.8 728.2L796.4 731.1L799.3 733.5L803 735.4L807.3 736.4L811.8 736.6L815.9 735.8L819.3 734.2L821.6 731.9L822.7 729.1Z" fill="#82bd5c"/><path d="M822.4 730.6L821.4 733.4L819.1 735.7L815.7 737.3L811.6 738.1L807.1 737.9L802.8 736.9L799.1 735L796.3 732.6L794.6 729.7L794.4 726.8L797.7 699.8L798 702.7L799.7 705.5L802.5 707.9L806.4 709.7L810.8 710.8L815.3 710.9L819.5 710.2L822.9 708.5L825.3 706.3L826.3 703.6Z" fill="#2ca638"/><path d="M826.1 705.1L825.1 707.8L822.7 710.1L819.3 711.7L815.1 712.5L810.6 712.3L806.2 711.3L802.3 709.5L799.5 707L797.8 704.2L797.5 701.3L800.4 678L800.7 680.9L802.4 683.7L805.3 686.1L809.2 687.9L813.7 689L818.3 689.1L822.6 688.3L826.1 686.7L828.4 684.5L829.5 681.8Z" fill="#54a77b"/><path d="M803.8 860.1L802.8 862.9L800.6 865.2L797.6 866.9L793.8 867.6L789.8 867.5L785.9 866.4L782.6 864.5L780 862L778.6 859.2L778.4 856.2L800.4 678L800.7 680.9L802.4 683.7L805.3 686.1L809.2 687.9L813.7 689L818.3 689.1L822.6 688.3L826.1 686.7L828.4 684.5L829.5 681.8Z" fill="url(#sh)"/><path d="M826.5 686.4L823.8 687.9L820.5 688.8L816.7 689.2L812.9 688.8L809.2 687.9L805.9 686.4L803.2 684.5L801.3 682.3L800.4 679.9L800.5 677.5L801.5 675.3L803.5 673.5L806.2 672L809.5 671.1L813.1 670.8L816.9 671.1L820.5 672L823.8 673.5L826.5 675.3L828.4 677.5L829.4 679.9L829.4 682.3L828.4 684.5Z" fill="#5fc288"/>
<path d="M533.3 859.9L533 862.9L531.4 865.7L528.8 868.1L525.4 869.8L521.4 870.7L517.5 870.6L513.8 869.6L510.8 867.8L508.8 865.3L507.9 862.4L505.8 840L506.6 842.9L508.7 845.4L511.7 847.2L515.4 848.2L519.5 848.3L523.5 847.4L527 845.7L529.7 843.3L531.3 840.5L531.6 837.5Z" fill="#dd5850"/><path d="M531.7 838.8L531.4 841.7L529.8 844.6L527.1 847L523.6 848.7L519.6 849.5L515.6 849.5L511.8 848.5L508.8 846.6L506.7 844.2L505.9 841.3L503.9 820.4L504.7 823.3L506.8 825.8L509.9 827.6L513.7 828.6L517.8 828.7L521.9 827.8L525.4 826.1L528.1 823.7L529.8 820.9L530.1 817.9Z" fill="#e8a74e"/><path d="M530.2 819.2L529.9 822.2L528.3 825L525.5 827.4L522 829.1L517.9 830L513.8 829.9L510 828.9L506.9 827.1L504.8 824.6L504 821.7L501.8 799L502.7 801.9L504.8 804.3L507.9 806.2L511.8 807.2L516 807.2L520.1 806.4L523.7 804.6L526.5 802.3L528.1 799.5L528.5 796.5Z" fill="#b29540"/><path d="M528.6 797.8L528.2 800.8L526.6 803.6L523.8 806L520.2 807.7L516.1 808.6L511.9 808.5L508 807.5L504.9 805.7L502.8 803.2L501.9 800.4L499.7 777.2L500.6 780.1L502.7 782.5L505.9 784.3L509.8 785.3L514.1 785.4L518.3 784.5L522 782.8L524.8 780.5L526.5 777.7L526.8 774.7Z" fill="#c4c562"/><path d="M527 776.1L526.6 779L524.9 781.9L522.1 784.2L518.4 785.9L514.2 786.8L509.9 786.7L506 785.7L502.8 783.9L500.7 781.5L499.8 778.6L497.7 756.3L498.5 759.1L500.7 761.6L503.9 763.4L507.9 764.4L512.3 764.4L516.5 763.6L520.3 761.9L523.2 759.5L524.9 756.7L525.3 753.8Z" fill="#798948"/><path d="M525.4 755.2L525 758.2L523.3 761L520.4 763.3L516.7 765L512.4 765.9L508.1 765.8L504.1 764.8L500.8 763L498.7 760.6L497.8 757.7L495.5 734L496.4 736.8L498.6 739.2L501.9 741L505.9 742L510.4 742.1L514.7 741.2L518.5 739.5L521.4 737.2L523.2 734.4L523.6 731.5Z" fill="#82bd5c"/><path d="M523.7 732.9L523.3 735.9L521.5 738.7L518.6 741L514.8 742.7L510.5 743.6L506.1 743.5L502 742.5L498.7 740.7L496.5 738.3L495.6 735.4L493.1 708.9L494 711.7L496.2 714.1L499.6 715.9L503.7 716.9L508.2 717L512.6 716.1L516.5 714.4L519.5 712.1L521.3 709.3L521.7 706.4Z" fill="#2ca638"/><path d="M521.8 708L521.4 710.9L519.6 713.6L516.6 716L512.7 717.7L508.3 718.5L503.8 718.4L499.7 717.5L496.4 715.7L494.1 713.3L493.2 710.5L490.5 682.5L491.4 685.3L493.7 687.7L497.1 689.4L501.3 690.4L505.9 690.5L510.4 689.6L514.4 688L517.4 685.6L519.2 682.9L519.7 680Z" fill="#54a77b"/><path d="M533.3 859.9L533 862.9L531.4 865.7L528.8 868.1L525.4 869.8L521.4 870.7L517.5 870.6L513.8 869.6L510.8 867.8L508.8 865.3L507.9 862.4L490.5 682.5L491.4 685.3L493.7 687.7L497.1 689.4L501.3 690.4L505.9 690.5L510.4 689.6L514.4 688L517.4 685.6L519.2 682.9L519.7 680Z" fill="url(#sh)"/><path d="M514.6 687.8L511.4 689.3L507.8 690.2L503.9 690.6L500.2 690.2L496.8 689.3L493.9 687.8L491.9 685.9L490.7 683.7L490.6 681.3L491.4 678.9L493.1 676.7L495.7 674.8L498.9 673.3L502.5 672.4L506.3 672.1L509.9 672.4L513.3 673.3L516.1 674.8L518.2 676.7L519.4 678.9L519.7 681.2L518.9 683.6L517.2 685.9Z" fill="#5fc288"/>
<path d="M632.5 866.8L632 869.8L630.2 872.5L627.4 874.7L623.8 876.1L619.8 876.6L615.9 876.1L612.3 874.8L609.4 872.6L607.6 869.9L607 866.9L606.6 842L607.3 845L609.1 847.7L612 849.8L615.6 851.2L619.7 851.6L623.7 851.1L627.4 849.7L630.3 847.6L632.1 844.8L632.7 841.9Z" fill="#dd5850"/><path d="M632.7 843.1L632.1 846.1L630.3 848.8L627.4 851L623.8 852.4L619.7 852.9L615.7 852.5L612 851.1L609.1 849L607.3 846.3L606.7 843.3L606.3 820L606.9 823L608.8 825.6L611.7 827.8L615.4 829.1L619.6 829.6L623.7 829.1L627.4 827.7L630.3 825.5L632.2 822.8L632.8 819.8Z" fill="#e8a74e"/><path d="M632.8 821.1L632.2 824.1L630.3 826.8L627.4 829L623.7 830.4L619.6 830.9L615.5 830.5L611.7 829.1L608.8 827L606.9 824.3L606.3 821.3L605.9 795.8L606.5 798.8L608.4 801.5L611.4 803.6L615.2 805L619.4 805.4L623.6 804.9L627.4 803.5L630.4 801.3L632.3 798.6L632.9 795.7Z" fill="#b29540"/><path d="M632.9 797L632.3 800L630.4 802.7L627.4 804.9L623.6 806.3L619.5 806.8L615.2 806.3L611.5 805L608.5 802.8L606.6 800.2L605.9 797.2L605.5 771.1L606.2 774.1L608.1 776.7L611.2 778.9L615 780.2L619.3 780.7L623.6 780.2L627.4 778.8L630.5 776.6L632.4 773.9L633 771Z" fill="#c4c562"/><path d="M633 772.4L632.4 775.3L630.5 778L627.4 780.2L623.6 781.6L619.3 782.1L615 781.6L611.2 780.3L608.1 778.2L606.2 775.5L605.5 772.6L605.1 747.3L605.8 750.2L607.8 752.9L610.9 755L614.8 756.3L619.2 756.8L623.5 756.3L627.5 754.9L630.5 752.8L632.5 750.1L633.1 747.1Z" fill="#798948"/><path d="M633.1 748.6L632.5 751.6L630.5 754.2L627.5 756.4L623.5 757.8L619.2 758.3L614.8 757.8L610.9 756.5L607.8 754.4L605.8 751.7L605.1 748.8L604.8 725.5L605.5 728.5L607.5 731.1L610.6 733.2L614.6 734.5L619.1 735L623.5 734.5L627.5 733.1L630.6 731L632.6 728.3L633.2 725.4Z" fill="#82bd5c"/><path d="M633.2 726.9L632.6 729.8L630.6 732.5L627.5 734.6L623.5 736L619.1 736.5L614.6 736.1L610.6 734.7L607.5 732.6L605.5 730L604.8 727.1L604.3 695.9L605 698.8L607 701.4L610.3 703.5L614.4 704.8L618.9 705.2L623.4 704.7L627.5 703.4L630.7 701.3L632.7 698.6L633.4 695.7Z" fill="#2ca638"/><path d="M633.4 697.3L632.7 700.2L630.7 702.8L627.5 705L623.4 706.3L618.9 706.8L614.4 706.4L610.3 705.1L607.1 703L605 700.4L604.3 697.5L603.8 665.3L604.5 668.2L606.6 670.8L609.9 672.9L614.1 674.2L618.7 674.6L623.4 674.1L627.5 672.8L630.8 670.7L632.9 668L633.5 665.2Z" fill="#54a77b"/><path d="M632.5 866.8L632 869.8L630.2 872.5L627.4 874.7L623.8 876.1L619.8 876.6L615.9 876.1L612.3 874.8L609.4 872.6L607.6 869.9L607 866.9L603.8 665.3L604.5 668.2L606.6 670.8L609.9 672.9L614.1 674.2L618.7 674.6L623.4 674.1L627.5 672.8L630.8 670.7L632.9 668L633.5 665.2Z" fill="url(#sh)"/><path d="M629.2 671.8L626.1 673.3L622.5 674.3L618.6 674.6L614.7 674.3L611.1 673.3L608.1 671.9L605.7 669.9L604.3 667.7L603.8 665.3L604.4 662.9L605.9 660.7L608.3 658.8L611.4 657.3L614.9 656.4L618.7 656.1L622.6 656.4L626.1 657.3L629.2 658.8L631.5 660.6L633 662.9L633.5 665.2L633 667.6L631.6 669.9Z" fill="#5fc288"/>
<path d="M732.8 873.8L732 876.7L729.9 879.3L726.9 881.2L723.2 882.3L719.2 882.4L715.2 881.5L711.8 879.8L709.1 877.4L707.5 874.5L707.1 871.5L708.9 845.2L709.3 848.3L710.9 851.1L713.6 853.6L717.2 855.3L721.2 856.1L725.3 856L729.1 854.9L732.2 853L734.2 850.5L735.1 847.5Z" fill="#dd5850"/><path d="M735 848.8L734.1 851.8L732.1 854.3L729 856.2L725.2 857.3L721.1 857.4L717.1 856.5L713.5 854.8L710.8 852.4L709.2 849.5L708.8 846.5L710.4 821.9L710.8 824.9L712.5 827.8L715.3 830.2L718.9 831.9L723 832.8L727.2 832.7L731.1 831.6L734.2 829.7L736.3 827.2L737.1 824.2Z" fill="#e8a74e"/><path d="M737 825.5L736.2 828.5L734.1 831L730.9 832.9L727.1 834L722.9 834.1L718.8 833.3L715.2 831.5L712.4 829.1L710.7 826.3L710.3 823.2L712.1 796.3L712.5 799.3L714.2 802.1L717.1 804.5L720.8 806.3L725 807.1L729.3 807L733.2 805.9L736.4 804L738.5 801.5L739.4 798.6Z" fill="#b29540"/><path d="M739.2 799.9L738.4 802.9L736.3 805.4L733.1 807.3L729.2 808.4L724.9 808.5L720.7 807.6L717 805.9L714.1 803.5L712.4 800.7L712 797.6L713.9 770L714.3 773L716 775.8L718.9 778.2L722.7 779.9L727 780.8L731.4 780.6L735.4 779.6L738.6 777.7L740.8 775.2L741.7 772.3Z" fill="#c4c562"/><path d="M741.5 773.7L740.7 776.6L738.5 779.1L735.3 781L731.3 782.1L726.9 782.2L722.6 781.4L718.8 779.7L715.9 777.3L714.2 774.4L713.8 771.4L715.5 744.6L716 747.6L717.8 750.4L720.7 752.8L724.6 754.5L729 755.4L733.4 755.2L737.5 754.2L740.8 752.3L743 749.8L743.9 746.9Z" fill="#798948"/><path d="M743.8 748.4L742.9 751.3L740.7 753.8L737.4 755.7L733.3 756.7L728.8 756.8L724.5 756L720.6 754.3L717.6 751.9L715.9 749.1L715.4 746.1L717.4 717.3L717.8 720.3L719.6 723.1L722.6 725.5L726.6 727.2L731.1 728L735.6 727.9L739.8 726.8L743.1 725L745.4 722.5L746.3 719.6Z" fill="#82bd5c"/><path d="M746.1 721.2L745.2 724L743 726.5L739.6 728.4L735.5 729.4L730.9 729.6L726.5 728.7L722.5 727L719.5 724.7L717.7 721.9L717.3 718.9L719.4 686.7L719.8 689.7L721.7 692.4L724.8 694.8L728.9 696.5L733.4 697.3L738.1 697.2L742.3 696.1L745.8 694.3L748.1 691.8L749 688.9Z" fill="#2ca638"/><path d="M748.8 690.6L747.9 693.4L745.6 695.9L742.2 697.7L737.9 698.8L733.3 698.9L728.7 698.1L724.7 696.4L721.6 694.1L719.7 691.3L719.3 688.3L721.4 656.7L721.8 659.6L723.8 662.4L726.9 664.7L731.1 666.3L735.7 667.2L740.5 667L744.8 666L748.3 664.2L750.7 661.7L751.6 658.9Z" fill="#54a77b"/><path d="M732.8 873.8L732 876.7L729.9 879.3L726.9 881.2L723.2 882.3L719.2 882.4L715.2 881.5L711.8 879.8L709.1 877.4L707.5 874.5L707.1 871.5L721.4 656.7L721.8 659.6L723.8 662.4L726.9 664.7L731.1 666.3L735.7 667.2L740.5 667L744.8 666L748.3 664.2L750.7 661.7L751.6 658.9Z" fill="url(#sh)"/><path d="M748 664.4L745 665.9L741.5 666.9L737.6 667.2L733.6 666.9L729.8 666L726.5 664.5L723.9 662.5L722.1 660.2L721.4 657.8L721.6 655.4L722.9 653.2L725.1 651.3L728 649.8L731.5 648.9L735.4 648.6L739.3 648.9L743 649.8L746.3 651.3L748.9 653.2L750.7 655.4L751.5 657.8L751.4 660.2L750.1 662.5Z" fill="#5fc288"/>
<path d="M458.7 873.5L458.6 876.6L457.2 879.6L454.6 882.2L451.2 884.2L447.3 885.3L443.2 885.6L439.4 884.8L436.3 883.2L434 880.8L433 878L429.7 857L430.7 859.8L432.9 862.2L436.2 863.8L440 864.6L444.2 864.4L448.2 863.2L451.7 861.2L454.2 858.6L455.7 855.6L455.8 852.6Z" fill="#dd5850"/><path d="M456 853.8L455.8 856.9L454.4 859.9L451.8 862.5L448.4 864.5L444.4 865.6L440.2 865.9L436.4 865.1L433.1 863.5L430.9 861.1L429.9 858.2L425.7 832.1L426.7 835L429 837.3L432.3 839L436.3 839.7L440.5 839.5L444.6 838.3L448.1 836.3L450.7 833.7L452.2 830.7L452.4 827.7Z" fill="#e8a74e"/><path d="M452.6 829L452.4 832.1L450.9 835L448.3 837.6L444.8 839.6L440.7 840.8L436.5 841L432.5 840.3L429.2 838.6L426.9 836.3L425.9 833.4L422.2 810.5L423.3 813.3L425.6 815.7L428.9 817.3L433 818.1L437.3 817.9L441.4 816.7L445 814.7L447.7 812.1L449.2 809.1L449.4 806.1Z" fill="#b29540"/><path d="M449.6 807.5L449.4 810.5L447.9 813.5L445.2 816.1L441.6 818.1L437.5 819.2L433.2 819.4L429.1 818.7L425.8 817.1L423.5 814.7L422.4 811.9L417.2 779.2L418.3 782L420.7 784.3L424.1 786L428.2 786.7L432.6 786.5L436.9 785.3L440.6 783.4L443.3 780.8L444.9 777.8L445.1 774.8Z" fill="#c4c562"/><path d="M445.3 776.2L445.1 779.2L443.5 782.2L440.8 784.8L437.1 786.8L432.8 787.9L428.4 788.1L424.3 787.4L420.9 785.8L418.5 783.4L417.4 780.6L415.1 766.2L416.2 769L418.6 771.4L422 773L426.2 773.7L430.7 773.5L435 772.3L438.7 770.4L441.5 767.8L443.1 764.8L443.3 761.8Z" fill="#798948"/><path d="M443.5 763.3L443.3 766.3L441.7 769.2L438.9 771.8L435.2 773.8L430.9 775L426.4 775.2L422.3 774.4L418.8 772.8L416.5 770.5L415.4 767.7L411.5 743.5L412.6 746.3L415 748.6L418.5 750.3L422.7 751L427.3 750.8L431.7 749.6L435.5 747.7L438.3 745.1L439.9 742.2L440.2 739.2Z" fill="#82bd5c"/><path d="M440.4 740.7L440.2 743.7L438.5 746.6L435.7 749.2L431.9 751.1L427.5 752.3L423 752.5L418.7 751.8L415.3 750.2L412.9 747.8L411.8 745L407.4 717.6L408.5 720.4L410.9 722.7L414.5 724.3L418.8 725.1L423.4 724.8L427.9 723.7L431.8 721.7L434.7 719.2L436.4 716.3L436.6 713.3Z" fill="#2ca638"/><path d="M436.8 714.9L436.6 717.8L434.9 720.7L432 723.3L428.1 725.3L423.6 726.4L419 726.6L414.7 725.9L411.2 724.3L408.7 722L407.6 719.2L402.7 688L403.8 690.8L406.3 693.1L409.9 694.7L414.3 695.4L419 695.2L423.6 694.1L427.6 692.1L430.6 689.6L432.3 686.7L432.5 683.8Z" fill="#54a77b"/><path d="M458.7 873.5L458.6 876.6L457.2 879.6L454.6 882.2L451.2 884.2L447.3 885.3L443.2 885.6L439.4 884.8L436.3 883.2L434 880.8L433 878L402.7 688L403.8 690.8L406.3 693.1L409.9 694.7L414.3 695.4L419 695.2L423.6 694.1L427.6 692.1L430.6 689.6L432.3 686.7L432.5 683.8Z" fill="url(#sh)"/><path d="M426.8 692.6L423.3 694.2L419.5 695.1L415.6 695.5L411.8 695.1L408.3 694.2L405.6 692.6L403.7 690.7L402.7 688.4L402.8 685.9L403.8 683.5L405.8 681.2L408.6 679.3L412 677.8L415.8 676.8L419.6 676.5L423.4 676.8L426.7 677.8L429.5 679.2L431.4 681.2L432.5 683.4L432.5 685.9L431.5 688.3L429.5 690.6Z" fill="#5fc288"/>
<path d="M834.1 880.8L833 883.7L830.7 886L827.5 887.6L823.7 888.3L819.6 888.1L815.7 886.8L812.3 884.8L809.8 882.1L808.4 879.1L808.3 876.1L811.8 852.8L811.9 855.8L813.3 858.8L815.9 861.5L819.3 863.5L823.3 864.8L827.5 865L831.4 864.3L834.7 862.7L837 860.4L838.1 857.6Z" fill="#dd5850"/><path d="M837.9 858.8L836.8 861.7L834.5 864L831.2 865.6L827.3 866.3L823.1 866L819.1 864.8L815.7 862.8L813.1 860.1L811.7 857.1L811.6 854L814.1 837.1L814.3 840.1L815.7 843.2L818.3 845.8L821.8 847.9L825.9 849.1L830.1 849.4L834.1 848.7L837.4 847.1L839.7 844.7L840.8 841.9Z" fill="#e8a74e"/><path d="M840.5 843.2L839.4 846L837.1 848.4L833.8 850L829.9 850.7L825.7 850.4L821.6 849.2L818.1 847.1L815.5 844.5L814.1 841.5L813.9 838.4L818.8 805.8L819 808.8L820.4 811.8L823.1 814.4L826.7 816.5L830.9 817.7L835.2 818L839.3 817.3L842.7 815.7L845 813.4L846.2 810.5Z" fill="#b29540"/><path d="M845.9 811.9L844.8 814.7L842.5 817.1L839.1 818.7L835 819.3L830.7 819.1L826.5 817.9L822.9 815.8L820.2 813.2L818.8 810.2L818.6 807.1L821.5 787.5L821.7 790.5L823.2 793.5L825.9 796.2L829.6 798.2L833.9 799.4L838.3 799.7L842.4 799L845.8 797.4L848.2 795.1L849.3 792.2Z" fill="#c4c562"/><path d="M849.1 793.6L847.9 796.5L845.6 798.8L842.1 800.4L838 801.1L833.6 800.8L829.4 799.6L825.7 797.6L823 794.9L821.5 791.9L821.3 788.9L826.2 756.2L826.4 759.2L828 762.2L830.8 764.8L834.5 766.8L838.9 768L843.4 768.3L847.6 767.6L851.1 766L853.5 763.7L854.7 760.9Z" fill="#798948"/><path d="M854.4 762.4L853.3 765.2L850.9 767.5L847.4 769.1L843.2 769.8L838.7 769.5L834.3 768.3L830.6 766.3L827.8 763.6L826.2 760.7L826 757.7L830.5 727.5L830.7 730.5L832.4 733.5L835.2 736.1L839.1 738.1L843.5 739.3L848.1 739.5L852.4 738.9L856 737.3L858.5 735L859.6 732.2Z" fill="#82bd5c"/><path d="M859.3 733.7L858.2 736.5L855.7 738.8L852.2 740.4L847.9 741.1L843.3 740.8L838.8 739.6L835 737.6L832.1 735L830.5 732L830.3 729L834.4 701.5L834.7 704.4L836.3 707.4L839.2 710L843.2 711.9L847.7 713.1L852.4 713.4L856.8 712.7L860.4 711.2L862.9 708.9L864.1 706.1Z" fill="#2ca638"/><path d="M863.8 707.7L862.7 710.5L860.2 712.8L856.5 714.3L852.2 715L847.5 714.7L842.9 713.6L839 711.6L836.1 709L834.4 706L834.2 703.1L838.6 673.8L838.8 676.8L840.5 679.7L843.5 682.2L847.5 684.2L852.2 685.4L857 685.7L861.5 685L865.1 683.4L867.7 681.2L868.9 678.4Z" fill="#54a77b"/><path d="M834.1 880.8L833 883.7L830.7 886L827.5 887.6L823.7 888.3L819.6 888.1L815.7 886.8L812.3 884.8L809.8 882.1L808.4 879.1L808.3 876.1L838.6 673.8L838.8 676.8L840.5 679.7L843.5 682.2L847.5 684.2L852.2 685.4L857 685.7L861.5 685L865.1 683.4L867.7 681.2L868.9 678.4Z" fill="url(#sh)"/><path d="M866 682.9L863.2 684.4L859.8 685.4L856 685.7L852 685.4L848.1 684.4L844.6 682.9L841.7 680.9L839.7 678.6L838.6 676.1L838.6 673.7L839.6 671.4L841.5 669.5L844.3 668L847.7 667.1L851.4 666.7L855.4 667L859.2 668L862.7 669.5L865.5 671.4L867.6 673.7L868.7 676.1L868.8 678.6L867.9 680.9Z" fill="#5fc288"/>
<path d="M558.8 880.6L558.4 883.7L556.8 886.6L554.1 889L550.6 890.7L546.6 891.5L542.5 891.3L538.8 890.2L535.8 888.2L533.8 885.6L533 882.6L531.1 858.5L531.9 861.5L534 864.1L537 866.1L540.8 867.2L545 867.4L549.1 866.6L552.6 864.9L555.4 862.5L557.1 859.6L557.5 856.5Z" fill="#dd5850"/><path d="M557.6 857.7L557.2 860.8L555.5 863.7L552.7 866.2L549.1 867.9L545.1 868.7L540.9 868.5L537.1 867.4L534.1 865.4L532 862.8L531.2 859.8L529.5 837.3L530.3 840.3L532.4 842.9L535.5 844.9L539.3 846L543.6 846.2L547.7 845.3L551.4 843.6L554.2 841.2L555.9 838.3L556.3 835.2Z" fill="#e8a74e"/><path d="M556.4 836.6L556 839.6L554.3 842.5L551.4 845L547.8 846.7L543.6 847.5L539.4 847.3L535.6 846.2L532.5 844.2L530.4 841.6L529.6 838.6L527.7 814L528.5 817L530.6 819.6L533.8 821.6L537.7 822.7L542 822.8L546.2 822L550 820.3L552.8 817.9L554.6 815L555 812Z" fill="#b29540"/><path d="M555.1 813.3L554.6 816.4L552.9 819.3L550 821.7L546.3 823.4L542.1 824.2L537.8 824L533.9 822.9L530.7 821L528.6 818.3L527.8 815.4L525.8 790.2L526.7 793.2L528.8 795.8L532 797.8L536 798.9L540.4 799L544.7 798.2L548.5 796.5L551.5 794.1L553.2 791.3L553.7 788.2Z" fill="#c4c562"/><path d="M553.7 789.6L553.3 792.7L551.5 795.6L548.6 798L544.8 799.7L540.5 800.5L536.1 800.3L532.2 799.2L528.9 797.2L526.8 794.6L525.9 791.6L524.1 767.3L524.9 770.3L527.1 772.9L530.4 774.8L534.4 776L538.9 776.1L543.3 775.3L547.1 773.6L550.1 771.2L551.9 768.4L552.4 765.3Z" fill="#798948"/><path d="M552.5 766.8L552 769.8L550.2 772.7L547.2 775.1L543.4 776.8L539 777.6L534.5 777.4L530.5 776.3L527.2 774.4L525 771.8L524.2 768.8L522.2 742.8L523 745.8L525.2 748.3L528.6 750.3L532.7 751.4L537.2 751.5L541.7 750.7L545.7 749.1L548.7 746.7L550.5 743.8L551 740.8Z" fill="#82bd5c"/><path d="M551.1 742.3L550.6 745.4L548.8 748.2L545.8 750.6L541.8 752.3L537.3 753.1L532.8 752.9L528.7 751.8L525.4 749.9L523.1 747.3L522.3 744.3L520.3 719.1L521.2 722L523.4 724.6L526.8 726.5L531 727.6L535.7 727.8L540.2 727L544.2 725.3L547.3 722.9L549.2 720.1L549.7 717.1Z" fill="#2ca638"/><path d="M549.8 718.7L549.3 721.7L547.4 724.5L544.3 726.9L540.3 728.6L535.8 729.3L531.2 729.2L527 728.1L523.6 726.1L521.3 723.6L520.4 720.7L518.1 690.7L519 693.6L521.3 696.1L524.8 698L529.1 699.1L533.8 699.3L538.4 698.5L542.5 696.9L545.7 694.5L547.6 691.7L548.1 688.7Z" fill="#54a77b"/><path d="M558.8 880.6L558.4 883.7L556.8 886.6L554.1 889L550.6 890.7L546.6 891.5L542.5 891.3L538.8 890.2L535.8 888.2L533.8 885.6L533 882.6L518.1 690.7L519 693.6L521.3 696.1L524.8 698L529.1 699.1L533.8 699.3L538.4 698.5L542.5 696.9L545.7 694.5L547.6 691.7L548.1 688.7Z" fill="url(#sh)"/><path d="M543.1 696.5L539.9 698L536.1 699L532.2 699.4L528.3 699L524.8 698.1L521.8 696.5L519.6 694.5L518.4 692.2L518.2 689.7L518.9 687.2L520.7 684.9L523.3 683L526.5 681.5L530.2 680.5L534 680.2L537.8 680.5L541.3 681.5L544.3 683L546.5 684.9L547.8 687.2L548.1 689.7L547.4 692.2L545.7 694.5Z" fill="#5fc288"/>
<path d="M660 887.8L659.3 890.8L657.5 893.6L654.5 895.8L650.9 897.2L646.8 897.6L642.8 897L639.2 895.5L636.3 893.2L634.6 890.3L634 887.2L634.2 863.3L634.7 866.4L636.5 869.3L639.4 871.6L643.1 873.1L647.2 873.7L651.4 873.2L655.1 871.9L658.1 869.7L660 866.9L660.7 863.9Z" fill="#dd5850"/><path d="M660.6 865.1L660 868.2L658 871L655.1 873.2L651.3 874.5L647.2 874.9L643.1 874.3L639.4 872.8L636.5 870.5L634.7 867.7L634.2 864.6L634.3 842.2L634.9 845.3L636.7 848.2L639.7 850.5L643.4 852L647.6 852.6L651.8 852.2L655.6 850.8L658.6 848.6L660.6 845.9L661.2 842.8Z" fill="#e8a74e"/><path d="M661.2 844.1L660.5 847.2L658.6 849.9L655.6 852.1L651.8 853.5L647.6 853.9L643.4 853.3L639.6 851.8L636.7 849.5L634.9 846.7L634.3 843.6L634.4 819.2L635 822.3L636.9 825.1L639.9 827.4L643.7 828.9L648 829.5L652.3 829L656.1 827.7L659.2 825.5L661.2 822.8L661.9 819.7Z" fill="#b29540"/><path d="M661.8 821.1L661.2 824.1L659.2 826.9L656.1 829.1L652.2 830.4L648 830.8L643.7 830.2L639.9 828.7L636.9 826.5L635 823.6L634.4 820.5L634.6 795.6L635.2 798.7L637.1 801.5L640.2 803.8L644 805.3L648.4 805.8L652.8 805.4L656.7 804.1L659.8 801.9L661.8 799.2L662.5 796.1Z" fill="#c4c562"/><path d="M662.5 797.5L661.8 800.6L659.8 803.3L656.7 805.5L652.7 806.8L648.4 807.3L644 806.7L640.1 805.2L637.1 802.9L635.2 800.1L634.6 797L634.7 772.9L635.3 776L637.3 778.8L640.4 781L644.4 782.5L648.8 783.1L653.2 782.7L657.2 781.4L660.4 779.2L662.5 776.5L663.2 773.4Z" fill="#798948"/><path d="M663.1 774.9L662.4 777.9L660.4 780.7L657.2 782.8L653.2 784.2L648.8 784.6L644.3 784L640.4 782.5L637.3 780.2L635.3 777.4L634.7 774.4L634.9 748.6L635.5 751.6L637.5 754.4L640.7 756.7L644.7 758.2L649.2 758.7L653.7 758.3L657.8 757L661.1 754.8L663.1 752.1L663.9 749.1Z" fill="#82bd5c"/><path d="M663.8 750.6L663.1 753.6L661 756.4L657.8 758.5L653.7 759.8L649.2 760.3L644.7 759.7L640.6 758.2L637.5 755.9L635.5 753.1L634.9 750.1L635 726.8L635.7 729.8L637.7 732.6L640.9 734.9L645 736.4L649.6 736.9L654.2 736.5L658.3 735.2L661.6 733.1L663.7 730.3L664.5 727.3Z" fill="#2ca638"/><path d="M664.4 728.9L663.7 731.9L661.6 734.6L658.3 736.8L654.1 738.1L649.5 738.5L645 737.9L640.9 736.5L637.7 734.2L635.6 731.4L635 728.4L635.1 709.3L635.8 712.3L637.8 715.1L641.1 717.3L645.2 718.8L649.9 719.4L654.5 719L658.7 717.6L662.1 715.5L664.2 712.8L665 709.8Z" fill="#54a77b"/><path d="M660 887.8L659.3 890.8L657.5 893.6L654.5 895.8L650.9 897.2L646.8 897.6L642.8 897L639.2 895.5L636.3 893.2L634.6 890.3L634 887.2L635.1 709.3L635.8 712.3L637.8 715.1L641.1 717.3L645.2 718.8L649.9 719.4L654.5 719L658.7 717.6L662.1 715.5L664.2 712.8L665 709.8Z" fill="url(#sh)"/><path d="M660.8 716.5L657.8 718L654.2 719L650.3 719.4L646.4 719L642.7 718L639.6 716.5L637.2 714.4L635.7 712.1L635.1 709.6L635.6 707L637.1 704.7L639.4 702.7L642.4 701.2L646 700.3L649.8 699.9L653.6 700.2L657.2 701.2L660.3 702.7L662.8 704.7L664.3 707L664.9 709.5L664.5 712.1L663.1 714.4Z" fill="#5fc288"/>
<path d="M762.2 895.1L761.3 898.1L759.1 900.7L756 902.5L752.2 903.5L748.1 903.5L744.1 902.5L740.6 900.6L737.9 898.1L736.4 895L736.1 891.9L738.2 868.9L738.5 872L740.1 875L742.8 877.6L746.4 879.5L750.4 880.5L754.6 880.5L758.5 879.5L761.7 877.6L763.9 875.1L764.8 872Z" fill="#dd5850"/><path d="M764.7 873.3L763.7 876.3L761.6 878.9L758.4 880.8L754.5 881.8L750.3 881.8L746.2 880.8L742.7 878.9L740 876.3L738.4 873.3L738.1 870.1L740 848.7L740.4 851.8L742 854.8L744.7 857.4L748.4 859.3L752.5 860.3L756.8 860.3L760.7 859.3L764 857.4L766.2 854.9L767.1 851.8Z" fill="#e8a74e"/><path d="M767 853.2L766 856.2L763.8 858.7L760.6 860.6L756.7 861.6L752.4 861.6L748.2 860.6L744.6 858.7L741.8 856.1L740.2 853.1L739.9 850L742.1 826.6L742.4 829.7L744 832.7L746.8 835.3L750.6 837.2L754.8 838.2L759.1 838.2L763.2 837.2L766.4 835.3L768.7 832.7L769.6 829.7Z" fill="#b29540"/><path d="M769.5 831.1L768.5 834.1L766.3 836.7L763 838.5L759 839.5L754.7 839.5L750.4 838.5L746.7 836.6L743.9 834.1L742.3 831.1L741.9 827.9L744.1 804L744.5 807.1L746.1 810.1L749 812.7L752.8 814.6L757.1 815.6L761.5 815.6L765.6 814.6L769 812.7L771.2 810.2L772.2 807.2Z" fill="#c4c562"/><path d="M772 808.6L771.1 811.6L768.8 814.1L765.5 816L761.4 817L757 817L752.7 816L748.9 814.1L746 811.5L744.3 808.5L744 805.4L746.1 782.3L746.5 785.4L748.2 788.4L751.1 791L754.9 792.8L759.3 793.8L763.8 793.8L768 792.9L771.4 791L773.7 788.4L774.7 785.5Z" fill="#798948"/><path d="M774.5 786.9L773.5 789.9L771.2 792.5L767.8 794.3L763.7 795.3L759.2 795.3L754.8 794.3L751 792.4L748 789.9L746.3 786.9L746 783.8L748.2 759.1L748.6 762.2L750.3 765.2L753.3 767.7L757.2 769.6L761.7 770.6L766.3 770.6L770.5 769.6L774 767.8L776.3 765.2L777.3 762.3Z" fill="#82bd5c"/><path d="M777.1 763.8L776.1 766.7L773.8 769.3L770.4 771.1L766.1 772.1L761.6 772.1L757.1 771.1L753.2 769.3L750.2 766.7L748.5 763.7L748.1 760.6L750.8 731.4L751.2 734.5L752.9 737.5L756 740L760 741.9L764.6 742.8L769.3 742.8L773.6 741.9L777.1 740L779.4 737.5L780.4 734.5Z" fill="#2ca638"/><path d="M780.3 736.1L779.3 739.1L776.9 741.6L773.4 743.4L769.1 744.4L764.4 744.4L759.8 743.4L755.8 741.6L752.8 739L751 736.1L750.6 733L753.2 705.3L753.6 708.4L755.4 711.4L758.5 713.9L762.6 715.7L767.3 716.7L772 716.7L776.4 715.7L780 713.9L782.4 711.4L783.4 708.4Z" fill="#54a77b"/><path d="M762.2 895.1L761.3 898.1L759.1 900.7L756 902.5L752.2 903.5L748.1 903.5L744.1 902.5L740.6 900.6L737.9 898.1L736.4 895L736.1 891.9L753.2 705.3L753.6 708.4L755.4 711.4L758.5 713.9L762.6 715.7L767.3 716.7L772 716.7L776.4 715.7L780 713.9L782.4 711.4L783.4 708.4Z" fill="url(#sh)"/><path d="M780 713.9L777.1 715.5L773.6 716.5L769.7 716.8L765.7 716.5L761.9 715.5L758.5 713.9L755.8 711.8L754 709.5L753.2 706.9L753.4 704.4L754.6 702L756.7 700L759.6 698.5L763 697.5L766.9 697.2L770.8 697.5L774.5 698.5L777.9 700L780.6 702L782.4 704.4L783.4 706.9L783.2 709.4L782.1 711.8Z" fill="#5fc288"/>
<path d="M483.2 894.7L483 897.8L481.6 900.9L479 903.6L475.5 905.6L471.5 906.7L467.3 906.9L463.5 906L460.3 904.2L458.1 901.7L457.1 898.7L454.1 878L455.1 880.9L457.4 883.5L460.6 885.2L464.5 886.1L468.7 885.9L472.8 884.8L476.4 882.8L479 880.1L480.5 877.1L480.7 873.9Z" fill="#dd5850"/><path d="M480.9 875.2L480.7 878.3L479.2 881.4L476.5 884.1L473 886.1L468.9 887.2L464.7 887.4L460.8 886.5L457.5 884.7L455.3 882.2L454.3 879.2L451 856.3L452 859.3L454.3 861.8L457.6 863.6L461.6 864.4L465.9 864.3L470.1 863.2L473.7 861.2L476.4 858.5L477.9 855.4L478.1 852.3Z" fill="#e8a74e"/><path d="M478.3 853.6L478.1 856.7L476.5 859.8L473.8 862.5L470.2 864.5L466.1 865.6L461.8 865.8L457.8 864.9L454.5 863.1L452.2 860.6L451.2 857.6L448.2 836.8L449.3 839.8L451.6 842.3L454.9 844.1L459 845L463.4 844.8L467.6 843.7L471.3 841.7L474 839L475.6 836L475.8 832.8Z" fill="#b29540"/><path d="M476 834.1L475.7 837.3L474.2 840.4L471.4 843L467.8 845L463.5 846.2L459.2 846.3L455.1 845.5L451.8 843.7L449.5 841.2L448.4 838.2L445.5 817.4L446.5 820.4L448.9 822.9L452.3 824.6L456.4 825.5L460.8 825.3L465.1 824.2L468.8 822.2L471.6 819.5L473.2 816.5L473.5 813.3Z" fill="#c4c562"/><path d="M473.6 814.7L473.4 817.9L471.8 820.9L469 823.6L465.3 825.6L461 826.7L456.6 826.9L452.4 826L449.1 824.2L446.7 821.8L445.7 818.8L442.4 795.8L443.5 798.7L445.8 801.2L449.3 803L453.5 803.9L458 803.7L462.3 802.6L466.1 800.6L469 797.9L470.6 794.9L470.9 791.8Z" fill="#798948"/><path d="M471.1 793.2L470.8 796.3L469.2 799.4L466.3 802L462.5 804L458.2 805.2L453.7 805.3L449.5 804.4L446 802.7L443.7 800.2L442.6 797.2L439 772L440.1 775L442.5 777.5L446 779.2L450.3 780.1L454.8 779.9L459.3 778.8L463.2 776.8L466.1 774.2L467.8 771.1L468 768Z" fill="#82bd5c"/><path d="M468.2 769.5L467.9 772.6L466.3 775.7L463.4 778.3L459.5 780.3L455 781.4L450.5 781.6L446.2 780.7L442.7 778.9L440.3 776.5L439.2 773.5L435.2 745L436.2 748L438.7 750.4L442.3 752.2L446.6 753L451.3 752.9L455.8 751.8L459.8 749.8L462.8 747.2L464.5 744.1L464.8 741Z" fill="#2ca638"/><path d="M465 742.6L464.7 745.7L463 748.7L460 751.3L456 753.3L451.5 754.4L446.8 754.6L442.5 753.7L438.9 752L436.5 749.5L435.4 746.6L431.6 719.9L432.7 722.9L435.2 725.3L438.8 727L443.2 727.9L448 727.7L452.6 726.6L456.7 724.7L459.7 722.1L461.5 719.1L461.8 716Z" fill="#54a77b"/><path d="M483.2 894.7L483 897.8L481.6 900.9L479 903.6L475.5 905.6L471.5 906.7L467.3 906.9L463.5 906L460.3 904.2L458.1 901.7L457.1 898.7L431.6 719.9L432.7 722.9L435.2 725.3L438.8 727L443.2 727.9L448 727.7L452.6 726.6L456.7 724.7L459.7 722.1L461.5 719.1L461.8 716Z" fill="url(#sh)"/><path d="M456.2 725L452.8 726.6L448.9 727.6L444.9 728L441.1 727.6L437.6 726.6L434.7 725L432.7 722.9L431.7 720.5L431.7 718L432.7 715.4L434.6 713L437.4 711L440.8 709.5L444.6 708.5L448.5 708.2L452.3 708.5L455.7 709.5L458.5 711L460.6 713L461.7 715.4L461.8 717.9L460.8 720.5L458.9 722.9Z" fill="#5fc288"/>
<path d="M585.3 902L584.8 905.2L583.1 908.2L580.3 910.6L576.7 912.3L572.6 913.1L568.5 912.8L564.7 911.5L561.7 909.4L559.7 906.6L559 903.5L557.7 880.5L558.5 883.7L560.5 886.4L563.5 888.6L567.4 889.8L571.6 890.1L575.7 889.4L579.4 887.7L582.3 885.2L584 882.3L584.5 879.1Z" fill="#dd5850"/><path d="M584.5 880.3L584.1 883.5L582.3 886.5L579.5 889L575.8 890.6L571.6 891.4L567.4 891.1L563.6 889.8L560.5 887.7L558.5 884.9L557.8 881.8L556.5 860.3L557.3 863.5L559.4 866.2L562.5 868.4L566.4 869.6L570.6 869.9L574.9 869.2L578.6 867.5L581.5 865.1L583.3 862.1L583.8 858.9Z" fill="#e8a74e"/><path d="M583.8 860.2L583.4 863.4L581.6 866.4L578.7 868.8L574.9 870.5L570.7 871.2L566.4 871L562.6 869.7L559.4 867.6L557.4 864.8L556.6 861.7L555.3 838.3L556.1 841.4L558.1 844.2L561.3 846.3L565.3 847.5L569.6 847.8L573.9 847.1L577.8 845.4L580.7 843L582.5 840L583 836.8Z" fill="#b29540"/><path d="M583.1 838.2L582.6 841.4L580.8 844.3L577.8 846.8L574 848.4L569.7 849.2L565.4 848.9L561.4 847.6L558.2 845.5L556.1 842.7L555.4 839.6L554 815.7L554.8 818.8L556.9 821.6L560.1 823.7L564.2 825L568.6 825.3L573 824.5L576.9 822.8L579.9 820.4L581.7 817.4L582.3 814.3Z" fill="#c4c562"/><path d="M582.3 815.7L581.8 818.9L579.9 821.8L576.9 824.3L573 825.9L568.7 826.7L564.2 826.4L560.2 825.1L557 823L554.9 820.3L554.1 817.1L552.8 794L553.6 797.1L555.7 799.9L559 802L563.1 803.3L567.6 803.5L572.1 802.8L576 801.1L579.1 798.7L581 795.8L581.5 792.6Z" fill="#798948"/><path d="M581.6 794L581 797.2L579.1 800.2L576.1 802.6L572.1 804.3L567.7 805L563.2 804.7L559.1 803.5L555.8 801.4L553.7 798.6L552.8 795.5L551.4 770.8L552.3 773.9L554.4 776.7L557.8 778.8L562 780L566.5 780.3L571.1 779.6L575.1 777.9L578.2 775.5L580.2 772.6L580.7 769.4Z" fill="#82bd5c"/><path d="M580.7 770.9L580.2 774.1L578.3 777L575.2 779.4L571.1 781.1L566.6 781.8L562 781.5L557.9 780.3L554.5 778.2L552.3 775.4L551.5 772.3L549.8 742.2L550.6 745.2L552.9 747.9L556.3 750L560.5 751.3L565.2 751.6L569.9 750.8L574 749.2L577.2 746.8L579.2 743.9L579.7 740.7Z" fill="#2ca638"/><path d="M579.8 742.3L579.2 745.4L577.2 748.4L574 750.8L569.9 752.4L565.3 753.1L560.6 752.9L556.4 751.6L553 749.5L550.7 746.8L549.9 743.7L548.5 718.8L549.3 721.8L551.6 724.5L555 726.6L559.4 727.8L564.1 728.1L568.9 727.4L573.1 725.8L576.3 723.4L578.3 720.5L578.9 717.3Z" fill="#54a77b"/><path d="M585.3 902L584.8 905.2L583.1 908.2L580.3 910.6L576.7 912.3L572.6 913.1L568.5 912.8L564.7 911.5L561.7 909.4L559.7 906.6L559 903.5L548.5 718.8L549.3 721.8L551.6 724.5L555 726.6L559.4 727.8L564.1 728.1L568.9 727.4L573.1 725.8L576.3 723.4L578.3 720.5L578.9 717.3Z" fill="url(#sh)"/><path d="M574.1 725.2L570.8 726.8L567.1 727.8L563.1 728.1L559.1 727.8L555.5 726.8L552.4 725.2L550.2 723.1L548.8 720.6L548.5 718.1L549.2 715.5L550.9 713.1L553.5 711L556.7 709.5L560.4 708.5L564.3 708.1L568.2 708.5L571.8 709.5L574.8 711L577.1 713.1L578.5 715.5L578.9 718L578.3 720.6L576.6 723.1Z" fill="#5fc288"/>
<path d="M688.4 909.6L687.7 912.7L685.7 915.5L682.7 917.7L678.9 919L674.8 919.3L670.7 918.6L667 916.9L664.2 914.4L662.5 911.5L662 908.2L662.7 886.3L663.2 889.5L664.9 892.5L667.8 895L671.5 896.6L675.7 897.4L679.9 897.1L683.7 895.8L686.8 893.6L688.8 890.8L689.6 887.6Z" fill="#dd5850"/><path d="M689.5 888.9L688.8 892L686.8 894.9L683.7 897L679.9 898.3L675.6 898.6L671.5 897.9L667.8 896.2L664.9 893.8L663.1 890.8L662.6 887.5L663.2 867.1L663.7 870.3L665.5 873.3L668.5 875.8L672.2 877.4L676.5 878.2L680.8 877.9L684.7 876.6L687.8 874.4L689.8 871.6L690.6 868.4Z" fill="#e8a74e"/><path d="M690.5 869.7L689.8 872.9L687.7 875.7L684.6 877.9L680.7 879.2L676.4 879.5L672.2 878.7L668.4 877.1L665.5 874.6L663.7 871.6L663.2 868.4L663.9 846.1L664.4 849.3L666.2 852.3L669.2 854.7L673 856.4L677.3 857.1L681.7 856.8L685.7 855.5L688.9 853.4L690.9 850.6L691.7 847.4Z" fill="#b29540"/><path d="M691.6 848.8L690.9 851.9L688.8 854.7L685.6 856.9L681.7 858.2L677.3 858.5L673 857.8L669.1 856.1L666.2 853.6L664.3 850.7L663.8 847.4L664.5 824.7L665 827.9L666.9 830.9L669.9 833.3L673.8 835L678.2 835.7L682.7 835.4L686.7 834.1L689.9 832L692 829.2L692.8 826Z" fill="#c4c562"/><path d="M692.8 827.4L692 830.6L689.9 833.4L686.6 835.5L682.6 836.8L678.2 837.1L673.8 836.4L669.9 834.7L666.9 832.3L665 829.3L664.5 826.1L665.1 804.2L665.7 807.4L667.6 810.4L670.6 812.8L674.6 814.5L679.1 815.2L683.6 814.9L687.7 813.6L691 811.4L693.1 808.7L693.9 805.5Z" fill="#798948"/><path d="M693.8 807L693 810.1L690.9 812.9L687.6 815.1L683.5 816.3L679 816.7L674.6 815.9L670.6 814.3L667.5 811.8L665.6 808.8L665.1 805.6L665.8 782.2L666.3 785.4L668.3 788.4L671.4 790.9L675.4 792.5L680 793.2L684.6 792.9L688.7 791.6L692.1 789.5L694.3 786.7L695.1 783.6Z" fill="#82bd5c"/><path d="M695 785.1L694.2 788.2L692 791L688.7 793.1L684.5 794.4L679.9 794.7L675.4 794L671.4 792.4L668.2 789.9L666.3 786.9L665.7 783.7L666.5 757.7L667.1 760.8L669.1 763.8L672.3 766.2L676.4 767.9L681 768.6L685.7 768.3L689.9 767L693.3 764.9L695.5 762.1L696.4 759Z" fill="#2ca638"/><path d="M696.3 760.5L695.5 763.6L693.2 766.4L689.9 768.6L685.6 769.8L680.9 770.1L676.3 769.4L672.2 767.8L669 765.3L667 762.4L666.5 759.2L667.3 731.5L667.9 734.7L669.9 737.6L673.2 740.1L677.4 741.7L682.1 742.4L686.9 742.1L691.2 740.8L694.6 738.7L696.9 736L697.7 732.9Z" fill="#54a77b"/><path d="M688.4 909.6L687.7 912.7L685.7 915.5L682.7 917.7L678.9 919L674.8 919.3L670.7 918.6L667 916.9L664.2 914.4L662.5 911.5L662 908.2L667.3 731.5L667.9 734.7L669.9 737.6L673.2 740.1L677.4 741.7L682.1 742.4L686.9 742.1L691.2 740.8L694.6 738.7L696.9 736L697.7 732.9Z" fill="url(#sh)"/><path d="M693.7 739.4L690.7 741.1L687 742.1L683.1 742.4L679.1 742.1L675.3 741.1L672.1 739.4L669.6 737.3L667.9 734.8L667.3 732.2L667.7 729.6L669.1 727.2L671.4 725.1L674.5 723.5L678.1 722.5L682 722.2L685.9 722.5L689.6 723.5L692.8 725.1L695.3 727.1L697 729.6L697.7 732.2L697.4 734.8L696 737.3Z" fill="#5fc288"/>
<path d="M792.7 917.2L791.6 920.3L789.4 922.8L786.2 924.7L782.2 925.6L778 925.4L773.9 924.3L770.4 922.2L767.8 919.4L766.3 916.3L766.1 913L768.2 895.1L768.4 898.4L769.9 901.6L772.6 904.3L776.2 906.4L780.3 907.6L784.6 907.7L788.6 906.8L791.9 905L794.2 902.4L795.2 899.3Z" fill="#dd5850"/><path d="M795 900.6L794 903.7L791.7 906.2L788.4 908.1L784.4 909L780.2 908.8L776 907.7L772.5 905.6L769.8 902.8L768.3 899.7L768.1 896.4L770.7 874.2L770.9 877.4L772.5 880.6L775.2 883.4L778.9 885.4L783.1 886.6L787.4 886.7L791.5 885.9L794.8 884L797.1 881.4L798.2 878.3Z" fill="#e8a74e"/><path d="M798 879.6L797 882.7L794.6 885.3L791.3 887.2L787.2 888L782.9 887.9L778.7 886.7L775 884.7L772.3 881.9L770.8 878.7L770.6 875.5L773.9 847.6L774.1 850.9L775.7 854.1L778.5 856.8L782.2 858.9L786.5 860L791 860.2L795.1 859.3L798.5 857.5L800.9 854.9L802 851.8Z" fill="#b29540"/><path d="M801.8 853.2L800.7 856.2L798.3 858.8L794.9 860.7L790.8 861.6L786.4 861.4L782.1 860.2L778.3 858.2L775.5 855.4L773.9 852.3L773.7 849L777.5 817L777.8 820.2L779.4 823.4L782.3 826.1L786.1 828.2L790.5 829.3L795.1 829.5L799.3 828.6L802.8 826.8L805.2 824.2L806.3 821.1Z" fill="#c4c562"/><path d="M806.1 822.5L805 825.6L802.6 828.2L799.1 830L794.9 830.9L790.3 830.8L785.9 829.6L782.1 827.5L779.2 824.8L777.6 821.6L777.3 818.4L780.3 793.2L780.6 796.5L782.3 799.6L785.2 802.4L789.1 804.4L793.6 805.6L798.3 805.7L802.6 804.8L806.1 803L808.6 800.4L809.7 797.4Z" fill="#798948"/><path d="M809.5 798.9L808.4 801.9L805.9 804.5L802.4 806.3L798.1 807.2L793.4 807.1L788.9 805.9L785 803.9L782.1 801.1L780.4 798L780.1 794.7L783.3 768.2L783.6 771.4L785.3 774.5L788.3 777.3L792.3 779.3L796.9 780.4L801.6 780.6L806 779.7L809.7 777.9L812.1 775.3L813.2 772.3Z" fill="#82bd5c"/><path d="M813 773.8L811.9 776.9L809.4 779.4L805.8 781.3L801.4 782.1L796.7 782L792.1 780.8L788.1 778.8L785.1 776.1L783.4 772.9L783.1 769.7L786.3 743.1L786.6 746.3L788.3 749.4L791.4 752.1L795.5 754.1L800.2 755.3L805 755.4L809.5 754.5L813.2 752.7L815.7 750.2L816.8 747.2Z" fill="#2ca638"/><path d="M816.6 748.8L815.5 751.8L812.9 754.3L809.3 756.2L804.8 757L800 756.9L795.3 755.7L791.2 753.7L788.1 751L786.4 747.9L786.1 744.7L789.6 714.8L789.9 718L791.8 721.1L794.9 723.8L799.1 725.8L803.9 726.9L808.8 727.1L813.4 726.2L817.1 724.4L819.7 721.9L820.8 718.8Z" fill="#54a77b"/><path d="M792.7 917.2L791.6 920.3L789.4 922.8L786.2 924.7L782.2 925.6L778 925.4L773.9 924.3L770.4 922.2L767.8 919.4L766.3 916.3L766.1 913L789.6 714.8L789.9 718L791.8 721.1L794.9 723.8L799.1 725.8L803.9 726.9L808.8 727.1L813.4 726.2L817.1 724.4L819.7 721.9L820.8 718.8Z" fill="url(#sh)"/><path d="M817.6 724.1L814.6 725.7L811.1 726.8L807.1 727.1L802.9 726.8L799 725.7L795.4 724.1L792.6 721.9L790.6 719.5L789.7 716.8L789.8 714.2L790.9 711.7L793 709.6L795.9 708.1L799.5 707L803.4 706.7L807.4 707L811.3 708L814.8 709.6L817.7 711.7L819.7 714.2L820.7 716.8L820.7 719.4L819.6 721.9Z" fill="#5fc288"/>
<path d="M508.6 916.6L508.4 919.9L506.8 923.1L504.2 925.8L500.6 927.8L496.5 928.9L492.3 928.9L488.4 927.9L485.2 926L483 923.4L482 920.2L479.6 901L480.6 904.2L482.8 906.8L486.1 908.8L490.1 909.7L494.3 909.7L498.5 908.6L502.1 906.6L504.9 903.9L506.4 900.7L506.7 897.4Z" fill="#dd5850"/><path d="M506.8 898.7L506.6 902L505 905.1L502.3 907.9L498.6 909.9L494.5 910.9L490.2 911L486.2 910L483 908.1L480.8 905.4L479.8 902.3L477.5 883.7L478.5 886.9L480.7 889.5L484 891.4L488.1 892.4L492.4 892.4L496.6 891.3L500.3 889.3L503.1 886.6L504.7 883.4L505 880.1Z" fill="#e8a74e"/><path d="M505.1 881.4L504.8 884.7L503.2 887.9L500.5 890.6L496.8 892.6L492.6 893.7L488.2 893.7L484.2 892.7L480.9 890.8L478.6 888.2L477.6 885L475.3 866.4L476.3 869.6L478.6 872.2L482 874.1L486.1 875.1L490.5 875.1L494.8 874L498.5 872L501.3 869.3L502.9 866.1L503.2 862.8Z" fill="#b29540"/><path d="M503.4 864.1L503.1 867.4L501.5 870.6L498.6 873.3L494.9 875.3L490.6 876.4L486.2 876.5L482.1 875.5L478.8 873.6L476.5 870.9L475.5 867.8L472.1 840.5L473.1 843.6L475.5 846.3L478.9 848.2L483.1 849.1L487.6 849.1L491.9 848L495.8 846L498.6 843.3L500.3 840.1L500.6 836.9Z" fill="#c4c562"/><path d="M500.8 838.3L500.5 841.5L498.8 844.7L495.9 847.4L492.1 849.4L487.7 850.5L483.2 850.5L479.1 849.6L475.6 847.6L473.3 845L472.3 841.9L469.2 816.7L470.2 819.8L472.6 822.5L476.1 824.4L480.3 825.4L484.9 825.3L489.4 824.2L493.3 822.2L496.2 819.5L497.9 816.4L498.2 813.1Z" fill="#798948"/><path d="M498.4 814.5L498.1 817.8L496.4 821L493.4 823.7L489.5 825.7L485.1 826.8L480.5 826.8L476.2 825.8L472.8 823.9L470.4 821.3L469.4 818.2L466 790.8L467 793.9L469.4 796.5L473 798.4L477.3 799.4L482 799.3L486.5 798.3L490.5 796.3L493.5 793.6L495.3 790.4L495.6 787.2Z" fill="#82bd5c"/><path d="M495.8 788.7L495.4 791.9L493.7 795.1L490.7 797.8L486.7 799.8L482.2 800.8L477.5 800.9L473.2 799.9L469.6 798L467.2 795.4L466.2 792.3L462.2 760.5L463.3 763.6L465.7 766.2L469.4 768.1L473.8 769.1L478.6 769L483.3 768L487.3 766L490.4 763.3L492.2 760.2L492.6 756.9Z" fill="#2ca638"/><path d="M492.7 758.5L492.4 761.8L490.6 764.9L487.5 767.6L483.4 769.6L478.8 770.6L474 770.7L469.6 769.7L465.9 767.8L463.5 765.2L462.4 762.1L459.4 737.7L460.5 740.8L463 743.4L466.6 745.3L471.2 746.3L476 746.2L480.8 745.1L484.9 743.2L488.1 740.5L489.9 737.4L490.3 734.2Z" fill="#54a77b"/><path d="M508.6 916.6L508.4 919.9L506.8 923.1L504.2 925.8L500.6 927.8L496.5 928.9L492.3 928.9L488.4 927.9L485.2 926L483 923.4L482 920.2L459.4 737.7L460.5 740.8L463 743.4L466.6 745.3L471.2 746.3L476 746.2L480.8 745.1L484.9 743.2L488.1 740.5L489.9 737.4L490.3 734.2Z" fill="url(#sh)"/><path d="M484.8 743.3L481.3 744.9L477.4 746L473.3 746.4L469.4 746L465.8 745L462.8 743.3L460.7 741.1L459.6 738.6L459.5 735.9L460.4 733.3L462.4 730.8L465.1 728.7L468.6 727.1L472.4 726.1L476.4 725.7L480.3 726.1L483.8 727.1L486.8 728.7L488.9 730.8L490.1 733.3L490.3 735.9L489.4 738.6L487.5 741.1Z" fill="#5fc288"/>
<path d="M612.7 924.3L612.2 927.6L610.4 930.7L607.5 933.1L603.8 934.8L599.6 935.4L595.4 935L591.6 933.6L588.6 931.3L586.6 928.4L586 925.1L585.2 902.6L585.9 905.9L587.9 908.8L590.9 911.1L594.8 912.5L599.1 913L603.3 912.3L607.1 910.7L610.1 908.2L611.9 905.1L612.5 901.8Z" fill="#dd5850"/><path d="M612.5 903.1L611.9 906.4L610.1 909.5L607.1 911.9L603.3 913.6L599.1 914.2L594.8 913.8L591 912.4L587.9 910.1L585.9 907.2L585.2 903.9L584.5 882.9L585.2 886.2L587.2 889.1L590.3 891.4L594.3 892.8L598.6 893.2L602.9 892.6L606.8 890.9L609.8 888.5L611.7 885.4L612.2 882.1Z" fill="#e8a74e"/><path d="M612.3 883.4L611.7 886.7L609.8 889.8L606.8 892.3L603 893.9L598.6 894.5L594.3 894.1L590.4 892.7L587.3 890.4L585.2 887.5L584.5 884.2L583.7 861.3L584.5 864.6L586.5 867.5L589.7 869.8L593.7 871.2L598.1 871.7L602.5 871L606.4 869.4L609.5 866.9L611.4 863.9L612 860.6Z" fill="#b29540"/><path d="M612 861.9L611.4 865.2L609.5 868.3L606.5 870.7L602.5 872.4L598.1 873L593.7 872.6L589.7 871.2L586.6 868.9L584.5 866L583.8 862.7L583 839.3L583.7 842.6L585.8 845.5L589 847.8L593.1 849.2L597.6 849.6L602.1 849L606.1 847.3L609.2 844.9L611.1 841.9L611.7 838.6Z" fill="#c4c562"/><path d="M611.7 840L611.2 843.3L609.2 846.3L606.1 848.8L602.1 850.4L597.6 851L593.1 850.6L589.1 849.2L585.8 846.9L583.8 844L583 840.7L582.2 818.2L583 821.4L585.1 824.3L588.4 826.6L592.5 828L597.1 828.5L601.7 827.8L605.7 826.2L608.9 823.7L610.9 820.7L611.5 817.4Z" fill="#798948"/><path d="M611.5 818.8L610.9 822.1L608.9 825.2L605.7 827.6L601.7 829.3L597.1 829.9L592.6 829.5L588.4 828.1L585.1 825.8L583 822.9L582.3 819.6L581.4 795.5L582.2 798.8L584.4 801.7L587.7 804L591.9 805.4L596.6 805.8L601.2 805.1L605.3 803.5L608.6 801L610.6 798L611.2 794.7Z" fill="#82bd5c"/><path d="M611.2 796.3L610.6 799.5L608.6 802.6L605.4 805L601.2 806.6L596.6 807.3L592 806.9L587.8 805.5L584.4 803.2L582.3 800.3L581.5 797L580.3 763.8L581.1 767.1L583.3 770L586.7 772.2L591.1 773.6L595.8 774L600.6 773.4L604.8 771.8L608.1 769.3L610.2 766.3L610.8 763.1Z" fill="#2ca638"/><path d="M610.9 764.7L610.2 767.9L608.2 770.9L604.9 773.4L600.6 775L595.9 775.6L591.1 775.2L586.8 773.8L583.4 771.6L581.2 768.7L580.4 765.4L579.7 745.9L580.5 749.1L582.7 752L586.2 754.2L590.6 755.6L595.4 756L600.2 755.4L604.5 753.8L607.9 751.4L610 748.4L610.6 745.1Z" fill="#54a77b"/><path d="M612.7 924.3L612.2 927.6L610.4 930.7L607.5 933.1L603.8 934.8L599.6 935.4L595.4 935L591.6 933.6L588.6 931.3L586.6 928.4L586 925.1L579.7 745.9L580.5 749.1L582.7 752L586.2 754.2L590.6 755.6L595.4 756L600.2 755.4L604.5 753.8L607.9 751.4L610 748.4L610.6 745.1Z" fill="url(#sh)"/><path d="M606 752.9L602.7 754.6L598.9 755.7L594.9 756L590.8 755.7L587.1 754.6L583.9 752.9L581.6 750.7L580.1 748.2L579.7 745.5L580.4 742.8L582 740.3L584.5 738.2L587.8 736.5L591.5 735.5L595.5 735.1L599.4 735.5L603.1 736.5L606.2 738.2L608.6 740.3L610.1 742.8L610.6 745.5L610.1 748.2L608.5 750.7Z" fill="#5fc288"/>
<path d="M718 932.2L717.1 935.5L715 938.3L711.9 940.5L708 941.7L703.8 941.9L699.6 941L695.9 939.1L693.1 936.5L691.4 933.3L691 929.9L692.4 906L692.8 909.3L694.5 912.5L697.4 915.1L701.1 917L705.4 917.9L709.7 917.7L713.7 916.5L716.9 914.3L719 911.5L719.9 908.2Z" fill="#dd5850"/><path d="M719.8 909.5L718.9 912.8L716.8 915.6L713.6 917.8L709.6 919L705.3 919.2L701 918.3L697.3 916.4L694.4 913.8L692.7 910.6L692.3 907.2L693.5 884.8L694 888.2L695.7 891.3L698.7 894L702.5 895.8L706.8 896.7L711.2 896.6L715.2 895.3L718.5 893.2L720.7 890.3L721.5 887.1Z" fill="#e8a74e"/><path d="M721.4 888.4L720.6 891.6L718.4 894.5L715.1 896.6L711.1 897.9L706.7 898L702.4 897.2L698.6 895.3L695.6 892.7L693.9 889.5L693.5 886.1L694.8 861.6L695.3 864.9L697.1 868.1L700.1 870.7L704 872.6L708.4 873.5L712.8 873.3L717 872.1L720.3 869.9L722.5 867.1L723.4 863.8Z" fill="#b29540"/><path d="M723.3 865.2L722.4 868.5L720.2 871.3L716.9 873.5L712.7 874.7L708.3 874.9L703.9 874L700 872.1L697 869.5L695.2 866.3L694.8 863L696.2 837.8L696.6 841.2L698.4 844.3L701.5 847L705.5 848.8L710 849.7L714.5 849.5L718.7 848.3L722.1 846.2L724.4 843.3L725.3 840.1Z" fill="#c4c562"/><path d="M725.1 841.5L724.2 844.8L722 847.6L718.6 849.8L714.4 851L709.9 851.2L705.4 850.3L701.4 848.4L698.4 845.8L696.5 842.6L696.1 839.3L697.4 814.9L697.9 818.3L699.8 821.4L702.9 824.1L706.9 825.9L711.5 826.8L716.2 826.6L720.4 825.4L723.9 823.3L726.2 820.4L727.1 817.2Z" fill="#798948"/><path d="M726.9 818.7L726 821.9L723.8 824.7L720.3 826.9L716.1 828.1L711.4 828.3L706.8 827.4L702.8 825.5L699.7 822.9L697.8 819.8L697.4 816.4L698.8 790.4L699.3 793.7L701.2 796.8L704.4 799.5L708.5 801.3L713.2 802.2L717.9 802L722.3 800.8L725.8 798.7L728.1 795.8L729 792.6Z" fill="#82bd5c"/><path d="M728.9 794.1L728 797.4L725.6 800.2L722.1 802.3L717.8 803.5L713.1 803.7L708.4 802.8L704.3 801L701.1 798.4L699.2 795.2L698.7 791.9L700.2 765.6L700.7 769L702.6 772.1L705.9 774.7L710.1 776.5L714.8 777.4L719.7 777.2L724.1 776L727.7 773.9L730 771.1L731 767.9Z" fill="#2ca638"/><path d="M730.8 769.4L729.9 772.7L727.5 775.5L724 777.6L719.6 778.8L714.7 779L710 778.1L705.8 776.3L702.5 773.7L700.6 770.5L700.1 767.2L701.3 745.3L701.8 748.6L703.8 751.8L707.1 754.4L711.4 756.2L716.2 757.1L721.1 756.9L725.6 755.7L729.2 753.6L731.6 750.8L732.6 747.6Z" fill="#54a77b"/><path d="M718 932.2L717.1 935.5L715 938.3L711.9 940.5L708 941.7L703.8 941.9L699.6 941L695.9 939.1L693.1 936.5L691.4 933.3L691 929.9L701.3 745.3L701.8 748.6L703.8 751.8L707.1 754.4L711.4 756.2L716.2 757.1L721.1 756.9L725.6 755.7L729.2 753.6L731.6 750.8L732.6 747.6Z" fill="url(#sh)"/><path d="M728.7 754L725.6 755.7L721.9 756.8L717.9 757.1L713.8 756.8L709.9 755.7L706.5 754L703.8 751.8L702 749.2L701.3 746.5L701.6 743.7L703 741.2L705.3 739L708.4 737.4L712 736.3L716 736L720 736.3L723.9 737.4L727.2 739L729.9 741.2L731.7 743.7L732.5 746.4L732.3 749.2L731 751.7Z" fill="#5fc288"/>
<path d="M535 939.4L534.7 942.8L533.1 946.1L530.3 948.9L526.6 950.8L522.4 951.9L518.2 951.8L514.2 950.7L511 948.6L508.8 945.8L507.9 942.5L505.4 918.5L506.3 921.8L508.5 924.6L511.8 926.7L515.9 927.8L520.2 927.8L524.5 926.8L528.3 924.8L531.1 922.1L532.8 918.8L533.1 915.4Z" fill="#dd5850"/><path d="M533.2 916.7L532.9 920.1L531.2 923.3L528.4 926.1L524.6 928.1L520.4 929.1L516 929.1L512 927.9L508.7 925.9L506.5 923L505.5 919.7L503.7 902.1L504.6 905.4L506.9 908.2L510.2 910.3L514.3 911.4L518.7 911.5L523.1 910.4L526.9 908.4L529.8 905.7L531.4 902.4L531.8 899Z" fill="#e8a74e"/><path d="M531.9 900.3L531.6 903.7L529.9 907L527 909.8L523.2 911.7L518.9 912.8L514.4 912.7L510.4 911.6L507 909.5L504.8 906.7L503.8 903.4L501 876.3L502 879.6L504.3 882.5L507.7 884.5L511.9 885.7L516.4 885.7L520.8 884.7L524.7 882.7L527.6 879.9L529.4 876.7L529.7 873.3Z" fill="#b29540"/><path d="M529.8 874.6L529.5 878L527.8 881.3L524.8 884.1L520.9 886.1L516.5 887.1L512 887L507.8 885.9L504.4 883.8L502.1 881L501.2 877.7L498.5 851.8L499.5 855.1L501.8 857.9L505.3 860L509.5 861.1L514.1 861.1L518.7 860.1L522.6 858.1L525.6 855.4L527.4 852.1L527.8 848.7Z" fill="#c4c562"/><path d="M527.9 850.1L527.5 853.5L525.8 856.8L522.7 859.5L518.8 861.5L514.3 862.6L509.7 862.5L505.4 861.4L501.9 859.3L499.6 856.5L498.6 853.2L495.9 827.2L496.9 830.5L499.3 833.3L502.8 835.4L507.2 836.5L511.9 836.5L516.5 835.5L520.5 833.5L523.6 830.8L525.4 827.5L525.8 824.1Z" fill="#798948"/><path d="M525.9 825.6L525.6 829L523.7 832.2L520.7 835L516.6 837L512 838L507.3 838L503 836.8L499.4 834.8L497.1 831.9L496.1 828.7L492.4 793.3L493.4 796.5L495.9 799.3L499.5 801.4L503.9 802.5L508.8 802.6L513.5 801.6L517.7 799.6L520.9 796.8L522.7 793.6L523.1 790.2Z" fill="#82bd5c"/><path d="M523.3 791.8L522.9 795.2L521 798.4L517.8 801.1L513.7 803.1L508.9 804.1L504.1 804.1L499.6 803L496 800.9L493.6 798.1L492.6 794.8L490 769.9L491 773.1L493.5 775.9L497.2 778L501.7 779.1L506.6 779.2L511.5 778.1L515.7 776.2L518.9 773.4L520.9 770.2L521.3 766.8Z" fill="#2ca638"/><path d="M521.4 768.5L521 771.8L519.1 775.1L515.8 777.8L511.6 779.8L506.8 780.8L501.9 780.7L497.3 779.6L493.7 777.6L491.2 774.8L490.2 771.5L487.5 745.5L488.5 748.7L491 751.5L494.8 753.5L499.4 754.7L504.4 754.7L509.3 753.7L513.6 751.7L516.9 749L518.9 745.8L519.3 742.5Z" fill="#54a77b"/><path d="M535 939.4L534.7 942.8L533.1 946.1L530.3 948.9L526.6 950.8L522.4 951.9L518.2 951.8L514.2 950.7L511 948.6L508.8 945.8L507.9 942.5L487.5 745.5L488.5 748.7L491 751.5L494.8 753.5L499.4 754.7L504.4 754.7L509.3 753.7L513.6 751.7L516.9 749L518.9 745.8L519.3 742.5Z" fill="url(#sh)"/><path d="M513.8 751.6L510.3 753.3L506.3 754.4L502.1 754.8L498 754.4L494.3 753.4L491.2 751.6L488.9 749.4L487.7 746.8L487.5 744L488.4 741.2L490.4 738.6L493.2 736.4L496.6 734.8L500.6 733.7L504.7 733.4L508.7 733.7L512.4 734.8L515.5 736.4L517.8 738.6L519.1 741.2L519.3 744L518.5 746.7L516.6 749.4Z" fill="#5fc288"/>
<path d="M641.2 947.5L640.6 950.9L638.7 954L635.7 956.5L631.8 958.1L627.6 958.6L623.3 958.1L619.5 956.5L616.5 954L614.6 950.9L613.9 947.5L613.7 926.9L614.3 930.3L616.3 933.4L619.4 935.9L623.3 937.5L627.6 938.1L631.9 937.5L635.8 935.9L638.9 933.5L640.9 930.4L641.5 926.9Z" fill="#dd5850"/><path d="M641.5 928.2L640.8 931.6L638.9 934.7L635.8 937.2L631.9 938.8L627.6 939.3L623.3 938.8L619.4 937.2L616.3 934.7L614.4 931.6L613.7 928.2L613.5 909L614.2 912.5L616.1 915.6L619.2 918L623.2 919.6L627.6 920.2L632 919.7L636 918.1L639.1 915.6L641.1 912.5L641.7 909.1Z" fill="#e8a74e"/><path d="M641.7 910.4L641.1 913.8L639.1 916.9L636 919.4L632 921L627.6 921.5L623.2 921L619.3 919.3L616.1 916.9L614.2 913.8L613.5 910.3L613.3 889.5L614 892.9L616 896L619.1 898.5L623.1 900.1L627.6 900.7L632.1 900.1L636.1 898.5L639.3 896.1L641.3 893L642 889.5Z" fill="#b29540"/><path d="M642 890.9L641.3 894.3L639.3 897.4L636.1 899.9L632.1 901.5L627.6 902L623.2 901.5L619.1 899.9L616 897.4L614 894.3L613.3 890.9L613.1 869.6L613.7 873.1L615.8 876.2L619 878.7L623.1 880.3L627.6 880.8L632.2 880.3L636.3 878.7L639.5 876.2L641.6 873.1L642.2 869.7Z" fill="#c4c562"/><path d="M642.2 871.1L641.5 874.5L639.5 877.6L636.3 880.1L632.2 881.7L627.6 882.2L623.1 881.6L619 880L615.8 877.6L613.8 874.5L613.1 871L612.9 850.6L613.5 854L615.6 857.1L618.9 859.6L623 861.2L627.7 861.7L632.3 861.2L636.4 859.6L639.7 857.1L641.8 854L642.5 850.6Z" fill="#798948"/><path d="M642.5 852.1L641.8 855.5L639.7 858.6L636.4 861L632.3 862.6L627.7 863.2L623 862.6L618.9 861L615.6 858.5L613.6 855.4L612.9 852L612.6 830.3L613.3 833.7L615.4 836.8L618.8 839.2L623 840.8L627.7 841.4L632.4 840.8L636.6 839.3L639.9 836.8L642 833.7L642.7 830.3Z" fill="#82bd5c"/><path d="M642.7 831.8L642 835.2L639.9 838.3L636.6 840.7L632.4 842.3L627.7 842.9L623 842.3L618.8 840.7L615.4 838.3L613.3 835.2L612.7 831.7L612.4 808.5L613.1 811.9L615.2 815L618.6 817.4L622.9 819L627.7 819.6L632.5 819L636.8 817.5L640.2 815L642.3 811.9L643 808.5Z" fill="#2ca638"/><path d="M643 810L642.3 813.5L640.2 816.5L636.8 819L632.5 820.6L627.7 821.1L622.9 820.6L618.6 819L615.3 816.5L613.1 813.4L612.4 810L612.2 788.9L612.9 792.3L615.1 795.3L618.5 797.8L622.9 799.4L627.7 800L632.6 799.4L636.9 797.8L640.4 795.4L642.6 792.3L643.3 788.9Z" fill="#54a77b"/><path d="M641.2 947.5L640.6 950.9L638.7 954L635.7 956.5L631.8 958.1L627.6 958.6L623.3 958.1L619.5 956.5L616.5 954L614.6 950.9L613.9 947.5L612.2 788.9L612.9 792.3L615.1 795.3L618.5 797.8L622.9 799.4L627.7 800L632.6 799.4L636.9 797.8L640.4 795.4L642.6 792.3L643.3 788.9Z" fill="url(#sh)"/><path d="M638.8 796.7L635.6 798.5L631.8 799.6L627.8 800L623.7 799.6L619.9 798.5L616.7 796.7L614.2 794.4L612.7 791.7L612.2 788.9L612.8 786.1L614.3 783.4L616.8 781.2L620 779.5L623.7 778.4L627.7 778L631.7 778.4L635.4 779.5L638.6 781.2L641.1 783.4L642.7 786.1L643.3 788.9L642.8 791.7L641.3 794.4Z" fill="#5fc288"/>
<path d="M748.6 955.8L747.6 959.1L745.4 962L742.1 964.1L738.1 965.2L733.8 965.2L729.6 964.2L725.9 962.1L723.1 959.3L721.5 956L721.2 952.5L722.8 932.4L723.2 935.9L724.8 939.2L727.7 942L731.4 944.1L735.7 945.2L740.1 945.1L744.2 944L747.5 941.9L749.8 939L750.8 935.7Z" fill="#dd5850"/><path d="M750.6 936.9L749.7 940.3L747.4 943.2L744.1 945.3L740 946.4L735.6 946.4L731.3 945.4L727.6 943.3L724.7 940.5L723.1 937.1L722.7 933.6L724.5 912.8L724.8 916.3L726.5 919.6L729.4 922.5L733.2 924.5L737.6 925.6L742.1 925.6L746.2 924.4L749.6 922.3L751.9 919.5L752.9 916.1Z" fill="#e8a74e"/><path d="M752.7 917.4L751.8 920.8L749.5 923.6L746.1 925.8L741.9 926.9L737.5 926.9L733.1 925.8L729.3 923.8L726.4 920.9L724.7 917.6L724.4 914.1L726.3 890.5L726.7 894L728.4 897.3L731.4 900.1L735.3 902.2L739.7 903.3L744.3 903.2L748.5 902.1L752 900L754.3 897.1L755.3 893.8Z" fill="#b29540"/><path d="M755.1 895.1L754.1 898.5L751.8 901.4L748.4 903.5L744.2 904.6L739.6 904.6L735.1 903.6L731.2 901.5L728.3 898.7L726.6 895.3L726.2 891.8L728.2 868.1L728.5 871.6L730.3 875L733.3 877.8L737.3 879.9L741.9 880.9L746.5 880.9L750.8 879.8L754.3 877.7L756.7 874.8L757.7 871.4Z" fill="#c4c562"/><path d="M757.5 872.8L756.5 876.2L754.2 879.1L750.7 881.2L746.4 882.3L741.7 882.3L737.2 881.3L733.2 879.2L730.2 876.4L728.4 873L728.1 869.5L730.1 845.8L730.4 849.3L732.2 852.6L735.3 855.5L739.4 857.5L744 858.6L748.7 858.6L753.1 857.4L756.7 855.3L759.1 852.4L760.1 849.1Z" fill="#798948"/><path d="M759.9 850.6L758.9 853.9L756.5 856.8L753 858.9L748.6 860L743.9 860L739.2 859L735.2 856.9L732.1 854.1L730.3 850.8L729.9 847.3L732.4 817.9L732.8 821.4L734.6 824.7L737.8 827.5L741.9 829.6L746.7 830.6L751.5 830.6L756 829.5L759.6 827.4L762.1 824.5L763.1 821.2Z" fill="#82bd5c"/><path d="M763 822.7L761.9 826L759.5 828.9L755.8 831L751.4 832.1L746.5 832.2L741.8 831.1L737.6 829L734.5 826.2L732.6 822.9L732.3 819.4L734.5 792.8L734.9 796.2L736.8 799.5L740 802.4L744.2 804.4L749.1 805.5L754 805.4L758.6 804.3L762.3 802.2L764.8 799.4L765.8 796Z" fill="#2ca638"/><path d="M765.7 797.6L764.6 801L762.1 803.8L758.4 805.9L753.8 807L748.9 807.1L744.1 806L739.8 804L736.6 801.1L734.7 797.8L734.3 794.4L736.6 767.6L737 771L738.9 774.3L742.2 777.1L746.5 779.2L751.5 780.2L756.5 780.2L761.2 779.1L764.9 777L767.5 774.1L768.5 770.8Z" fill="#54a77b"/><path d="M748.6 955.8L747.6 959.1L745.4 962L742.1 964.1L738.1 965.2L733.8 965.2L729.6 964.2L725.9 962.1L723.1 959.3L721.5 956L721.2 952.5L736.6 767.6L737 771L738.9 774.3L742.2 777.1L746.5 779.2L751.5 780.2L756.5 780.2L761.2 779.1L764.9 777L767.5 774.1L768.5 770.8Z" fill="url(#sh)"/><path d="M764.9 777L761.8 778.8L758 780L753.9 780.3L749.7 780L745.6 778.8L742.1 777.1L739.3 774.7L737.4 772.1L736.6 769.2L736.8 766.4L738.1 763.7L740.4 761.5L743.5 759.7L747.2 758.6L751.2 758.3L755.3 758.6L759.3 759.7L762.8 761.4L765.6 763.7L767.6 766.3L768.5 769.2L768.3 772L767.1 774.7Z" fill="#5fc288"/>
<path d="M562.4 963.2L562 966.7L560.3 970L557.4 972.8L553.6 974.8L549.4 975.8L545 975.6L541 974.3L537.8 972L535.6 969L534.7 965.6L532.8 942.2L533.7 945.6L535.9 948.6L539.2 950.9L543.3 952.2L547.7 952.4L552.1 951.4L555.9 949.4L558.9 946.6L560.6 943.3L561.1 939.7Z" fill="#dd5850"/><path d="M561.1 941L560.7 944.6L559 947.9L556 950.7L552.2 952.7L547.8 953.6L543.4 953.5L539.3 952.2L536 949.9L533.8 946.9L532.9 943.5L530.3 911.7L531.2 915.2L533.5 918.2L536.9 920.4L541.1 921.7L545.6 921.9L550.1 921L554.1 919L557.1 916.2L558.9 912.8L559.3 909.3Z" fill="#e8a74e"/><path d="M559.4 910.6L559 914.2L557.2 917.5L554.1 920.3L550.2 922.3L545.7 923.3L541.2 923.1L537 921.8L533.6 919.5L531.3 916.5L530.4 913.1L528.8 893L529.7 896.4L532 899.5L535.4 901.7L539.7 903L544.3 903.2L548.9 902.2L552.9 900.3L556 897.5L557.8 894.1L558.3 890.6Z" fill="#b29540"/><path d="M558.3 891.9L557.9 895.5L556.1 898.8L553 901.6L549 903.6L544.4 904.6L539.8 904.4L535.5 903.1L532.1 900.8L529.8 897.8L528.9 894.4L526.4 863.7L527.3 867.2L529.7 870.2L533.2 872.4L537.5 873.7L542.3 873.9L547 873L551.1 871L554.2 868.2L556.1 864.8L556.6 861.3Z" fill="#c4c562"/><path d="M556.7 862.7L556.2 866.3L554.3 869.6L551.2 872.4L547.1 874.4L542.4 875.4L537.7 875.2L533.3 873.9L529.8 871.6L527.5 868.6L526.5 865.2L524.8 843.8L525.7 847.3L528.1 850.3L531.7 852.5L536.1 853.8L540.9 854L545.7 853.1L549.8 851.1L553.1 848.3L555 844.9L555.5 841.4Z" fill="#798948"/><path d="M555.5 842.9L555.1 846.4L553.2 849.8L549.9 852.6L545.8 854.6L541 855.5L536.2 855.3L531.8 854L528.2 851.8L525.8 848.8L524.9 845.3L523.1 822.8L524 826.2L526.4 829.2L530.1 831.5L534.5 832.8L539.5 832.9L544.3 832L548.5 830L551.8 827.2L553.8 823.9L554.3 820.3Z" fill="#82bd5c"/><path d="M554.3 821.9L553.9 825.4L551.9 828.8L548.6 831.6L544.4 833.5L539.6 834.5L534.7 834.3L530.2 833L526.5 830.8L524.1 827.8L523.2 824.3L520.5 791.2L521.4 794.6L523.9 797.6L527.6 799.8L532.2 801.1L537.3 801.3L542.2 800.4L546.6 798.4L549.9 795.6L552 792.3L552.5 788.8Z" fill="#2ca638"/><path d="M552.6 790.4L552.1 793.9L550 797.2L546.7 800L542.3 802L537.4 802.9L532.4 802.7L527.8 801.5L524 799.2L521.6 796.2L520.6 792.8L518.3 764.6L519.3 768L521.8 771L525.6 773.2L530.3 774.5L535.4 774.6L540.5 773.7L544.9 771.7L548.4 769L550.4 765.7L550.9 762.2Z" fill="#54a77b"/><path d="M562.4 963.2L562 966.7L560.3 970L557.4 972.8L553.6 974.8L549.4 975.8L545 975.6L541 974.3L537.8 972L535.6 969L534.7 965.6L518.3 764.6L519.3 768L521.8 771L525.6 773.2L530.3 774.5L535.4 774.6L540.5 773.7L544.9 771.7L548.4 769L550.4 765.7L550.9 762.2Z" fill="url(#sh)"/><path d="M545.6 771.4L542 773.2L538 774.3L533.7 774.7L529.4 774.3L525.6 773.2L522.3 771.4L519.9 769L518.6 766.3L518.3 763.4L519.2 760.5L521.1 757.8L523.9 755.5L527.4 753.8L531.4 752.7L535.6 752.3L539.8 752.6L543.6 753.7L546.8 755.5L549.2 757.8L550.6 760.5L551 763.4L550.2 766.3L548.4 769Z" fill="#5fc288"/>
<path d="M670.8 971.6L670.1 975.2L668 978.3L664.9 980.8L660.9 982.3L656.6 982.7L652.3 982L648.4 980.2L645.4 977.5L643.5 974.2L643 970.7L643.4 945.5L643.9 949.1L645.8 952.4L648.9 955.1L652.8 956.9L657.3 957.6L661.7 957.2L665.8 955.7L669 953.2L671.1 950L671.8 946.5Z" fill="#dd5850"/><path d="M671.8 947.8L671 951.3L668.9 954.5L665.7 956.9L661.7 958.5L657.2 958.9L652.8 958.1L648.9 956.4L645.8 953.7L643.9 950.4L643.3 946.8L643.7 922.2L644.3 925.8L646.2 929.1L649.4 931.8L653.4 933.6L657.9 934.3L662.4 933.9L666.6 932.4L669.8 929.9L672 926.7L672.7 923.2Z" fill="#e8a74e"/><path d="M672.7 924.5L671.9 928.1L669.8 931.2L666.5 933.7L662.4 935.2L657.9 935.6L653.4 934.9L649.3 933.1L646.2 930.4L644.3 927.1L643.7 923.5L644.1 898.6L644.6 902.2L646.6 905.5L649.8 908.2L653.9 910L658.5 910.7L663.2 910.3L667.4 908.8L670.7 906.3L672.9 903.2L673.7 899.6Z" fill="#b29540"/><path d="M673.6 901L672.8 904.6L670.7 907.7L667.3 910.2L663.1 911.7L658.5 912.1L653.9 911.4L649.8 909.6L646.6 906.9L644.6 903.6L644 900L644.3 880.6L644.9 884.1L646.9 887.4L650.2 890.1L654.4 891.9L659 892.7L663.7 892.2L668 890.7L671.4 888.2L673.6 885.1L674.4 881.5Z" fill="#c4c562"/><path d="M674.3 883L673.5 886.5L671.4 889.7L668 892.1L663.7 893.7L659 894.1L654.3 893.3L650.2 891.6L646.9 888.9L644.9 885.6L644.3 882L644.6 860.1L645.2 863.7L647.3 867L650.6 869.7L654.8 871.5L659.6 872.2L664.4 871.8L668.7 870.3L672.2 867.8L674.4 864.6L675.2 861.1Z" fill="#798948"/><path d="M675.1 862.6L674.3 866.1L672.1 869.3L668.7 871.7L664.3 873.3L659.5 873.7L654.8 873L650.6 871.2L647.3 868.5L645.2 865.2L644.6 861.6L644.9 840.1L645.5 843.6L647.6 846.9L651 849.6L655.3 851.4L660.1 852.1L665 851.7L669.4 850.2L672.9 847.7L675.2 844.6L676 841Z" fill="#82bd5c"/><path d="M675.9 842.6L675.1 846.1L672.9 849.3L669.4 851.7L665 853.2L660.1 853.7L655.3 852.9L651 851.1L647.6 848.5L645.5 845.2L644.9 841.6L645.3 816.1L645.9 819.7L648 822.9L651.5 825.6L655.9 827.4L660.8 828.1L665.7 827.7L670.2 826.2L673.8 823.7L676.1 820.6L677 817.1Z" fill="#2ca638"/><path d="M676.9 818.7L676.1 822.2L673.8 825.3L670.2 827.8L665.7 829.3L660.7 829.7L655.8 829L651.4 827.2L648 824.5L645.9 821.2L645.3 817.7L645.7 786.5L646.4 790.1L648.5 793.4L652 796L656.5 797.8L661.6 798.5L666.7 798.1L671.3 796.6L674.9 794.1L677.3 791L678.1 787.5Z" fill="#54a77b"/><path d="M670.8 971.6L670.1 975.2L668 978.3L664.9 980.8L660.9 982.3L656.6 982.7L652.3 982L648.4 980.2L645.4 977.5L643.5 974.2L643 970.7L645.7 786.5L646.4 790.1L648.5 793.4L652 796L656.5 797.8L661.6 798.5L666.7 798.1L671.3 796.6L674.9 794.1L677.3 791L678.1 787.5Z" fill="url(#sh)"/><path d="M673.7 795.1L670.4 797L666.5 798.1L662.3 798.5L658.1 798.1L654.1 797L650.6 795.1L648 792.8L646.3 790L645.7 787L646.2 784.1L647.8 781.4L650.3 779L653.6 777.2L657.4 776.1L661.5 775.7L665.7 776.1L669.6 777.2L673 779L675.7 781.3L677.4 784.1L678.1 787L677.7 790L676.2 792.7Z" fill="#5fc288"/>
<path d="M590.8 987.9L590.4 991.5L588.5 995L585.5 997.8L581.7 999.7L577.3 1000.6L572.9 1000.2L568.8 998.8L565.6 996.3L563.5 993.1L562.6 989.5L561.3 967.1L562.2 970.7L564.3 973.9L567.6 976.4L571.8 977.9L576.3 978.2L580.7 977.3L584.7 975.4L587.8 972.6L589.6 969.2L590.1 965.5Z" fill="#dd5850"/><path d="M590.2 966.7L589.7 970.4L587.8 973.8L584.7 976.7L580.8 978.6L576.3 979.5L571.8 979.1L567.7 977.7L564.4 975.2L562.2 972L561.4 968.4L560.2 947.6L561 951.3L563.3 954.5L566.6 956.9L570.8 958.4L575.4 958.7L579.9 957.9L584 955.9L587.1 953.1L589 949.7L589.5 946Z" fill="#e8a74e"/><path d="M589.5 947.3L589 951L587.1 954.4L584 957.3L580 959.2L575.5 960L570.9 959.7L566.7 958.2L563.3 955.8L561.1 952.6L560.3 949L558.8 923.3L559.6 926.9L561.9 930.1L565.3 932.6L569.6 934.1L574.3 934.4L578.9 933.5L583 931.6L586.2 928.8L588.2 925.3L588.7 921.6Z" fill="#b29540"/><path d="M588.7 923L588.2 926.7L586.3 930.1L583.1 933L579 934.9L574.4 935.8L569.7 935.4L565.4 934L562 931.5L559.7 928.3L558.9 924.6L557.7 903.8L558.5 907.4L560.8 910.6L564.3 913.1L568.6 914.6L573.4 914.9L578.1 914.1L582.3 912.1L585.6 909.3L587.5 905.8L588.1 902.1Z" fill="#c4c562"/><path d="M588.1 903.5L587.6 907.2L585.6 910.7L582.4 913.5L578.2 915.5L573.5 916.3L568.7 916L564.4 914.5L560.9 912L558.6 908.8L557.7 905.2L556.4 881.9L557.3 885.5L559.6 888.7L563.1 891.2L567.6 892.7L572.4 893L577.2 892.1L581.5 890.2L584.8 887.4L586.8 883.9L587.4 880.2Z" fill="#798948"/><path d="M587.4 881.7L586.9 885.4L584.8 888.8L581.5 891.7L577.3 893.6L572.5 894.5L567.6 894.1L563.2 892.7L559.7 890.2L557.3 887L556.5 883.4L554.7 852.7L555.6 856.3L558 859.5L561.6 862L566.1 863.4L571.1 863.8L576 862.9L580.4 861L583.8 858.1L585.9 854.7L586.4 851Z" fill="#82bd5c"/><path d="M586.5 852.6L585.9 856.2L583.8 859.7L580.5 862.5L576.1 864.5L571.2 865.3L566.2 865L561.7 863.5L558 861L555.7 857.8L554.8 854.2L553.6 834.4L554.5 838.1L556.9 841.3L560.6 843.7L565.2 845.2L570.3 845.5L575.3 844.7L579.7 842.7L583.1 839.9L585.3 836.5L585.8 832.8Z" fill="#2ca638"/><path d="M585.9 834.4L585.3 838L583.2 841.5L579.8 844.3L575.3 846.2L570.3 847.1L565.3 846.8L560.7 845.3L557 842.8L554.6 839.6L553.7 836L552.5 814.5L553.4 818.1L555.8 821.3L559.6 823.8L564.2 825.3L569.4 825.6L574.4 824.7L579 822.8L582.5 820L584.6 816.6L585.2 812.9Z" fill="#54a77b"/><path d="M590.8 987.9L590.4 991.5L588.5 995L585.5 997.8L581.7 999.7L577.3 1000.6L572.9 1000.2L568.8 998.8L565.6 996.3L563.5 993.1L562.6 989.5L552.5 814.5L553.4 818.1L555.8 821.3L559.6 823.8L564.2 825.3L569.4 825.6L574.4 824.7L579 822.8L582.5 820L584.6 816.6L585.2 812.9Z" fill="url(#sh)"/><path d="M580.1 822.1L576.6 824L572.5 825.2L568.2 825.6L564 825.2L560.1 824L556.8 822.1L554.3 819.6L552.8 816.8L552.5 813.7L553.2 810.7L555.1 807.9L557.8 805.4L561.3 803.6L565.2 802.4L569.4 802.1L573.6 802.4L577.5 803.6L580.7 805.4L583.2 807.8L584.7 810.7L585.2 813.7L584.5 816.8L582.8 819.6Z" fill="#5fc288"/>
<path d="M701.6 996.8L700.7 1000.4L698.5 1003.6L695.2 1006.1L691.2 1007.5L686.7 1007.7L682.3 1006.8L678.4 1004.8L675.4 1001.9L673.6 998.4L673.2 994.7L674.4 967L674.8 970.7L676.7 974.2L679.8 977.1L683.7 979.1L688.2 980L692.8 979.8L697 978.3L700.4 975.9L702.6 972.7L703.5 969Z" fill="#dd5850"/><path d="M703.4 970.3L702.5 974L700.3 977.2L696.9 979.6L692.7 981L688.2 981.3L683.7 980.4L679.7 978.4L676.6 975.5L674.8 972L674.3 968.2L675 951.6L675.5 955.3L677.4 958.8L680.5 961.7L684.5 963.7L689.1 964.7L693.7 964.4L698 963L701.4 960.5L703.6 957.3L704.5 953.7Z" fill="#e8a74e"/><path d="M704.4 955L703.6 958.6L701.3 961.8L697.9 964.3L693.7 965.7L689 966L684.5 965.1L680.4 963L677.3 960.1L675.5 956.6L675 952.9L675.5 940.4L676 944.1L677.9 947.6L681 950.5L685.1 952.6L689.7 953.5L694.4 953.2L698.7 951.8L702.1 949.3L704.4 946.1L705.3 942.5Z" fill="#b29540"/><path d="M705.2 943.8L704.3 947.5L702 950.7L698.6 953.1L694.3 954.6L689.6 954.8L685 953.9L681 951.9L677.8 949L675.9 945.5L675.5 941.7L676.6 915.2L677.1 919L679 922.5L682.2 925.4L686.4 927.4L691.1 928.4L695.9 928.1L700.3 926.7L703.8 924.2L706.1 921L707 917.3Z" fill="#c4c562"/><path d="M706.9 918.7L706 922.4L703.7 925.6L700.2 928.1L695.8 929.5L691 929.8L686.3 928.8L682.2 926.8L679 923.9L677 920.4L676.5 916.6L677.5 892.9L678.1 896.6L680 900.1L683.3 903L687.6 905.1L692.4 906L697.2 905.7L701.7 904.3L705.3 901.8L707.6 898.6L708.6 895Z" fill="#798948"/><path d="M708.5 896.4L707.5 900.1L705.2 903.3L701.6 905.7L697.2 907.2L692.3 907.4L687.5 906.5L683.2 904.5L680 901.6L678 898.1L677.5 894.3L678.3 874.7L678.8 878.5L680.9 882L684.2 884.9L688.5 886.9L693.4 887.8L698.3 887.6L702.8 886.1L706.5 883.7L708.9 880.5L709.8 876.8Z" fill="#82bd5c"/><path d="M709.7 878.3L708.8 882L706.4 885.2L702.8 887.6L698.2 889.1L693.3 889.3L688.4 888.4L684.1 886.4L680.8 883.5L678.8 880L678.3 876.2L679 858L679.6 861.7L681.6 865.2L685 868.1L689.4 870.1L694.3 871.1L699.3 870.8L703.9 869.4L707.6 866.9L710 863.7L711 860Z" fill="#2ca638"/><path d="M710.9 861.6L709.9 865.2L707.5 868.5L703.8 870.9L699.2 872.3L694.2 872.6L689.3 871.7L684.9 869.7L681.5 866.8L679.5 863.2L679 859.5L680.1 833.4L680.6 837.2L682.7 840.6L686.2 843.6L690.6 845.6L695.7 846.5L700.8 846.2L705.5 844.8L709.2 842.3L711.7 839.1L712.7 835.5Z" fill="#54a77b"/><path d="M701.6 996.8L700.7 1000.4L698.5 1003.6L695.2 1006.1L691.2 1007.5L686.7 1007.7L682.3 1006.8L678.4 1004.8L675.4 1001.9L673.6 998.4L673.2 994.7L680.1 833.4L680.6 837.2L682.7 840.6L686.2 843.6L690.6 845.6L695.7 846.5L700.8 846.2L705.5 844.8L709.2 842.3L711.7 839.1L712.7 835.5Z" fill="url(#sh)"/><path d="M708.5 843L705.2 844.9L701.4 846.1L697.1 846.5L692.8 846.1L688.8 844.9L685.3 843L682.6 840.5L680.8 837.6L680.1 834.5L680.5 831.4L682 828.5L684.4 826.1L687.6 824.2L691.5 823L695.6 822.6L699.8 823L703.8 824.2L707.3 826.1L710 828.5L711.8 831.4L712.6 834.4L712.3 837.5L710.9 840.5Z" fill="#5fc288"/>
<path d="M620.4 1013.6L619.9 1017.4L617.9 1020.9L614.8 1023.8L610.8 1025.6L606.3 1026.4L601.8 1025.9L597.7 1024.2L594.5 1021.5L592.4 1018.1L591.7 1014.3L591 992.9L591.7 996.7L593.8 1000.1L597.1 1002.8L601.3 1004.4L605.9 1004.9L610.4 1004.2L614.5 1002.3L617.7 999.5L619.7 996L620.3 992.1Z" fill="#dd5850"/><path d="M620.3 993.4L619.7 997.2L617.7 1000.7L614.5 1003.6L610.5 1005.5L605.9 1006.2L601.3 1005.7L597.2 1004L593.9 1001.3L591.8 997.9L591 994.1L590.2 968.5L590.9 972.3L593.1 975.7L596.5 978.4L600.7 980.1L605.4 980.6L610.1 979.8L614.3 978L617.5 975.1L619.6 971.6L620.2 967.8Z" fill="#e8a74e"/><path d="M620.2 969.1L619.6 972.9L617.5 976.4L614.3 979.3L610.1 981.2L605.4 981.9L600.8 981.4L596.5 979.7L593.2 977L591 973.6L590.2 969.8L589.2 939.2L590 943L592.2 946.5L595.7 949.2L600 950.9L604.9 951.4L609.7 950.6L613.9 948.7L617.3 945.9L619.4 942.4L620 938.5Z" fill="#b29540"/><path d="M620 939.9L619.4 943.7L617.3 947.3L614 950.1L609.7 952L604.9 952.7L600.1 952.2L595.7 950.6L592.3 947.9L590.1 944.4L589.3 940.6L588.6 921L589.4 924.8L591.7 928.2L595.2 930.9L599.6 932.6L604.5 933.1L609.4 932.4L613.7 930.5L617.1 927.6L619.3 924.1L619.9 920.2Z" fill="#c4c562"/><path d="M619.9 921.7L619.3 925.5L617.2 929L613.8 931.9L609.4 933.8L604.5 934.5L599.7 934L595.2 932.3L591.7 929.6L589.5 926.2L588.7 922.4L588 900.3L588.8 904.1L591.1 907.5L594.6 910.2L599.1 911.9L604.1 912.4L609.1 911.7L613.5 909.8L617 906.9L619.1 903.4L619.8 899.5Z" fill="#798948"/><path d="M619.8 901L619.2 904.9L617 908.4L613.5 911.3L609.1 913.2L604.1 913.9L599.2 913.4L594.7 911.7L591.1 909L588.8 905.6L588 901.8L587.6 888.1L588.4 891.9L590.7 895.3L594.3 898L598.9 899.7L603.9 900.2L608.9 899.5L613.4 897.6L616.9 894.7L619.1 891.2L619.7 887.4Z" fill="#82bd5c"/><path d="M619.7 888.9L619.1 892.7L616.9 896.2L613.4 899.1L608.9 901L603.9 901.7L598.9 901.2L594.4 899.5L590.7 896.8L588.4 893.4L587.6 889.6L586.6 857.7L587.4 861.5L589.8 864.9L593.5 867.6L598.2 869.3L603.3 869.8L608.4 869L613 867.2L616.6 864.3L618.9 860.8L619.6 856.9Z" fill="#2ca638"/><path d="M619.6 858.5L618.9 862.4L616.6 865.9L613.1 868.8L608.5 870.6L603.3 871.4L598.2 870.9L593.5 869.2L589.8 866.5L587.5 863.1L586.6 859.3L585.9 837.7L586.8 841.5L589.2 844.9L592.9 847.6L597.7 849.3L602.9 849.8L608.2 849L612.8 847.1L616.5 844.3L618.8 840.8L619.4 836.9Z" fill="#54a77b"/><path d="M620.4 1013.6L619.9 1017.4L617.9 1020.9L614.8 1023.8L610.8 1025.6L606.3 1026.4L601.8 1025.9L597.7 1024.2L594.5 1021.5L592.4 1018.1L591.7 1014.3L585.9 837.7L586.8 841.5L589.2 844.9L592.9 847.6L597.7 849.3L602.9 849.8L608.2 849L612.8 847.1L616.5 844.3L618.8 840.8L619.4 836.9Z" fill="url(#sh)"/><path d="M614.5 846.1L610.9 848.1L606.8 849.3L602.4 849.8L598.1 849.3L594 848.1L590.6 846.1L588 843.5L586.4 840.5L585.9 837.3L586.6 834.1L588.4 831.2L591.1 828.6L594.6 826.7L598.7 825.5L603 825.1L607.2 825.5L611.2 826.7L614.6 828.6L617.3 831.2L618.9 834.1L619.5 837.3L618.9 840.5L617.2 843.5Z" fill="#5fc288"/>
<path d="M651.2 1040.5L650.5 1044.5L648.4 1048L645.2 1050.8L641 1052.6L636.4 1053.2L631.9 1052.5L627.8 1050.6L624.5 1047.7L622.5 1044.1L621.9 1040.1L621.8 1012.4L622.4 1016.4L624.5 1020L627.8 1023L632 1024.9L636.7 1025.6L641.4 1025L645.6 1023.2L649 1020.3L651.2 1016.8L651.9 1012.8Z" fill="#dd5850"/><path d="M651.9 1014.1L651.1 1018L649 1021.6L645.6 1024.5L641.4 1026.3L636.7 1026.8L632 1026.1L627.8 1024.2L624.5 1021.3L622.4 1017.7L621.8 1013.7L621.7 999L622.4 1003L624.5 1006.6L627.8 1009.6L632.1 1011.5L636.8 1012.2L641.6 1011.6L645.9 1009.8L649.3 1007L651.5 1003.4L652.2 999.4Z" fill="#e8a74e"/><path d="M652.2 1000.7L651.4 1004.7L649.3 1008.3L645.9 1011.1L641.6 1012.9L636.8 1013.5L632.1 1012.8L627.8 1010.9L624.5 1007.9L622.4 1004.3L621.7 1000.3L621.6 979.5L622.3 983.5L624.4 987.1L627.8 990.1L632.2 992L637 992.7L641.9 992.1L646.2 990.3L649.7 987.5L651.9 983.9L652.7 979.9Z" fill="#b29540"/><path d="M652.6 981.2L651.9 985.2L649.7 988.8L646.2 991.7L641.8 993.5L637 994L632.2 993.3L627.8 991.4L624.4 988.5L622.3 984.8L621.6 980.8L621.5 952.7L622.2 956.7L624.4 960.3L627.9 963.3L632.3 965.2L637.3 965.9L642.2 965.3L646.7 963.5L650.3 960.7L652.5 957L653.3 953Z" fill="#c4c562"/><path d="M653.3 954.5L652.5 958.5L650.2 962.1L646.7 964.9L642.2 966.7L637.3 967.3L632.3 966.6L627.9 964.7L624.4 961.7L622.2 958.1L621.5 954.1L621.4 933.1L622.1 937.2L624.3 940.8L627.9 943.8L632.4 945.7L637.5 946.4L642.5 945.8L647.1 944L650.7 941.2L653 937.5L653.8 933.5Z" fill="#798948"/><path d="M653.7 935L653 939L650.7 942.6L647 945.5L642.5 947.3L637.4 947.9L632.4 947.2L627.9 945.2L624.3 942.3L622.1 938.6L621.4 934.6L621.3 907.6L622 911.6L624.3 915.3L627.9 918.2L632.5 920.1L637.7 920.9L642.9 920.3L647.5 918.5L651.2 915.6L653.6 912L654.4 908Z" fill="#82bd5c"/><path d="M654.3 909.5L653.5 913.5L651.2 917.1L647.5 920L642.8 921.8L637.7 922.4L632.5 921.7L627.9 919.7L624.3 916.8L622 913.1L621.3 909.1L621.2 875.9L621.9 879.9L624.2 883.6L628 886.5L632.7 888.5L638 889.2L643.3 888.6L648.1 886.8L651.9 883.9L654.3 880.3L655.1 876.3Z" fill="#2ca638"/><path d="M655.1 877.9L654.3 881.9L651.9 885.5L648.1 888.4L643.3 890.2L638 890.8L632.7 890.1L628 888.2L624.2 885.2L621.9 881.5L621.2 877.5L621.1 855L621.8 859L624.2 862.7L628 865.6L632.8 867.6L638.2 868.3L643.6 867.7L648.5 865.9L652.3 863L654.8 859.4L655.6 855.4Z" fill="#54a77b"/><path d="M651.2 1040.5L650.5 1044.5L648.4 1048L645.2 1050.8L641 1052.6L636.4 1053.2L631.9 1052.5L627.8 1050.6L624.5 1047.7L622.5 1044.1L621.9 1040.1L621.1 855L621.8 859L624.2 862.7L628 865.6L632.8 867.6L638.2 868.3L643.6 867.7L648.5 865.9L652.3 863L654.8 859.4L655.6 855.4Z" fill="url(#sh)"/><path d="M650.8 864.4L647.2 866.5L643 867.8L638.5 868.3L634 867.8L629.7 866.5L626.1 864.4L623.4 861.7L621.6 858.6L621.1 855.2L621.7 851.9L623.4 848.8L626.1 846.2L629.7 844.1L633.8 842.9L638.2 842.4L642.6 842.9L646.8 844.1L650.4 846.1L653.1 848.8L654.9 851.9L655.6 855.2L655.1 858.6L653.5 861.7Z" fill="#5fc288"/>
</svg></body></html>
